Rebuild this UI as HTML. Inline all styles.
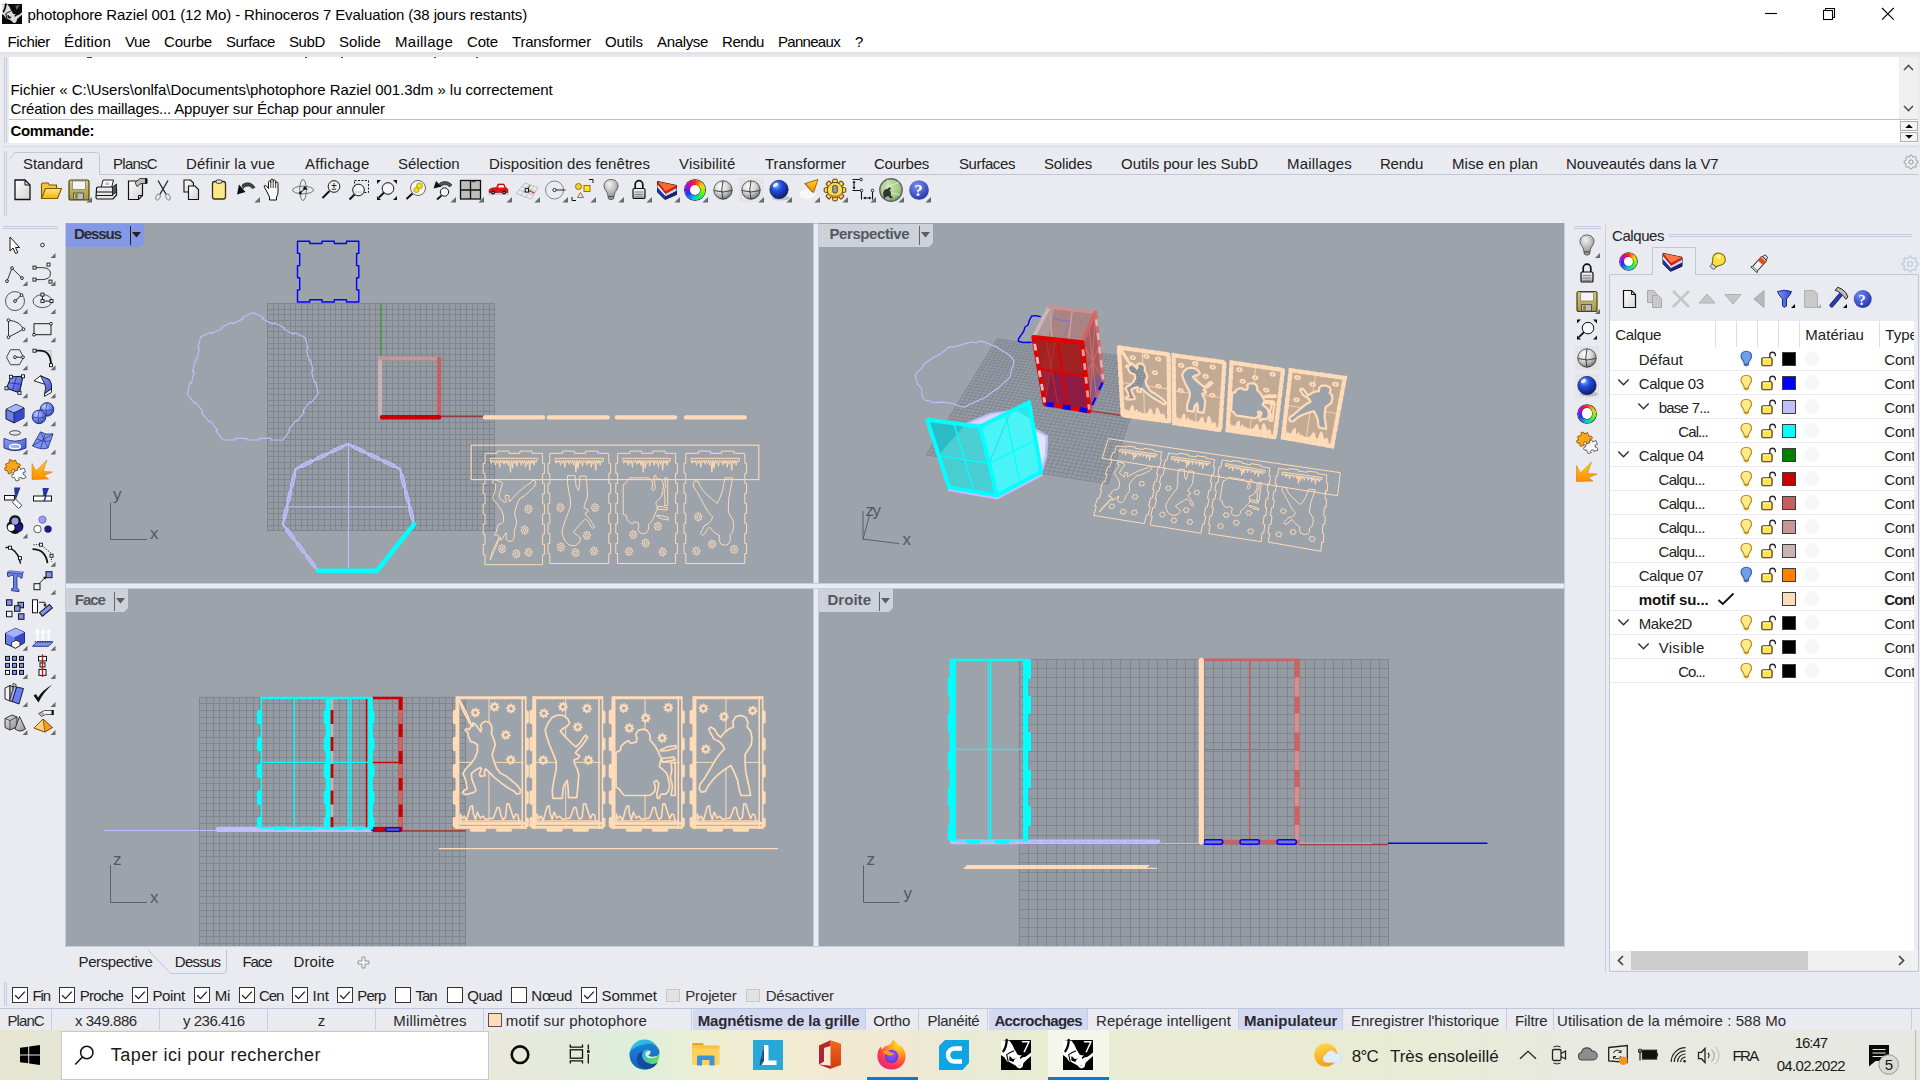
<!DOCTYPE html>
<html><head><meta charset="utf-8"><title>Rhinoceros 7</title>
<style>
html,body{margin:0;padding:0;width:1920px;height:1080px;overflow:hidden;background:#e9ebf0;font-family:"Liberation Sans",sans-serif;}
.r{position:absolute;display:block}
.t{position:absolute;white-space:pre;margin:0;padding:0}
svg{overflow:visible}
</style></head><body>
<div class="r" style="left:64px;top:221px;width:1502px;height:727px;background:#e9ebf0;"></div>
<div class="r" style="left:813px;top:223px;width:6px;height:724px;background:linear-gradient(90deg,#c3cbe1 0,#c3cbe1 1px,#e9ebf0 1.5px,#e9ebf0 4.5px,#c3cbe1 5px,#c3cbe1 6px);"></div>
<div class="r" style="left:66px;top:583px;width:1499px;height:6px;background:linear-gradient(#c3cbe1 0,#c3cbe1 1px,#e9ebf0 1.5px,#e9ebf0 4.5px,#c3cbe1 5px,#c3cbe1 6px);"></div>
<div class="r" style="left:814px;top:584px;width:4px;height:4px;background:#e9ebf0;"></div>
<div class="r" style="left:65px;top:223px;width:1500px;height:1px;background:#b9c1d6;"></div>
<div class="r" style="left:65px;top:223px;width:1px;height:724px;background:#c3cadc;"></div>
<svg class="r" style="left:66px;top:223px;overflow:hidden" width="747" height="360" viewBox="66 223 747 360"><rect x="66" y="223" width="747" height="360" fill="#9ca3ab"/><rect x="267" y="303" width="227.4" height="227.4" fill="#959ba3"/><path d="M267.5 303V530.4M267 303.5H495.4M273.5 303V530.4M267 309.5H495.4M278.5 303V530.4M267 314.5H495.4M284.5 303V530.4M267 320.5H495.4M290.5 303V530.4M267 326.5H495.4M295.5 303V530.4M267 331.5H495.4M301.5 303V530.4M267 337.5H495.4M307.5 303V530.4M267 343.5H495.4M312.5 303V530.4M267 348.5H495.4M318.5 303V530.4M267 354.5H495.4M324.5 303V530.4M267 360.5H495.4M330.5 303V530.4M267 366.5H495.4M335.5 303V530.4M267 371.5H495.4M341.5 303V530.4M267 377.5H495.4M347.5 303V530.4M267 383.5H495.4M352.5 303V530.4M267 388.5H495.4M358.5 303V530.4M267 394.5H495.4M364.5 303V530.4M267 400.5H495.4M369.5 303V530.4M267 405.5H495.4M375.5 303V530.4M267 411.5H495.4M381.5 303V530.4M267 417.5H495.4M386.5 303V530.4M267 422.5H495.4M392.5 303V530.4M267 428.5H495.4M398.5 303V530.4M267 434.5H495.4M403.5 303V530.4M267 439.5H495.4M409.5 303V530.4M267 445.5H495.4M415.5 303V530.4M267 451.5H495.4M420.5 303V530.4M267 456.5H495.4M426.5 303V530.4M267 462.5H495.4M432.5 303V530.4M267 468.5H495.4M438.5 303V530.4M267 474.5H495.4M443.5 303V530.4M267 479.5H495.4M449.5 303V530.4M267 485.5H495.4M455.5 303V530.4M267 491.5H495.4M460.5 303V530.4M267 496.5H495.4M466.5 303V530.4M267 502.5H495.4M472.5 303V530.4M267 508.5H495.4M477.5 303V530.4M267 513.5H495.4M483.5 303V530.4M267 519.5H495.4M489.5 303V530.4M267 525.5H495.4M494.5 303V530.4M267 530.5H495.4" stroke="#80858f" stroke-width="1" fill="none" shape-rendering="crispEdges"/><path d="M380.700 303V357" stroke="#4b964b" stroke-width="1.400"/><path d="M440 416.300H483" stroke="#963c3c" stroke-width="1.500"/><path d="M297.5 241.3 L309.8 241.3 L309.8 243.5 L322.0 243.5 L322.0 241.3 L334.3 241.3 L334.3 243.5 L346.5 243.5 L346.5 241.3 L358.8 241.3 L358.8 241.3 L358.8 253.4 L356.6 253.4 L356.6 265.6 L358.8 265.6 L358.8 277.7 L356.6 277.7 L356.6 289.9 L358.8 289.9 L358.8 302.0 L358.8 302.0 L346.5 302.0 L346.5 299.8 L334.3 299.8 L334.3 302.0 L322.0 302.0 L322.0 299.8 L309.8 299.8 L309.8 302.0 L297.5 302.0 L297.5 302.0 L297.5 289.9 L299.7 289.9 L299.7 277.7 L297.5 277.7 L297.5 265.6 L299.7 265.6 L299.7 253.4 L297.5 253.4 L297.5 241.3Z" fill="none" stroke="#0000ff" stroke-width="1.400" stroke-linejoin="round"/><path d="M252.8 312.6 L263.3 317.6 L262.6 319.1 L273.1 324.1 L273.8 322.7 L284.4 327.7 L283.7 329.2 L294.2 334.2 L294.9 332.8 L305.4 337.8 L305.4 337.8 L308.0 348.9 L306.4 349.3 L309.0 360.4 L310.6 360.0 L313.2 371.1 L311.6 371.5 L314.2 382.6 L315.8 382.2 L318.4 393.3 L318.4 393.3 L311.3 402.6 L310.0 401.7 L302.9 411.0 L304.2 412.0 L297.1 421.3 L295.8 420.4 L288.7 429.7 L290.0 430.7 L282.9 440.0 L282.9 440.0 L270.9 440.0 L270.9 438.4 L259.0 438.4 L259.0 440.0 L247.0 440.0 L247.0 438.4 L235.1 438.4 L235.1 440.0 L223.1 440.0 L223.1 440.0 L215.9 430.8 L217.2 429.8 L210.0 420.7 L208.8 421.6 L201.6 412.5 L202.9 411.5 L195.7 402.3 L194.5 403.3 L187.3 394.1 L187.3 394.1 L189.9 382.7 L191.5 383.0 L194.1 371.6 L192.6 371.3 L195.2 359.8 L196.8 360.2 L199.4 348.8 L197.9 348.4 L200.5 337.0 L200.5 337.0 L211.0 332.1 L211.6 333.6 L222.1 328.7 L221.4 327.2 L231.9 322.4 L232.6 323.8 L243.0 318.9 L242.3 317.5 L252.8 312.6Z" fill="none" stroke="#bfbfff" stroke-width="1.100"/><path d="M348.400 446V568M289 507H407" stroke="#bfbfff" stroke-width="1.200" fill="none"/><path d="M347.8 444.0 L400.0 468.9 L414.0 524.4 L377.1 570.7 L317.8 570.7 L282.9 524.4 L295.6 468.9Z" fill="none" stroke="#bfbfff" stroke-width="2.200" stroke-linejoin="round"/><path d="M354.1 447.0L363.5 451.5M369.7 454.5L378.1 458.4M384.3 461.4L393.7 465.9M401.7 475.6L404.2 485.5M405.9 492.2L408.1 501.1M409.8 507.8L412.3 517.7M313.6 565.1L307.3 556.8M303.1 551.3L297.6 543.8M293.4 538.3L287.1 530.0M284.4 517.7L286.7 507.8M288.2 501.1L290.3 492.2M291.8 485.5L294.1 475.6M301.9 465.9L311.3 461.4M317.5 458.4L325.9 454.5M332.1 451.5L341.5 447.0" stroke="#bfbfff" stroke-width="4" stroke-linecap="round" fill="none"/><path d="M354.1 447.0L363.5 451.5M369.7 454.5L378.1 458.4M384.3 461.4L393.7 465.9M401.7 475.6L404.2 485.5M405.9 492.2L408.1 501.1M409.8 507.8L412.3 517.7M313.6 565.1L307.3 556.8M303.1 551.3L297.6 543.8M293.4 538.3L287.1 530.0M284.4 517.7L286.7 507.8M288.2 501.1L290.3 492.2M291.8 485.5L294.1 475.6M301.9 465.9L311.3 461.4M317.5 458.4L325.9 454.5M332.1 451.5L341.5 447.0" stroke="#a4a8c8" stroke-width="1.200" stroke-linecap="round" fill="none" opacity="0.700"/><path d="M414 524.400L377.100 570.700H317.800" stroke="#00ffff" stroke-width="4.600" fill="none" stroke-linejoin="round" stroke-linecap="round"/><path d="M380 358V417.500" stroke="#c8b4b4" stroke-width="3.800" stroke-linecap="round"/><path d="M380 358.600H439" stroke="#c89696" stroke-width="3.600" stroke-linecap="round"/><path d="M439 358.600V417" stroke="#c85f5f" stroke-width="3.800" stroke-linecap="round"/><path d="M382 417.200H439" stroke="#c80000" stroke-width="4.600" stroke-linecap="round"/><path d="M485 417.400H543" stroke="#ffdbb7" stroke-width="4.400" stroke-linecap="round"/><path d="M549 417.400H607.6" stroke="#ffdbb7" stroke-width="4.400" stroke-linecap="round"/><path d="M617 417.400H675" stroke="#ffdbb7" stroke-width="4.400" stroke-linecap="round"/><path d="M686 417.400H744.6" stroke="#ffdbb7" stroke-width="4.400" stroke-linecap="round"/><rect x="471.200" y="445.200" width="287.600" height="34.400" fill="none" stroke="#ffdbb7" stroke-width="1.100"/><path d="M485.0 453.3 L497.3 453.3 L497.3 451.1 L508.9 451.1 L508.9 453.3 L519.9 453.3 L519.9 451.1 L532.2 451.1 L532.2 453.3 L542.6 453.3 L542.6 453.3 L542.6 463.4 L544.4 463.4 L544.4 473.6 L542.6 473.6 L542.6 483.7 L544.4 483.7 L544.4 493.8 L542.6 493.8 L542.6 503.9 L544.4 503.9 L544.4 514.1 L542.6 514.1 L542.6 524.2 L544.4 524.2 L544.4 534.3 L542.6 534.3 L542.6 544.4 L544.4 544.4 L544.4 554.6 L542.6 554.6 L542.6 564.7 L542.6 564.7 L485.0 564.7 L485.0 564.7 L485.0 554.6 L483.2 554.6 L483.2 544.4 L485.0 544.4 L485.0 534.3 L483.2 534.3 L483.2 524.2 L485.0 524.2 L485.0 514.1 L483.2 514.1 L483.2 503.9 L485.0 503.9 L485.0 493.8 L483.2 493.8 L483.2 483.7 L485.0 483.7 L485.0 473.6 L483.2 473.6 L483.2 463.4 L485.0 463.4 L485.0 453.3ZM507.1 540.2 L509.7 541.6 L512.2 540.8 L514.1 537.9 L514.3 534.4 L514.1 531.0 L515.8 526.4 L516.8 521.8 L515.8 518.3 L514.5 513.7 L515.8 507.9 L517.9 502.1 L520.4 498.1 L524.5 495.8 L529.6 491.2 L533.7 487.2 L535.8 483.7 L535.2 480.8 L532.7 480.2 L531.2 482.5 L526.6 485.4 L521.4 489.5 L516.3 494.1 L512.2 498.7 L509.7 501.6 L508.7 498.7 L509.2 495.8 L505.6 495.2 L505.1 497.5 L506.6 501.6 L505.6 502.7 L502.0 500.4 L499.0 497.5 L499.5 492.9 L502.5 483.7 L501.5 482.0 L494.9 479.7 L492.3 481.4 L493.3 483.1 L495.9 484.8 L494.9 491.8 L492.8 497.5 L494.4 501.0 L498.4 505.6 L501.5 510.2 L503.6 516.0 L503.6 521.8 L501.5 523.5 L498.4 524.6 L496.9 528.7 L496.4 532.1 L494.4 533.9 L495.4 535.6 L497.4 534.4 L499.0 537.7 L496.9 544.8 L493.8 551.7 L490.3 559.8 L491.8 552.9 L494.9 546.0 L497.9 539.6 L500.5 537.3 L500.0 540.2 L502.0 539.1 L504.6 535.0 L506.1 532.7 L506.6 535.6 L505.9 537.9ZM505.8 548.9 L505.7 548.0 L504.5 547.7 L504.3 547.2 L504.7 545.9 L504.1 545.4 L503.0 546.1 L502.5 545.9 L502.0 544.6 L501.3 544.7 L501.0 546.1 L500.5 546.3 L499.4 545.9 L498.9 546.5 L499.5 547.7 L499.4 548.3 L498.3 548.9 L498.4 549.7 L499.5 550.0 L499.8 550.5 L499.4 551.8 L499.9 552.4 L501.0 551.7 L501.5 551.8 L502.0 553.1 L502.7 553.0 L503.0 551.7 L503.5 551.4 L504.7 551.8 L505.1 551.2 L504.5 550.0 L504.7 549.5ZM503.4 548.9 L503.0 547.7 L502.0 547.3 L501.0 547.7 L500.6 548.9 L501.0 550.0 L502.0 550.5 L503.0 550.0ZM520.1 553.8 L520.0 553.0 L518.8 552.7 L518.6 552.1 L519.0 550.8 L518.4 550.3 L517.4 551.0 L516.9 550.8 L516.3 549.6 L515.6 549.7 L515.3 551.0 L514.8 551.3 L513.7 550.8 L513.2 551.5 L513.8 552.7 L513.7 553.2 L512.6 553.8 L512.7 554.6 L513.8 555.0 L514.1 555.5 L513.7 556.8 L514.3 557.3 L515.3 556.6 L515.8 556.8 L516.3 558.0 L517.1 557.9 L517.4 556.6 L517.8 556.3 L519.0 556.8 L519.4 556.2 L518.8 555.0 L519.0 554.4ZM517.7 553.8 L517.3 552.7 L516.3 552.2 L515.3 552.7 L514.9 553.8 L515.3 554.9 L516.3 555.4 L517.3 554.9ZM532.3 552.3 L532.3 551.5 L531.1 551.2 L530.8 550.6 L531.2 549.3 L530.7 548.8 L529.6 549.5 L529.1 549.3 L528.6 548.1 L527.9 548.2 L527.6 549.5 L527.1 549.8 L526.0 549.3 L525.5 550.0 L526.1 551.2 L526.0 551.7 L524.9 552.3 L524.9 553.1 L526.1 553.5 L526.4 554.0 L526.0 555.3 L526.5 555.8 L527.6 555.1 L528.1 555.3 L528.6 556.5 L529.3 556.4 L529.6 555.1 L530.1 554.8 L531.2 555.3 L531.7 554.7 L531.1 553.5 L531.2 552.9ZM530.0 552.3 L529.6 551.2 L528.6 550.7 L527.6 551.2 L527.2 552.3 L527.6 553.5 L528.6 553.9 L529.6 553.5ZM528.4 530.1 L528.4 529.2 L527.2 528.9 L526.9 528.4 L527.3 527.1 L526.8 526.6 L525.7 527.3 L525.2 527.1 L524.7 525.8 L524.0 525.9 L523.7 527.3 L523.2 527.5 L522.1 527.1 L521.6 527.7 L522.2 528.9 L522.1 529.5 L521.0 530.1 L521.1 530.9 L522.2 531.2 L522.5 531.7 L522.1 533.0 L522.6 533.6 L523.7 532.9 L524.2 533.0 L524.7 534.3 L525.4 534.2 L525.7 532.9 L526.2 532.6 L527.3 533.0 L527.8 532.4 L527.2 531.2 L527.3 530.6ZM526.1 530.1 L525.7 528.9 L524.7 528.5 L523.7 528.9 L523.3 530.1 L523.7 531.2 L524.7 531.7 L525.7 531.2ZM532.1 509.1 L532.1 508.2 L530.9 507.9 L530.6 507.4 L531.0 506.1 L530.5 505.6 L529.4 506.3 L528.9 506.1 L528.4 504.9 L527.7 504.9 L527.4 506.3 L526.9 506.5 L525.8 506.1 L525.3 506.7 L525.9 507.9 L525.8 508.5 L524.7 509.1 L524.7 509.9 L525.9 510.2 L526.2 510.7 L525.8 512.0 L526.3 512.6 L527.4 511.9 L527.9 512.0 L528.4 513.3 L529.1 513.2 L529.4 511.9 L529.9 511.6 L531.0 512.0 L531.5 511.4 L530.9 510.2 L531.0 509.7ZM529.8 509.1 L529.4 507.9 L528.4 507.5 L527.4 507.9 L527.0 509.1 L527.4 510.2 L528.4 510.7 L529.4 510.2ZM490.2 458.3 L537.4 458.3 L537.1 460.3 L536.2 462.3 L535.4 460.6 L534.9 460.3 L534.1 465.3 L533.2 460.6 L532.8 460.3 L531.9 463.3 L531.1 460.6 L530.6 460.3 L529.8 470.3 L528.9 460.6 L528.5 460.3 L527.6 464.3 L526.8 460.6 L526.4 460.3 L525.5 467.3 L524.6 460.6 L524.2 460.3 L523.3 463.3 L522.5 460.6 L522.1 460.3 L521.2 465.3 L520.3 460.6 L519.9 460.3 L519.1 462.3 L518.2 460.6 L517.8 460.3 L516.9 466.3 L516.1 460.6 L515.6 460.3 L514.8 463.3 L513.9 460.6 L513.5 460.3 L512.6 468.3 L511.8 460.6 L511.3 460.3 L510.5 472.3 L509.6 460.6 L509.2 460.3 L508.3 465.3 L507.5 460.6 L507.0 460.3 L506.2 463.3 L505.3 460.6 L504.9 460.3 L504.0 464.3 L503.2 460.6 L502.8 460.3 L501.9 462.3 L501.0 460.6 L500.6 460.3 L499.7 467.3 L498.9 460.6 L498.5 460.3 L497.6 463.3 L496.7 460.6 L496.3 460.3 L495.5 465.3 L494.6 460.6 L494.2 460.3 L493.3 462.3 L492.5 460.6 L492.0 460.3 L491.2 463.3 L490.3 460.6 L490.2 460.5ZM549.8 453.3 L562.4 453.3 L562.4 451.1 L574.3 451.1 L574.3 453.3 L585.6 453.3 L585.6 451.1 L598.1 451.1 L598.1 453.3 L608.8 453.3 L608.8 453.3 L608.8 463.3 L610.6 463.3 L610.6 473.3 L608.8 473.3 L608.8 483.4 L610.6 483.4 L610.6 493.4 L608.8 493.4 L608.8 503.4 L610.6 503.4 L610.6 513.4 L608.8 513.4 L608.8 523.4 L610.6 523.4 L610.6 533.4 L608.8 533.4 L608.8 543.5 L610.6 543.5 L610.6 553.5 L608.8 553.5 L608.8 563.5 L608.8 563.5 L549.8 563.5 L549.8 563.5 L549.8 553.5 L548.0 553.5 L548.0 543.5 L549.8 543.5 L549.8 533.4 L548.0 533.4 L548.0 523.4 L549.8 523.4 L549.8 513.4 L548.0 513.4 L548.0 503.4 L549.8 503.4 L549.8 493.4 L548.0 493.4 L548.0 483.4 L549.8 483.4 L549.8 473.3 L548.0 473.3 L548.0 463.3 L549.8 463.3 L549.8 453.3ZM567.2 543.6 L571.4 545.7 L575.6 545.4 L579.3 542.5 L580.6 539.0 L578.7 536.1 L575.1 533.8 L573.5 532.1 L576.7 528.1 L581.9 522.3 L585.6 518.8 L588.7 522.3 L591.3 526.9 L592.9 528.6 L594.5 526.9 L592.4 523.4 L589.8 519.4 L586.6 515.9 L585.0 513.6 L588.2 511.3 L587.1 509.0 L584.0 507.9 L584.5 504.4 L586.6 499.8 L587.7 495.2 L587.1 488.3 L586.6 481.3 L586.1 476.1 L579.8 476.1 L579.6 483.6 L578.7 490.6 L576.1 486.0 L575.4 480.2 L575.1 475.6 L567.7 475.6 L567.4 482.5 L568.8 491.7 L570.4 499.8 L570.4 506.7 L568.3 512.5 L565.6 519.4 L563.0 527.5 L562.0 533.2 L564.1 539.0ZM564.7 547.1 L564.7 546.3 L563.5 545.9 L563.2 545.4 L563.6 544.1 L563.0 543.6 L562.0 544.3 L561.5 544.1 L560.9 542.9 L560.2 543.0 L559.9 544.3 L559.4 544.6 L558.2 544.1 L557.7 544.7 L558.4 545.9 L558.2 546.5 L557.1 547.1 L557.2 547.9 L558.4 548.2 L558.6 548.8 L558.2 550.1 L558.8 550.6 L559.9 549.9 L560.4 550.1 L560.9 551.3 L561.7 551.2 L562.0 549.9 L562.4 549.6 L563.6 550.1 L564.1 549.4 L563.5 548.2 L563.6 547.7ZM562.4 547.1 L561.9 546.0 L560.9 545.5 L559.9 546.0 L559.5 547.1 L559.9 548.2 L560.9 548.7 L561.9 548.2ZM579.4 552.6 L579.4 551.8 L578.1 551.5 L577.9 550.9 L578.3 549.6 L577.7 549.1 L576.7 549.8 L576.1 549.6 L575.6 548.4 L574.9 548.5 L574.5 549.8 L574.1 550.1 L572.9 549.6 L572.4 550.3 L573.1 551.5 L572.9 552.0 L571.8 552.6 L571.8 553.4 L573.1 553.8 L573.3 554.3 L572.9 555.6 L573.5 556.1 L574.5 555.4 L575.1 555.6 L575.6 556.8 L576.3 556.7 L576.7 555.4 L577.1 555.1 L578.3 555.6 L578.8 555.0 L578.1 553.8 L578.3 553.2ZM577.1 552.6 L576.6 551.5 L575.6 551.0 L574.6 551.5 L574.1 552.6 L574.6 553.7 L575.6 554.2 L576.6 553.7ZM597.8 551.1 L597.7 550.3 L596.5 550.0 L596.3 549.4 L596.7 548.1 L596.1 547.6 L595.0 548.3 L594.5 548.1 L594.0 546.9 L593.2 547.0 L592.9 548.3 L592.4 548.6 L591.3 548.1 L590.8 548.8 L591.4 550.0 L591.3 550.5 L590.1 551.1 L590.2 551.9 L591.4 552.3 L591.7 552.8 L591.3 554.1 L591.8 554.6 L592.9 553.9 L593.4 554.1 L594.0 555.3 L594.7 555.2 L595.0 553.9 L595.5 553.6 L596.7 554.1 L597.1 553.5 L596.5 552.3 L596.7 551.7ZM595.4 551.1 L595.0 550.0 L594.0 549.5 L592.9 550.0 L592.5 551.1 L592.9 552.3 L594.0 552.7 L595.0 552.3ZM590.8 535.5 L590.7 534.7 L589.5 534.4 L589.2 533.9 L589.6 532.6 L589.1 532.0 L588.0 532.7 L587.5 532.6 L586.9 531.3 L586.2 531.4 L585.9 532.7 L585.4 533.0 L584.2 532.6 L583.7 533.2 L584.4 534.4 L584.2 535.0 L583.1 535.5 L583.2 536.4 L584.4 536.7 L584.6 537.2 L584.2 538.5 L584.8 539.0 L585.9 538.3 L586.4 538.5 L586.9 539.8 L587.7 539.7 L588.0 538.3 L588.5 538.1 L589.6 538.5 L590.1 537.9 L589.5 536.7 L589.6 536.1ZM588.4 535.5 L588.0 534.4 L586.9 533.9 L585.9 534.4 L585.5 535.5 L585.9 536.7 L586.9 537.1 L588.0 536.7ZM564.2 507.6 L564.1 506.8 L562.9 506.5 L562.7 506.0 L563.1 504.7 L562.5 504.1 L561.4 504.8 L560.9 504.7 L560.4 503.4 L559.6 503.5 L559.3 504.8 L558.9 505.1 L557.7 504.7 L557.2 505.3 L557.8 506.5 L557.7 507.0 L556.6 507.6 L556.6 508.5 L557.8 508.8 L558.1 509.3 L557.7 510.6 L558.3 511.1 L559.3 510.4 L559.9 510.6 L560.4 511.8 L561.1 511.8 L561.4 510.4 L561.9 510.2 L563.1 510.6 L563.6 510.0 L562.9 508.8 L563.1 508.2ZM561.8 507.6 L561.4 506.5 L560.4 506.0 L559.4 506.5 L558.9 507.6 L559.4 508.8 L560.4 509.2 L561.4 508.8ZM598.8 507.6 L598.8 506.8 L597.6 506.5 L597.3 506.0 L597.7 504.7 L597.1 504.1 L596.1 504.8 L595.5 504.7 L595.0 503.4 L594.3 503.5 L594.0 504.8 L593.5 505.1 L592.3 504.7 L591.8 505.3 L592.5 506.5 L592.3 507.0 L591.2 507.6 L591.3 508.5 L592.5 508.8 L592.7 509.3 L592.3 510.6 L592.9 511.1 L594.0 510.4 L594.5 510.6 L595.0 511.8 L595.8 511.8 L596.1 510.4 L596.5 510.2 L597.7 510.6 L598.2 510.0 L597.6 508.8 L597.7 508.2ZM596.5 507.6 L596.0 506.5 L595.0 506.0 L594.0 506.5 L593.6 507.6 L594.0 508.8 L595.0 509.2 L596.0 508.8ZM555.0 458.3 L603.6 458.3 L603.3 460.3 L602.4 462.3 L601.5 460.6 L601.1 460.3 L600.2 465.3 L599.3 460.6 L598.9 460.3 L598.0 463.3 L597.1 460.6 L596.6 460.3 L595.8 470.3 L594.9 460.6 L594.4 460.3 L593.5 464.3 L592.7 460.6 L592.2 460.3 L591.3 467.3 L590.5 460.6 L590.0 460.3 L589.1 463.3 L588.2 460.6 L587.8 460.3 L586.9 465.3 L586.0 460.6 L585.6 460.3 L584.7 462.3 L583.8 460.6 L583.4 460.3 L582.5 466.3 L581.6 460.6 L581.2 460.3 L580.3 463.3 L579.4 460.6 L579.0 460.3 L578.1 468.3 L577.2 460.6 L576.8 460.3 L575.9 472.3 L575.0 460.6 L574.6 460.3 L573.7 465.3 L572.8 460.6 L572.3 460.3 L571.5 463.3 L570.6 460.6 L570.1 460.3 L569.2 464.3 L568.4 460.6 L567.9 460.3 L567.0 462.3 L566.2 460.6 L565.7 460.3 L564.8 467.3 L563.9 460.6 L563.5 460.3 L562.6 463.3 L561.7 460.6 L561.3 460.3 L560.4 465.3 L559.5 460.6 L559.1 460.3 L558.2 462.3 L557.3 460.6 L556.9 460.3 L556.0 463.3 L555.1 460.6 L555.0 460.5ZM617.6 453.3 L630.0 453.3 L630.0 451.1 L641.7 451.1 L641.7 453.3 L652.8 453.3 L652.8 451.1 L665.1 451.1 L665.1 453.3 L675.6 453.3 L675.6 453.3 L675.6 463.3 L677.4 463.3 L677.4 473.3 L675.6 473.3 L675.6 483.4 L677.4 483.4 L677.4 493.4 L675.6 493.4 L675.6 503.4 L677.4 503.4 L677.4 513.4 L675.6 513.4 L675.6 523.4 L677.4 523.4 L677.4 533.4 L675.6 533.4 L675.6 543.5 L677.4 543.5 L677.4 553.5 L675.6 553.5 L675.6 563.5 L675.6 563.5 L617.6 563.5 L617.6 563.5 L617.6 553.5 L615.8 553.5 L615.8 543.5 L617.6 543.5 L617.6 533.4 L615.8 533.4 L615.8 523.4 L617.6 523.4 L617.6 513.4 L615.8 513.4 L615.8 503.4 L617.6 503.4 L617.6 493.4 L615.8 493.4 L615.8 483.4 L617.6 483.4 L617.6 473.3 L615.8 473.3 L615.8 463.3 L617.6 463.3 L617.6 453.3ZM623.2 514.2 L626.5 515.9 L627.0 519.4 L629.6 522.3 L632.7 524.0 L634.2 521.7 L638.3 522.9 L638.9 526.3 L638.0 529.8 L639.9 532.7 L643.5 533.8 L646.6 532.7 L648.6 529.2 L648.6 524.6 L650.2 522.9 L652.8 519.4 L654.8 514.8 L656.4 511.3 L657.4 509.0 L656.4 505.6 L655.8 502.1 L658.4 499.8 L661.5 496.3 L662.5 491.7 L663.6 486.0 L662.5 481.3 L660.5 479.0 L657.4 479.0 L656.4 477.9 L655.8 475.6 L654.3 475.6 L653.8 479.0 L654.8 483.6 L655.3 488.3 L653.8 490.6 L651.7 489.4 L652.8 484.8 L652.2 481.3 L650.2 479.0 L648.1 477.9 L629.6 477.9 L627.5 480.2 L625.5 483.6 L623.2 484.8ZM656.4 515.9 L661.5 518.8 L668.2 520.0 L668.2 517.7 L662.5 515.9 L656.9 515.4ZM657.4 509.0 L666.7 510.2 L667.7 507.9 L658.4 506.1ZM664.6 505.6 L667.7 505.6 L667.7 477.9 L664.6 477.9 L665.6 486.0 L664.1 492.9 L665.1 499.8ZM632.8 551.5 L632.8 550.6 L631.6 550.3 L631.3 549.8 L631.7 548.5 L631.2 548.0 L630.1 548.7 L629.6 548.5 L629.1 547.3 L628.3 547.3 L628.0 548.7 L627.6 548.9 L626.4 548.5 L625.9 549.1 L626.6 550.3 L626.4 550.9 L625.3 551.5 L625.4 552.3 L626.6 552.6 L626.8 553.1 L626.4 554.4 L627.0 555.0 L628.0 554.3 L628.5 554.4 L629.1 555.7 L629.8 555.6 L630.1 554.3 L630.6 554.0 L631.7 554.4 L632.2 553.8 L631.6 552.6 L631.7 552.1ZM630.5 551.5 L630.1 550.3 L629.1 549.9 L628.1 550.3 L627.6 551.5 L628.1 552.6 L629.1 553.1 L630.1 552.6ZM666.3 551.9 L666.2 551.1 L665.0 550.8 L664.8 550.2 L665.2 548.9 L664.6 548.4 L663.6 549.1 L663.1 549.0 L662.5 547.7 L661.8 547.8 L661.5 549.1 L661.0 549.4 L659.9 548.9 L659.4 549.6 L660.0 550.8 L659.9 551.3 L658.8 551.9 L658.9 552.7 L660.0 553.1 L660.3 553.6 L659.9 554.9 L660.4 555.4 L661.5 554.7 L662.0 554.9 L662.5 556.1 L663.3 556.1 L663.6 554.7 L664.0 554.4 L665.2 554.9 L665.7 554.3 L665.0 553.1 L665.2 552.5ZM664.0 551.9 L663.5 550.8 L662.5 550.3 L661.5 550.8 L661.1 551.9 L661.5 553.1 L662.5 553.5 L663.5 553.1ZM649.3 543.0 L649.2 542.2 L648.0 541.9 L647.8 541.4 L648.2 540.1 L647.6 539.5 L646.6 540.2 L646.1 540.1 L645.5 538.8 L644.8 538.9 L644.5 540.2 L644.0 540.5 L642.9 540.1 L642.4 540.7 L643.0 541.9 L642.9 542.5 L641.8 543.0 L641.9 543.9 L643.0 544.2 L643.3 544.7 L642.9 546.0 L643.5 546.5 L644.5 545.8 L645.0 546.0 L645.5 547.3 L646.3 547.2 L646.6 545.8 L647.0 545.6 L648.2 546.0 L648.7 545.4 L648.0 544.2 L648.2 543.6ZM647.0 543.0 L646.6 541.9 L645.5 541.4 L644.5 541.9 L644.1 543.0 L644.5 544.2 L645.5 544.6 L646.6 544.2ZM636.9 534.6 L636.9 533.8 L635.7 533.5 L635.4 532.9 L635.8 531.6 L635.3 531.1 L634.2 531.8 L633.7 531.7 L633.2 530.4 L632.5 530.5 L632.2 531.8 L631.7 532.1 L630.5 531.6 L630.1 532.3 L630.7 533.5 L630.5 534.0 L629.4 534.6 L629.5 535.4 L630.7 535.8 L630.9 536.3 L630.5 537.6 L631.1 538.1 L632.2 537.4 L632.7 537.6 L633.2 538.8 L633.9 538.8 L634.2 537.4 L634.7 537.1 L635.8 537.6 L636.3 537.0 L635.7 535.8 L635.8 535.2ZM634.6 534.6 L634.2 533.5 L633.2 533.0 L632.2 533.5 L631.8 534.6 L632.2 535.8 L633.2 536.2 L634.2 535.8ZM661.7 526.3 L661.6 525.5 L660.4 525.2 L660.2 524.6 L660.6 523.3 L660.0 522.8 L658.9 523.5 L658.4 523.3 L657.9 522.1 L657.2 522.2 L656.9 523.5 L656.4 523.8 L655.2 523.3 L654.8 524.0 L655.4 525.2 L655.2 525.7 L654.1 526.3 L654.2 527.1 L655.4 527.5 L655.7 528.0 L655.2 529.3 L655.8 529.8 L656.9 529.1 L657.4 529.3 L657.9 530.5 L658.6 530.4 L658.9 529.1 L659.4 528.8 L660.6 529.3 L661.0 528.7 L660.4 527.5 L660.6 526.9ZM659.3 526.3 L658.9 525.2 L657.9 524.7 L656.9 525.2 L656.5 526.3 L656.9 527.5 L657.9 527.9 L658.9 527.5ZM622.8 458.3 L670.4 458.3 L670.1 460.3 L669.2 462.3 L668.3 460.6 L667.9 460.3 L667.0 465.3 L666.2 460.6 L665.7 460.3 L664.9 463.3 L664.0 460.6 L663.6 460.3 L662.7 470.3 L661.9 460.6 L661.4 460.3 L660.6 464.3 L659.7 460.6 L659.3 460.3 L658.4 467.3 L657.5 460.6 L657.1 460.3 L656.2 463.3 L655.4 460.6 L654.9 460.3 L654.1 465.3 L653.2 460.6 L652.8 460.3 L651.9 462.3 L651.0 460.6 L650.6 460.3 L649.7 466.3 L648.9 460.6 L648.4 460.3 L647.6 463.3 L646.7 460.6 L646.3 460.3 L645.4 468.3 L644.5 460.6 L644.1 460.3 L643.2 472.3 L642.4 460.6 L641.9 460.3 L641.1 465.3 L640.2 460.6 L639.8 460.3 L638.9 463.3 L638.1 460.6 L637.6 460.3 L636.8 464.3 L635.9 460.6 L635.5 460.3 L634.6 462.3 L633.7 460.6 L633.3 460.3 L632.4 467.3 L631.6 460.6 L631.1 460.3 L630.3 463.3 L629.4 460.6 L629.0 460.3 L628.1 465.3 L627.2 460.6 L626.8 460.3 L625.9 462.3 L625.1 460.6 L624.6 460.3 L623.8 463.3 L622.9 460.6 L622.8 460.5ZM685.8 453.3 L698.4 453.3 L698.4 451.1 L710.3 451.1 L710.3 453.3 L721.6 453.3 L721.6 451.1 L734.1 451.1 L734.1 453.3 L744.8 453.3 L744.8 453.3 L744.8 463.3 L746.6 463.3 L746.6 473.3 L744.8 473.3 L744.8 483.4 L746.6 483.4 L746.6 493.4 L744.8 493.4 L744.8 503.4 L746.6 503.4 L746.6 513.4 L744.8 513.4 L744.8 523.4 L746.6 523.4 L746.6 533.4 L744.8 533.4 L744.8 543.5 L746.6 543.5 L746.6 553.5 L744.8 553.5 L744.8 563.5 L744.8 563.5 L685.8 563.5 L685.8 563.5 L685.8 553.5 L684.0 553.5 L684.0 543.5 L685.8 543.5 L685.8 533.4 L684.0 533.4 L684.0 523.4 L685.8 523.4 L685.8 513.4 L684.0 513.4 L684.0 503.4 L685.8 503.4 L685.8 493.4 L684.0 493.4 L684.0 483.4 L685.8 483.4 L685.8 473.3 L684.0 473.3 L684.0 463.3 L685.8 463.3 L685.8 453.3ZM718.9 540.2 L721.0 544.2 L725.2 545.4 L728.9 543.6 L730.5 539.6 L730.0 535.5 L732.6 532.1 L733.6 526.3 L733.1 520.6 L730.5 515.9 L728.4 512.5 L728.4 505.6 L728.9 497.5 L730.5 489.4 L732.1 481.3 L732.6 477.9 L725.2 477.9 L723.7 483.6 L722.6 490.6 L720.0 497.5 L717.4 503.3 L712.7 499.8 L707.4 495.2 L703.2 490.6 L700.1 486.0 L698.0 481.3 L694.8 480.8 L693.2 483.6 L693.8 487.1 L696.9 491.7 L700.1 497.5 L703.2 503.3 L706.4 509.0 L709.5 513.6 L712.7 517.1 L711.1 520.6 L708.5 523.4 L704.3 525.7 L703.2 528.1 L701.6 530.9 L700.6 533.8 L702.2 535.5 L705.3 533.2 L706.9 529.8 L709.5 526.9 L712.7 530.9 L715.8 533.8 L719.5 535.5ZM700.2 551.1 L700.1 550.3 L698.9 550.0 L698.7 549.4 L699.1 548.1 L698.5 547.6 L697.4 548.3 L696.9 548.1 L696.4 546.9 L695.6 547.0 L695.3 548.3 L694.9 548.6 L693.7 548.1 L693.2 548.8 L693.8 550.0 L693.7 550.5 L692.6 551.1 L692.6 551.9 L693.8 552.3 L694.1 552.8 L693.7 554.1 L694.3 554.6 L695.3 553.9 L695.9 554.1 L696.4 555.3 L697.1 555.2 L697.4 553.9 L697.9 553.6 L699.1 554.1 L699.6 553.5 L698.9 552.3 L699.1 551.7ZM697.8 551.1 L697.4 550.0 L696.4 549.5 L695.4 550.0 L694.9 551.1 L695.4 552.3 L696.4 552.7 L697.4 552.3ZM738.0 549.4 L737.9 548.6 L736.7 548.2 L736.4 547.7 L736.9 546.4 L736.3 545.9 L735.2 546.6 L734.7 546.4 L734.2 545.2 L733.4 545.3 L733.1 546.6 L732.6 546.9 L731.4 546.4 L731.0 547.1 L731.6 548.2 L731.5 548.8 L730.3 549.4 L730.4 550.2 L731.6 550.5 L731.9 551.1 L731.4 552.4 L732.0 552.9 L733.1 552.2 L733.6 552.4 L734.2 553.6 L734.9 553.5 L735.2 552.2 L735.7 551.9 L736.9 552.4 L737.3 551.7 L736.7 550.5 L736.9 550.0ZM735.6 549.4 L735.2 548.3 L734.2 547.8 L733.1 548.3 L732.7 549.4 L733.1 550.5 L734.2 551.0 L735.2 550.5ZM716.0 544.2 L715.9 543.4 L714.7 543.0 L714.4 542.5 L714.8 541.2 L714.3 540.7 L713.2 541.4 L712.7 541.2 L712.1 540.0 L711.4 540.1 L711.1 541.4 L710.6 541.7 L709.4 541.2 L708.9 541.9 L709.6 543.0 L709.4 543.6 L708.3 544.2 L708.4 545.0 L709.6 545.4 L709.8 545.9 L709.4 547.2 L710.0 547.7 L711.1 547.0 L711.6 547.2 L712.1 548.4 L712.9 548.3 L713.2 547.0 L713.7 546.7 L714.8 547.2 L715.3 546.5 L714.7 545.4 L714.8 544.8ZM713.6 544.2 L713.2 543.1 L712.1 542.6 L711.1 543.1 L710.7 544.2 L711.1 545.3 L712.1 545.8 L713.2 545.3ZM702.1 516.9 L702.0 516.0 L700.8 515.7 L700.6 515.2 L701.0 513.9 L700.4 513.4 L699.3 514.1 L698.8 513.9 L698.3 512.7 L697.5 512.7 L697.2 514.1 L696.7 514.3 L695.6 513.9 L695.1 514.5 L695.7 515.7 L695.6 516.3 L694.5 516.9 L694.5 517.7 L695.7 518.0 L696.0 518.5 L695.6 519.8 L696.2 520.4 L697.2 519.7 L697.7 519.8 L698.3 521.1 L699.0 521.0 L699.3 519.7 L699.8 519.4 L701.0 519.8 L701.5 519.2 L700.8 518.0 L701.0 517.5ZM699.7 516.9 L699.3 515.7 L698.3 515.3 L697.3 515.7 L696.8 516.9 L697.3 518.0 L698.3 518.5 L699.3 518.0ZM691.0 458.3 L739.6 458.3 L739.3 460.3 L738.4 462.3 L737.5 460.6 L737.1 460.3 L736.2 465.3 L735.3 460.6 L734.9 460.3 L734.0 463.3 L733.1 460.6 L732.6 460.3 L731.8 470.3 L730.9 460.6 L730.4 460.3 L729.5 464.3 L728.7 460.6 L728.2 460.3 L727.3 467.3 L726.5 460.6 L726.0 460.3 L725.1 463.3 L724.2 460.6 L723.8 460.3 L722.9 465.3 L722.0 460.6 L721.6 460.3 L720.7 462.3 L719.8 460.6 L719.4 460.3 L718.5 466.3 L717.6 460.6 L717.2 460.3 L716.3 463.3 L715.4 460.6 L715.0 460.3 L714.1 468.3 L713.2 460.6 L712.8 460.3 L711.9 472.3 L711.0 460.6 L710.6 460.3 L709.7 465.3 L708.8 460.6 L708.3 460.3 L707.5 463.3 L706.6 460.6 L706.1 460.3 L705.2 464.3 L704.4 460.6 L703.9 460.3 L703.0 462.3 L702.2 460.6 L701.7 460.3 L700.8 467.3 L699.9 460.6 L699.5 460.3 L698.6 463.3 L697.7 460.6 L697.3 460.3 L696.4 465.3 L695.5 460.6 L695.1 460.3 L694.2 462.3 L693.3 460.6 L692.9 460.3 L692.0 463.3 L691.1 460.6 L691.0 460.5Z" fill="none" stroke="#ffdbb7" stroke-width="1" stroke-linejoin="round"/><path d="M110.500 502.500V539.500H147" stroke="#5c6066" stroke-width="1" fill="none"/></svg><div class="t" style="left:113.0px;top:484.6px;font-size:17px;line-height:20px;letter-spacing:-1.00px;color:#55585e;">y</div><div class="t" style="left:150.0px;top:524.1px;font-size:17px;line-height:20px;letter-spacing:-0.50px;color:#55585e;">x</div><div class="r" style="left:66px;top:224px;width:78px;height:23px;background:#8499e6;clip-path:polygon(0 0,100% 0,100% 19px,74px 100%,0 100%)"></div><div class="t" style="left:74.0px;top:225.4px;font-size:15px;line-height:18px;letter-spacing:-1.06px;color:#2b2b33;font-weight:bold;">Dessus</div><div class="r" style="left:129.5px;top:226px;width:1px;height:19px;background:#222;"></div><svg class="r" style="left:131.5px;top:231.5px" width="9" height="6" viewBox="0 0 9 6"><path d="M0 0H9L4.500 5.500Z" fill="#222"/></svg>
<svg class="r" style="left:819px;top:223px;overflow:hidden" width="745" height="360" viewBox="819 223 745 360"><rect x="819" y="223" width="745" height="360" fill="#9ca3ab"/><path d="M997.0 339.0 L1150.0 360.0 L1108.0 484.0 L926.0 455.0Z" fill="#959ba3"/><path d="M997.0 339.0L926.0 455.0M997.0 339.0L1150.0 360.0M1000.7 339.5L930.4 455.7M995.5 341.4L1149.1 362.6M1004.5 340.0L934.8 456.4M994.0 343.9L1148.2 365.2M1008.2 340.5L939.3 457.1M992.5 346.4L1147.4 367.8M1011.9 341.1L943.7 457.8M991.0 348.8L1146.5 370.5M1015.7 341.6L948.1 458.5M989.4 351.4L1145.5 373.1M1019.4 342.1L952.6 459.2M987.9 353.9L1144.6 375.8M1023.2 342.6L957.0 459.9M986.3 356.4L1143.7 378.6M1027.0 343.1L961.5 460.7M984.7 359.0L1142.8 381.3M1030.7 343.6L966.0 461.4M983.2 361.6L1141.8 384.1M1034.5 344.1L970.4 462.1M981.5 364.2L1140.9 386.9M1038.3 344.7L974.9 462.8M979.9 366.9L1139.9 389.7M1042.1 345.2L979.4 463.5M978.3 369.6L1139.0 392.5M1045.8 345.7L983.9 464.2M976.6 372.3L1138.0 395.4M1049.6 346.2L988.4 464.9M975.0 375.0L1137.0 398.3M1053.4 346.7L992.9 465.7M973.3 377.7L1136.0 401.2M1057.2 347.3L997.4 466.4M971.6 380.5L1135.0 404.2M1061.0 347.8L1002.0 467.1M969.9 383.3L1134.0 407.2M1064.9 348.3L1006.5 467.8M968.2 386.1L1133.0 410.2M1068.7 348.8L1011.0 468.5M966.5 388.9L1132.0 413.2M1072.5 349.4L1015.6 469.3M964.7 391.8L1130.9 416.3M1076.3 349.9L1020.1 470.0M962.9 394.7L1129.9 419.3M1080.2 350.4L1024.7 470.7M961.1 397.6L1128.8 422.5M1084.0 350.9L1029.2 471.5M959.3 400.5L1127.8 425.6M1087.8 351.5L1033.8 472.2M957.5 403.5L1126.7 428.8M1091.7 352.0L1038.4 472.9M955.7 406.5L1125.6 432.0M1095.5 352.5L1043.0 473.6M953.8 409.5L1124.5 435.2M1099.4 353.1L1047.6 474.4M952.0 412.6L1123.4 438.5M1103.3 353.6L1052.2 475.1M950.1 415.6L1122.3 441.8M1107.1 354.1L1056.8 475.8M948.2 418.8L1121.2 445.1M1111.0 354.6L1061.4 476.6M946.3 421.9L1120.0 448.5M1114.9 355.2L1066.0 477.3M944.3 425.1L1118.9 451.9M1118.8 355.7L1070.7 478.1M942.4 428.3L1117.7 455.3M1122.6 356.2L1075.3 478.8M940.4 431.5L1116.5 458.8M1126.5 356.8L1080.0 479.5M938.4 434.8L1115.4 462.3M1130.4 357.3L1084.6 480.3M936.4 438.0L1114.2 465.8M1134.3 357.8L1089.3 481.0M934.3 441.4L1113.0 469.4M1138.2 358.4L1093.9 481.8M932.3 444.7L1111.7 473.0M1142.2 358.9L1098.6 482.5M930.2 448.1L1110.5 476.6M1146.1 359.5L1103.3 483.3M928.1 451.5L1109.3 480.3M1150.0 360.0L1108.0 484.0M926.0 455.0L1108.0 484.0" stroke="#80858f" stroke-width="0.900" fill="none" opacity="0.900"/><path d="M984.5 342.1 L990.7 344.7 L996.4 346.7 L999.9 349.3 L1006.3 353.0 L1010.6 356.2 L1013.9 360.7 L1013.3 365.7 L1011.7 369.5 L1010.5 374.7 L1009.7 377.3 L1005.7 381.2 L1001.2 385.4 L995.8 390.0 L992.1 392.1 L986.3 397.0 L977.7 400.7 L971.5 403.6 L964.3 407.2 L959.3 406.2 L953.6 403.7 L947.5 402.7 L942.0 402.1 L937.4 402.6 L932.2 402.3 L928.2 400.6 L924.6 400.0 L922.4 396.5 L921.8 392.3 L921.9 389.0 L920.8 387.6 L917.7 384.6 L916.8 381.1 L915.4 377.1 L915.2 375.7 L917.7 371.8 L921.7 368.2 L924.1 364.0 L927.8 361.5 L932.6 358.0 L939.5 354.6 L943.6 351.5 L949.3 346.9 L954.7 346.9 L958.7 345.7 L963.8 343.9 L968.2 343.0 L971.4 342.0 L976.3 342.8 L979.5 340.9Z" fill="none" stroke="#bfbfff" stroke-width="1.100" stroke-linejoin="round"/><path d="M1040.7 316.7 L1036.0 315.6 L1031.7 316.0 L1029.3 320.3 L1028.0 325.0 L1025.0 327.0 L1023.8 331.0 L1021.4 334.7 L1018.4 339.0 L1018.4 341.3 L1023.2 342.5 L1031.7 342.2" fill="none" stroke="#0000ff" stroke-width="1.400" stroke-linejoin="round"/><path d="M1033.5 337.1 L1049.1 307.0 L1095.4 312.4 L1082.2 342.5Z" fill="#a88484"/><path d="M1033.5 337.1 L1049.1 307.0 L1054.7 307.6 L1048.1 338.7Z" fill="#aa9c9c"/><path d="M1053.3 318.5 L1061.7 320.3 L1070.2 320.9 L1069.0 326.3 L1066.0 329.9 L1065.4 333.5 L1061.7 337.1" fill="none" stroke="#7a70c8" stroke-width="0.900"/><path d="M1050.0259999999998 309L1052.006 339.152M1072.25 309.7L1068.564 340.988" stroke="#d09a9a" stroke-width="1.600" fill="none"/><path d="M1082.2 342.5 L1095.4 312.4 L1103.3 381.0 L1089.4 411.1Z" fill="#a05c60"/><path d="M1086.7 385.0 L1101.9 368.7 L1103.3 381.0 L1089.4 411.1Z" fill="#7c5a8c"/><path d="M1082.2 342.5L1103.3 381M1095.4 312.4L1089.4 411.1M1088.8000000000002 327.45L1096.35 396.05M1085.8000000000002 376.8L1099.35 346.7" stroke="#d46a6a" stroke-width="1.100" fill="none"/><path d="M1033.5 337.1 L1082.2 342.5 L1089.4 411.1 L1044.9 403.9Z" fill="#a02222"/><path d="M1038.6 367.2 L1085.8 376.8 L1089.4 411.1 L1044.9 403.9Z" fill="#8c1c46"/><path d="M1038.6 367.2 L1053.0 339.3 L1044.9 403.9Z" fill="#a82a2a" opacity="0.600"/><path d="M1044.9 403.9L1055.415 339.53000000000003M1045.675 338.45000000000005L1058.25 406.06" stroke="#c83030" stroke-width="0.900" fill="none"/><path d="M1033.5 337.1L1049.1 307" stroke="#cdb6b6" stroke-width="3.600" stroke-linecap="round"/><path d="M1049.1 307L1095.4 312.4" stroke="#d08e8e" stroke-width="3.400" stroke-linecap="round"/><path d="M1082.2 342.5L1095.4 312.4" stroke="#d46262" stroke-width="3.800" stroke-linecap="round"/><path d="M1095.4 312.4L1103.3 381" stroke="#d46a6a" stroke-width="3.200" stroke-linecap="round"/><path d="M1096.2 319.3L1097.0 326.1M1097.8 333.0L1098.6 339.8M1099.3 346.7L1100.1 353.6M1100.9 360.4L1101.7 367.3M1102.5 374.1L1103.1 379.6" stroke="#e0b4b4" stroke-width="2.600" fill="none"/><path d="M1103.3 381L1089.4 411.1" stroke="#c85a6a" stroke-width="2.600" stroke-linecap="round"/><path d="M1102.6 382.5L1099.1 390.0M1095.7 397.6L1092.2 405.1" stroke="#0000ff" stroke-width="2.200" fill="none"/><path d="M1033.5 337.1 L1082.2 342.5 L1089.4 411.1 L1044.9 403.9Z" fill="none" stroke="#e00000" stroke-width="4.400" stroke-linejoin="round"/><path d="M1038.858 368.496L1085.8000000000002 376.8M1057.85 339.8L1067.15 407.5" stroke="#e00000" stroke-width="2.200" fill="none"/><path d="M1034.6 343.8L1035.8 350.5M1036.9 357.1L1038.1 363.8M1039.2 370.5L1040.3 377.2M1041.5 383.9L1042.6 390.5M1043.8 397.2L1044.7 402.6" stroke="#e6c0c0" stroke-width="2.800" fill="none"/><path d="M1082.9 349.4L1083.6 356.2M1084.4 363.1L1085.1 369.9M1085.8 376.8L1086.5 383.7M1087.2 390.5L1088.0 397.4M1088.7 404.2L1089.3 409.7" stroke="#e69c9c" stroke-width="2.800" fill="none"/><path d="M1046.2 404.1L1053.8 405.3M1062.7 406.8L1070.7 408.1M1079.6 409.5L1087.2 410.7" stroke="#0000ff" stroke-width="4.600" fill="none"/><path d="M1091.800 411.300L1121.900 415.500" stroke="#a04040" stroke-width="1.600"/><path d="M966 424L990 414L1010 411L1000 426Z" fill="#d8d8fa" stroke="#bfbfff" stroke-width="2"/><path d="M1032 428L1047 436L1046 456L1041 474L1036 470Z" fill="#e4e4f6" stroke="#bfbfff" stroke-width="2.500" stroke-linejoin="round"/><path d="M948.1 489.4L997 497.9L1042.2 474.5" fill="none" stroke="#bfbfff" stroke-width="3" stroke-linejoin="round"/><path d="M927.2 419.8 L980.0 426.7 L997.0 495.4 L949.1 487.4Z" fill="#4ccfd2"/><path d="M927.2 419.8 L965.2 424.8 L938.6 455.0Z" fill="#2cbcc8"/><path d="M938.2 453.6 L988.5 461.0 L992.2 476.2 L975.4 491.8 L953.9 488.2Z" fill="#48cccf" opacity="0.800"/><path d="M980.0 426.7 L1029.0 402.2 L1041.2 472.0 L997.0 495.4Z" fill="#4af4f6"/><path d="M1014.3 409.6 L1029.0 402.2 L1032.0 419.6Z" fill="#2ce4ee"/><path d="M938.8 455.6L989.1 463.5L1035.6 439.9M953.9 423.3L974.0 491.6M1005.5 414.0L1020.0 483.2" stroke="#00ffff" stroke-width="1.300" fill="none"/><path d="M989.1 463.5L1010.4 411.5M975.4 491.8L991.9 474.8" stroke="#20e0e8" stroke-width="1" fill="none"/><path d="M927.2 419.8 L980.0 426.7 L997.0 495.4 L949.1 487.4ZM980 426.7L1029 402.2L1041.2 472L997 495.4" fill="none" stroke="#00ffff" stroke-width="4" stroke-linejoin="round"/><path d="M1118.0 346.7 L1169.5 353.9 L1170.1 422.2 L1121.9 415.7ZM1137.9 364.0 L1140.3 363.4 L1142.8 364.3 L1144.6 366.3 L1144.9 368.6 L1144.7 370.7 L1146.5 373.8 L1147.5 376.9 L1146.6 378.9 L1145.5 381.6 L1146.8 385.3 L1148.8 389.1 L1151.3 391.8 L1155.1 393.8 L1159.9 397.2 L1163.7 400.1 L1165.7 402.4 L1165.2 404.1 L1162.9 404.1 L1161.4 402.5 L1157.2 400.2 L1152.4 397.2 L1147.6 393.8 L1143.7 390.5 L1141.2 388.4 L1140.3 390.0 L1140.9 391.8 L1137.6 391.7 L1137.0 390.2 L1138.4 388.0 L1137.4 387.1 L1134.1 388.1 L1131.3 389.5 L1131.9 392.3 L1135.0 398.3 L1134.1 399.2 L1128.0 399.7 L1125.6 398.3 L1126.5 397.4 L1128.8 396.7 L1127.7 392.4 L1125.6 388.7 L1126.9 386.8 L1130.6 384.5 L1133.3 382.0 L1135.1 378.7 L1135.0 375.1 L1133.0 373.8 L1130.1 372.7 L1128.5 369.9 L1127.9 367.7 L1125.9 366.3 L1126.8 365.3 L1128.8 366.3 L1130.2 364.5 L1128.0 359.6 L1124.8 354.8 L1121.1 349.0 L1122.8 353.7 L1126.0 358.6 L1129.1 363.1 L1131.6 364.9 L1131.1 363.0 L1133.0 364.0 L1135.6 366.9 L1137.1 368.6 L1137.5 366.8 L1136.8 365.3Z" fill="#c3aa94" fill-rule="evenodd"/><path d="M1137.9 364.0 L1140.3 363.4 L1142.8 364.3 L1144.6 366.3 L1144.9 368.6 L1144.7 370.7 L1146.5 373.8 L1147.5 376.9 L1146.6 378.9 L1145.5 381.6 L1146.8 385.3 L1148.8 389.1 L1151.3 391.8 L1155.1 393.8 L1159.9 397.2 L1163.7 400.1 L1165.7 402.4 L1165.2 404.1 L1162.9 404.1 L1161.4 402.5 L1157.2 400.2 L1152.4 397.2 L1147.6 393.8 L1143.7 390.5 L1141.2 388.4 L1140.3 390.0 L1140.9 391.8 L1137.6 391.7 L1137.0 390.2 L1138.4 388.0 L1137.4 387.1 L1134.1 388.1 L1131.3 389.5 L1131.9 392.3 L1135.0 398.3 L1134.1 399.2 L1128.0 399.7 L1125.6 398.3 L1126.5 397.4 L1128.8 396.7 L1127.7 392.4 L1125.6 388.7 L1126.9 386.8 L1130.6 384.5 L1133.3 382.0 L1135.1 378.7 L1135.0 375.1 L1133.0 373.8 L1130.1 372.7 L1128.5 369.9 L1127.9 367.7 L1125.9 366.3 L1126.8 365.3 L1128.8 366.3 L1130.2 364.5 L1128.0 359.6 L1124.8 354.8 L1121.1 349.0 L1122.8 353.7 L1126.0 358.6 L1129.1 363.1 L1131.6 364.9 L1131.1 363.0 L1133.0 364.0 L1135.6 366.9 L1137.1 368.6 L1137.5 366.8 L1136.8 365.3Z" fill="none" stroke="#ffdbb7" stroke-width="2.200" stroke-linejoin="round"/><path d="M1136.1 358.2 L1135.5 359.6 L1133.9 360.2 L1131.9 360.0 L1130.2 358.8 L1129.5 357.3 L1130.0 355.9 L1131.7 355.2 L1133.7 355.5 L1135.4 356.6ZM1149.7 356.9 L1149.1 358.3 L1147.5 359.0 L1145.5 358.7 L1143.8 357.5 L1143.1 356.0 L1143.7 354.6 L1145.3 353.9 L1147.4 354.2 L1149.1 355.3ZM1161.5 359.5 L1160.9 360.9 L1159.3 361.6 L1157.3 361.3 L1155.6 360.1 L1154.9 358.6 L1155.5 357.2 L1157.2 356.5 L1159.2 356.8 L1160.9 357.9ZM1158.1 373.1 L1157.5 374.5 L1155.9 375.1 L1153.9 374.9 L1152.2 373.8 L1151.6 372.2 L1152.2 370.9 L1153.8 370.2 L1155.8 370.5 L1157.4 371.6ZM1161.8 386.6 L1161.2 387.9 L1159.6 388.6 L1157.6 388.3 L1156.0 387.2 L1155.4 385.8 L1155.9 384.4 L1157.5 383.8 L1159.5 384.1 L1161.1 385.2Z" fill="#ffdbb7"/><path d="M1124.8 408.7 L1126.3 411.3 L1127.6 410.1 L1129.1 412.6 L1130.4 409.1 L1131.6 405.9 L1133.0 405.8 L1133.6 409.6 L1135.2 412.8 L1136.4 409.3 L1138.4 412.6 L1140.2 411.8 L1142.1 413.7 L1144.5 413.7 L1147.2 413.8 L1148.6 411.6 L1149.9 408.8 L1151.3 409.3 L1152.3 412.8 L1153.8 415.3 L1155.6 414.6 L1156.4 408.0 L1157.8 408.1 L1159.3 411.7 L1161.2 416.0 L1162.5 413.8 L1163.9 414.4 L1164.9 417.8 L1165.4 418.9 L1125.0 413.4Z" fill="#ffdbb7" stroke="#ffdbb7" stroke-width="1"/><mask id="pm0" maskUnits="userSpaceOnUse" x="1100" y="330" width="260" height="130"><rect x="1100" y="330" width="260" height="130" fill="#fff"/><path d="M1137.9 364.0 L1140.3 363.4 L1142.8 364.3 L1144.6 366.3 L1144.9 368.6 L1144.7 370.7 L1146.5 373.8 L1147.5 376.9 L1146.6 378.9 L1145.5 381.6 L1146.8 385.3 L1148.8 389.1 L1151.3 391.8 L1155.1 393.8 L1159.9 397.2 L1163.7 400.1 L1165.7 402.4 L1165.2 404.1 L1162.9 404.1 L1161.4 402.5 L1157.2 400.2 L1152.4 397.2 L1147.6 393.8 L1143.7 390.5 L1141.2 388.4 L1140.3 390.0 L1140.9 391.8 L1137.6 391.7 L1137.0 390.2 L1138.4 388.0 L1137.4 387.1 L1134.1 388.1 L1131.3 389.5 L1131.9 392.3 L1135.0 398.3 L1134.1 399.2 L1128.0 399.7 L1125.6 398.3 L1126.5 397.4 L1128.8 396.7 L1127.7 392.4 L1125.6 388.7 L1126.9 386.8 L1130.6 384.5 L1133.3 382.0 L1135.1 378.7 L1135.0 375.1 L1133.0 373.8 L1130.1 372.7 L1128.5 369.9 L1127.9 367.7 L1125.9 366.3 L1126.8 365.3 L1128.8 366.3 L1130.2 364.5 L1128.0 359.6 L1124.8 354.8 L1121.1 349.0 L1122.8 353.7 L1126.0 358.6 L1129.1 363.1 L1131.6 364.9 L1131.1 363.0 L1133.0 364.0 L1135.6 366.9 L1137.1 368.6 L1137.5 366.8 L1136.8 365.3Z" fill="#000"/></mask><path mask="url(#pm0)" d="M1142.3 350.1L1144.6 418.8M1120.0 382.3L1169.8 389.2" stroke="#ffdbb7" stroke-width="0.900" fill="none" opacity="0.900"/><circle cx="1132.8" cy="357.7" r="0.900" fill="#c3aa94"/><circle cx="1146.4" cy="356.4" r="0.900" fill="#c3aa94"/><circle cx="1158.2" cy="359.0" r="0.900" fill="#c3aa94"/><circle cx="1154.8" cy="372.7" r="0.900" fill="#c3aa94"/><circle cx="1158.6" cy="386.2" r="0.900" fill="#c3aa94"/><path d="M1118.9 347.5 L1168.6 354.4 L1169.3 421.5 L1122.7 415.2Z" fill="none" stroke="#ffdbb7" stroke-width="2.600" stroke-linejoin="round"/><path d="M1118.9 347.5 L1168.6 354.4 L1169.3 421.5 L1122.7 415.2Z" fill="none" stroke="#ffdbb7" stroke-width="4.400" stroke-dasharray="4.500 3" stroke-linecap="round"/><path d="M1172.7 354.5 L1225.4 361.7 L1220.9 430.7 L1173.4 423.5ZM1187.1 368.5 L1191.1 367.7 L1195.1 368.5 L1198.5 370.8 L1199.8 373.3 L1197.9 374.9 L1194.4 375.9 L1192.9 376.9 L1195.8 379.9 L1200.6 384.2 L1204.0 386.9 L1207.0 385.1 L1209.5 382.5 L1211.1 381.7 L1212.5 383.0 L1210.4 384.9 L1207.9 387.1 L1204.9 388.9 L1203.4 390.1 L1206.2 391.9 L1205.2 393.2 L1202.3 393.5 L1202.7 395.7 L1204.5 398.8 L1205.3 401.8 L1204.7 405.8 L1204.1 409.9 L1203.5 412.8 L1197.9 412.0 L1197.8 407.6 L1197.2 403.3 L1194.7 405.7 L1194.0 409.1 L1193.7 411.7 L1187.2 410.7 L1186.9 406.6 L1188.2 401.3 L1189.7 396.7 L1189.8 392.4 L1187.9 388.6 L1185.5 383.9 L1183.1 378.4 L1182.2 374.6 L1184.1 371.1Z" fill="#c3aa94" fill-rule="evenodd"/><path d="M1187.1 368.5 L1191.1 367.7 L1195.1 368.5 L1198.5 370.8 L1199.8 373.3 L1197.9 374.9 L1194.4 375.9 L1192.9 376.9 L1195.8 379.9 L1200.6 384.2 L1204.0 386.9 L1207.0 385.1 L1209.5 382.5 L1211.1 381.7 L1212.5 383.0 L1210.4 384.9 L1207.9 387.1 L1204.9 388.9 L1203.4 390.1 L1206.2 391.9 L1205.2 393.2 L1202.3 393.5 L1202.7 395.7 L1204.5 398.8 L1205.3 401.8 L1204.7 405.8 L1204.1 409.9 L1203.5 412.8 L1197.9 412.0 L1197.8 407.6 L1197.2 403.3 L1194.7 405.7 L1194.0 409.1 L1193.7 411.7 L1187.2 410.7 L1186.9 406.6 L1188.2 401.3 L1189.7 396.7 L1189.8 392.4 L1187.9 388.6 L1185.5 383.9 L1183.1 378.4 L1182.2 374.6 L1184.1 371.1Z" fill="none" stroke="#ffdbb7" stroke-width="2.200" stroke-linejoin="round"/><path d="M1184.5 365.8 L1183.9 367.3 L1182.2 368.0 L1180.2 367.7 L1178.5 366.5 L1177.9 364.9 L1178.5 363.5 L1180.2 362.8 L1182.2 363.1 L1183.9 364.2ZM1198.6 364.1 L1197.9 365.5 L1196.2 366.2 L1194.1 365.9 L1192.5 364.8 L1191.8 363.1 L1192.5 361.7 L1194.2 361.0 L1196.3 361.3 L1198.0 362.5ZM1216.1 367.5 L1215.4 368.9 L1213.7 369.6 L1211.6 369.4 L1210.0 368.2 L1209.4 366.6 L1210.1 365.1 L1211.8 364.4 L1213.9 364.7 L1215.6 365.9ZM1209.0 376.9 L1208.3 378.2 L1206.6 378.9 L1204.5 378.6 L1202.9 377.5 L1202.3 375.9 L1203.0 374.5 L1204.7 373.8 L1206.7 374.1 L1208.4 375.3ZM1183.9 391.0 L1183.3 392.3 L1181.7 393.0 L1179.7 392.7 L1178.1 391.6 L1177.5 390.1 L1178.1 388.8 L1179.7 388.1 L1181.7 388.4 L1183.3 389.5ZM1215.7 395.6 L1215.0 396.9 L1213.3 397.5 L1211.3 397.3 L1209.7 396.2 L1209.2 394.7 L1209.8 393.4 L1211.5 392.7 L1213.5 393.0 L1215.1 394.1Z" fill="#ffdbb7"/><path d="M1176.5 416.8 L1177.9 419.3 L1179.3 418.2 L1180.6 420.7 L1182.0 417.3 L1183.4 414.2 L1184.8 414.1 L1185.2 417.8 L1186.6 420.9 L1188.0 417.5 L1189.8 420.7 L1191.7 420.0 L1193.5 421.9 L1195.8 422.0 L1198.5 422.1 L1200.0 420.0 L1201.5 417.2 L1202.9 417.8 L1203.7 421.2 L1205.0 423.7 L1206.8 423.0 L1208.1 416.5 L1209.5 416.7 L1210.7 420.3 L1212.4 424.5 L1213.9 422.4 L1215.3 422.9 L1216.0 426.3 L1216.4 427.4 L1176.6 421.3Z" fill="#ffdbb7" stroke="#ffdbb7" stroke-width="1"/><mask id="pm1" maskUnits="userSpaceOnUse" x="1100" y="330" width="260" height="130"><rect x="1100" y="330" width="260" height="130" fill="#fff"/><path d="M1187.1 368.5 L1191.1 367.7 L1195.1 368.5 L1198.5 370.8 L1199.8 373.3 L1197.9 374.9 L1194.4 375.9 L1192.9 376.9 L1195.8 379.9 L1200.6 384.2 L1204.0 386.9 L1207.0 385.1 L1209.5 382.5 L1211.1 381.7 L1212.5 383.0 L1210.4 384.9 L1207.9 387.1 L1204.9 388.9 L1203.4 390.1 L1206.2 391.9 L1205.2 393.2 L1202.3 393.5 L1202.7 395.7 L1204.5 398.8 L1205.3 401.8 L1204.7 405.8 L1204.1 409.9 L1203.5 412.8 L1197.9 412.0 L1197.8 407.6 L1197.2 403.3 L1194.7 405.7 L1194.0 409.1 L1193.7 411.7 L1187.2 410.7 L1186.9 406.6 L1188.2 401.3 L1189.7 396.7 L1189.8 392.4 L1187.9 388.6 L1185.5 383.9 L1183.1 378.4 L1182.2 374.6 L1184.1 371.1Z" fill="#000"/></mask><path mask="url(#pm1)" d="M1197.3 357.9L1195.6 426.9M1173.1 390.8L1223.0 398.0" stroke="#ffdbb7" stroke-width="0.900" fill="none" opacity="0.900"/><circle cx="1181.2" cy="365.4" r="0.900" fill="#c3aa94"/><circle cx="1195.2" cy="363.6" r="0.900" fill="#c3aa94"/><circle cx="1212.8" cy="367.0" r="0.900" fill="#c3aa94"/><circle cx="1205.6" cy="376.4" r="0.900" fill="#c3aa94"/><circle cx="1180.7" cy="390.6" r="0.900" fill="#c3aa94"/><circle cx="1212.4" cy="395.1" r="0.900" fill="#c3aa94"/><path d="M1173.6 355.3 L1224.5 362.3 L1220.1 430.0 L1174.2 423.1Z" fill="none" stroke="#ffdbb7" stroke-width="2.600" stroke-linejoin="round"/><path d="M1173.6 355.3 L1224.5 362.3 L1220.1 430.0 L1174.2 423.1Z" fill="none" stroke="#ffdbb7" stroke-width="4.400" stroke-dasharray="4.500 3" stroke-linecap="round"/><path d="M1230.7 361.7 L1284.0 369.5 L1275.6 437.9 L1226.7 430.7ZM1232.2 392.8 L1235.4 392.2 L1236.0 390.1 L1238.6 388.6 L1241.7 388.0 L1243.1 389.6 L1247.1 389.5 L1247.8 387.4 L1247.2 385.1 L1249.1 383.5 L1252.7 383.3 L1255.6 384.4 L1257.4 386.9 L1257.1 389.9 L1258.5 391.2 L1260.8 393.7 L1262.5 396.9 L1263.8 399.2 L1264.6 400.8 L1263.4 402.8 L1262.7 404.8 L1265.0 406.6 L1267.7 409.1 L1268.4 412.0 L1269.0 415.6 L1267.7 418.1 L1265.6 419.2 L1262.7 418.8 L1261.7 419.3 L1261.1 420.6 L1259.7 420.4 L1259.4 418.3 L1260.6 415.7 L1261.4 413.1 L1260.1 411.5 L1258.0 411.9 L1258.7 414.8 L1258.1 416.7 L1256.0 417.8 L1254.0 418.2 L1236.8 415.7 L1234.9 414.0 L1233.1 411.7 L1231.1 410.7ZM1264.1 396.4 L1269.2 395.3 L1275.7 395.5 L1275.5 397.0 L1270.0 397.2 L1264.5 396.8ZM1264.6 400.8 L1273.5 401.4 L1274.3 402.9 L1265.4 402.7ZM1271.2 403.9 L1274.2 404.3 L1272.3 420.9 L1269.4 420.5 L1270.9 415.8 L1269.9 411.5 L1271.3 407.5Z" fill="#c3aa94" fill-rule="evenodd"/><path d="M1232.2 392.8 L1235.4 392.2 L1236.0 390.1 L1238.6 388.6 L1241.7 388.0 L1243.1 389.6 L1247.1 389.5 L1247.8 387.4 L1247.2 385.1 L1249.1 383.5 L1252.7 383.3 L1255.6 384.4 L1257.4 386.9 L1257.1 389.9 L1258.5 391.2 L1260.8 393.7 L1262.5 396.9 L1263.8 399.2 L1264.6 400.8 L1263.4 402.8 L1262.7 404.8 L1265.0 406.6 L1267.7 409.1 L1268.4 412.0 L1269.0 415.6 L1267.7 418.1 L1265.6 419.2 L1262.7 418.8 L1261.7 419.3 L1261.1 420.6 L1259.7 420.4 L1259.4 418.3 L1260.6 415.7 L1261.4 413.1 L1260.1 411.5 L1258.0 411.9 L1258.7 414.8 L1258.1 416.7 L1256.0 417.8 L1254.0 418.2 L1236.8 415.7 L1234.9 414.0 L1233.1 411.7 L1231.1 410.7ZM1264.1 396.4 L1269.2 395.3 L1275.7 395.5 L1275.5 397.0 L1270.0 397.2 L1264.5 396.8ZM1264.6 400.8 L1273.5 401.4 L1274.3 402.9 L1265.4 402.7ZM1271.2 403.9 L1274.2 404.3 L1272.3 420.9 L1269.4 420.5 L1270.9 415.8 L1269.9 411.5 L1271.3 407.5Z" fill="none" stroke="#ffdbb7" stroke-width="2.200" stroke-linejoin="round"/><path d="M1242.9 370.2 L1242.1 371.6 L1240.3 372.3 L1238.2 372.0 L1236.6 370.8 L1236.0 369.2 L1236.8 367.8 L1238.6 367.1 L1240.7 367.4 L1242.3 368.6ZM1275.9 374.8 L1275.1 376.2 L1273.3 376.8 L1271.2 376.5 L1269.6 375.3 L1269.1 373.8 L1269.9 372.4 L1271.7 371.7 L1273.8 372.0 L1275.4 373.2ZM1258.6 378.1 L1257.8 379.5 L1256.0 380.1 L1254.0 379.8 L1252.3 378.7 L1251.8 377.1 L1252.6 375.7 L1254.4 375.1 L1256.5 375.4 L1258.1 376.5ZM1246.1 381.8 L1245.3 383.1 L1243.6 383.8 L1241.5 383.5 L1239.9 382.3 L1239.3 380.8 L1240.1 379.4 L1241.8 378.8 L1243.9 379.1 L1245.5 380.2ZM1269.6 390.6 L1268.8 391.9 L1267.0 392.5 L1264.9 392.2 L1263.4 391.1 L1262.9 389.6 L1263.6 388.2 L1265.4 387.6 L1267.5 387.9 L1269.1 389.0Z" fill="#ffdbb7"/><path d="M1230.4 423.9 L1231.7 426.4 L1233.2 425.3 L1234.5 427.8 L1236.2 424.4 L1237.8 421.3 L1239.3 421.1 L1239.5 424.9 L1240.7 428.1 L1242.4 424.6 L1244.0 427.9 L1246.0 427.2 L1247.8 429.1 L1250.1 429.1 L1253.0 429.2 L1254.7 427.1 L1256.4 424.3 L1257.8 424.9 L1258.4 428.3 L1259.6 430.8 L1261.6 430.1 L1263.2 423.6 L1264.6 423.9 L1265.7 427.4 L1267.2 431.6 L1268.9 429.5 L1270.2 430.1 L1270.8 433.5 L1271.2 434.5 L1230.2 428.5Z" fill="#ffdbb7" stroke="#ffdbb7" stroke-width="1"/><mask id="pm2" maskUnits="userSpaceOnUse" x="1100" y="330" width="260" height="130"><rect x="1100" y="330" width="260" height="130" fill="#fff"/><path d="M1232.2 392.8 L1235.4 392.2 L1236.0 390.1 L1238.6 388.6 L1241.7 388.0 L1243.1 389.6 L1247.1 389.5 L1247.8 387.4 L1247.2 385.1 L1249.1 383.5 L1252.7 383.3 L1255.6 384.4 L1257.4 386.9 L1257.1 389.9 L1258.5 391.2 L1260.8 393.7 L1262.5 396.9 L1263.8 399.2 L1264.6 400.8 L1263.4 402.8 L1262.7 404.8 L1265.0 406.6 L1267.7 409.1 L1268.4 412.0 L1269.0 415.6 L1267.7 418.1 L1265.6 419.2 L1262.7 418.8 L1261.7 419.3 L1261.1 420.6 L1259.7 420.4 L1259.4 418.3 L1260.6 415.7 L1261.4 413.1 L1260.1 411.5 L1258.0 411.9 L1258.7 414.8 L1258.1 416.7 L1256.0 417.8 L1254.0 418.2 L1236.8 415.7 L1234.9 414.0 L1233.1 411.7 L1231.1 410.7ZM1264.1 396.4 L1269.2 395.3 L1275.7 395.5 L1275.5 397.0 L1270.0 397.2 L1264.5 396.8ZM1264.6 400.8 L1273.5 401.4 L1274.3 402.9 L1265.4 402.7ZM1271.2 403.9 L1274.2 404.3 L1272.3 420.9 L1269.4 420.5 L1270.9 415.8 L1269.9 411.5 L1271.3 407.5Z" fill="#000"/></mask><path mask="url(#pm2)" d="M1255.7 365.4L1249.7 434.1M1228.6 397.7L1279.6 405.2" stroke="#ffdbb7" stroke-width="0.900" fill="none" opacity="0.900"/><circle cx="1239.4" cy="369.7" r="0.900" fill="#c3aa94"/><circle cx="1272.5" cy="374.3" r="0.900" fill="#c3aa94"/><circle cx="1255.2" cy="377.6" r="0.900" fill="#c3aa94"/><circle cx="1242.7" cy="381.3" r="0.900" fill="#c3aa94"/><circle cx="1266.2" cy="390.1" r="0.900" fill="#c3aa94"/><path d="M1231.6 362.5 L1283.0 370.0 L1274.8 437.2 L1227.6 430.2Z" fill="none" stroke="#ffdbb7" stroke-width="2.600" stroke-linejoin="round"/><path d="M1231.6 362.5 L1283.0 370.0 L1274.8 437.2 L1227.6 430.2Z" fill="none" stroke="#ffdbb7" stroke-width="4.400" stroke-dasharray="4.500 3" stroke-linecap="round"/><path d="M1289.9 369.5 L1345.9 377.3 L1332.9 447.0 L1282.1 437.9ZM1319.0 388.0 L1321.6 385.7 L1326.0 385.6 L1329.5 387.3 L1330.7 390.1 L1329.7 392.7 L1332.0 395.3 L1332.4 399.2 L1331.2 402.8 L1328.1 405.3 L1325.6 407.2 L1324.9 411.5 L1324.6 416.5 L1325.3 421.7 L1326.0 426.7 L1326.2 428.9 L1319.1 427.7 L1318.1 424.0 L1317.8 419.7 L1315.9 415.1 L1313.9 411.2 L1309.0 412.5 L1303.5 414.5 L1299.1 416.6 L1295.8 418.9 L1293.5 421.3 L1290.5 421.1 L1289.2 419.2 L1290.0 417.2 L1293.3 414.9 L1296.7 412.0 L1300.2 408.9 L1303.7 405.9 L1307.1 403.5 L1310.5 401.8 L1309.3 399.4 L1307.0 397.2 L1303.1 395.1 L1302.2 393.5 L1300.9 391.4 L1300.1 389.4 L1301.8 388.5 L1304.7 390.5 L1306.0 392.9 L1308.3 395.2 L1311.8 393.1 L1315.2 391.7 L1319.1 391.1Z" fill="#c3aa94" fill-rule="evenodd"/><path d="M1319.0 388.0 L1321.6 385.7 L1326.0 385.6 L1329.5 387.3 L1330.7 390.1 L1329.7 392.7 L1332.0 395.3 L1332.4 399.2 L1331.2 402.8 L1328.1 405.3 L1325.6 407.2 L1324.9 411.5 L1324.6 416.5 L1325.3 421.7 L1326.0 426.7 L1326.2 428.9 L1319.1 427.7 L1318.1 424.0 L1317.8 419.7 L1315.9 415.1 L1313.9 411.2 L1309.0 412.5 L1303.5 414.5 L1299.1 416.6 L1295.8 418.9 L1293.5 421.3 L1290.5 421.1 L1289.2 419.2 L1290.0 417.2 L1293.3 414.9 L1296.7 412.0 L1300.2 408.9 L1303.7 405.9 L1307.1 403.5 L1310.5 401.8 L1309.3 399.4 L1307.0 397.2 L1303.1 395.1 L1302.2 393.5 L1300.9 391.4 L1300.1 389.4 L1301.8 388.5 L1304.7 390.5 L1306.0 392.9 L1308.3 395.2 L1311.8 393.1 L1315.2 391.7 L1319.1 391.1Z" fill="none" stroke="#ffdbb7" stroke-width="2.200" stroke-linejoin="round"/><path d="M1300.9 378.1 L1300.1 379.5 L1298.2 380.1 L1296.0 379.8 L1294.4 378.7 L1293.9 377.1 L1294.8 375.7 L1296.6 375.0 L1298.8 375.3 L1300.5 376.5ZM1339.2 384.7 L1338.3 386.2 L1336.3 386.8 L1334.0 386.5 L1332.4 385.3 L1331.9 383.7 L1332.9 382.3 L1334.9 381.6 L1337.1 381.9 L1338.8 383.1ZM1316.1 384.9 L1315.2 386.3 L1313.3 387.0 L1311.1 386.6 L1309.5 385.5 L1309.0 383.9 L1309.9 382.5 L1311.8 381.8 L1314.0 382.1 L1315.6 383.3ZM1299.9 400.3 L1299.1 401.6 L1297.3 402.3 L1295.2 401.9 L1293.6 400.8 L1293.1 399.3 L1293.9 397.9 L1295.7 397.3 L1297.9 397.7 L1299.5 398.8Z" fill="#ffdbb7"/><path d="M1286.3 431.3 L1287.4 433.8 L1289.1 432.8 L1290.2 435.3 L1292.1 432.0 L1294.0 428.9 L1295.5 428.8 L1295.5 432.6 L1296.6 435.8 L1298.5 432.4 L1300.1 435.7 L1302.2 435.1 L1303.9 437.1 L1306.4 437.2 L1309.4 437.4 L1311.2 435.3 L1313.2 432.6 L1314.6 433.2 L1315.1 436.7 L1316.2 439.2 L1318.3 438.6 L1320.4 432.1 L1322.0 432.3 L1322.9 436.0 L1324.2 440.3 L1326.1 438.2 L1327.6 438.8 L1328.0 442.3 L1328.3 443.4 L1285.7 435.9Z" fill="#ffdbb7" stroke="#ffdbb7" stroke-width="1"/><mask id="pm3" maskUnits="userSpaceOnUse" x="1100" y="330" width="260" height="130"><rect x="1100" y="330" width="260" height="130" fill="#fff"/><path d="M1319.0 388.0 L1321.6 385.7 L1326.0 385.6 L1329.5 387.3 L1330.7 390.1 L1329.7 392.7 L1332.0 395.3 L1332.4 399.2 L1331.2 402.8 L1328.1 405.3 L1325.6 407.2 L1324.9 411.5 L1324.6 416.5 L1325.3 421.7 L1326.0 426.7 L1326.2 428.9 L1319.1 427.7 L1318.1 424.0 L1317.8 419.7 L1315.9 415.1 L1313.9 411.2 L1309.0 412.5 L1303.5 414.5 L1299.1 416.6 L1295.8 418.9 L1293.5 421.3 L1290.5 421.1 L1289.2 419.2 L1290.0 417.2 L1293.3 414.9 L1296.7 412.0 L1300.2 408.9 L1303.7 405.9 L1307.1 403.5 L1310.5 401.8 L1309.3 399.4 L1307.0 397.2 L1303.1 395.1 L1302.2 393.5 L1300.9 391.4 L1300.1 389.4 L1301.8 388.5 L1304.7 390.5 L1306.0 392.9 L1308.3 395.2 L1311.8 393.1 L1315.2 391.7 L1319.1 391.1Z" fill="#000"/></mask><path mask="url(#pm3)" d="M1315.8 373.1L1305.6 442.1M1285.8 405.2L1339.1 413.8" stroke="#ffdbb7" stroke-width="0.900" fill="none" opacity="0.900"/><circle cx="1297.4" cy="377.6" r="0.900" fill="#c3aa94"/><circle cx="1335.6" cy="384.2" r="0.900" fill="#c3aa94"/><circle cx="1312.5" cy="384.4" r="0.900" fill="#c3aa94"/><circle cx="1296.5" cy="399.8" r="0.900" fill="#c3aa94"/><path d="M1290.7 370.3 L1344.8 377.9 L1332.1 446.3 L1283.0 437.5Z" fill="none" stroke="#ffdbb7" stroke-width="2.600" stroke-linejoin="round"/><path d="M1290.7 370.3 L1344.8 377.9 L1332.1 446.3 L1283.0 437.5Z" fill="none" stroke="#ffdbb7" stroke-width="4.400" stroke-dasharray="4.500 3" stroke-linecap="round"/><path d="M1108.5 438.7 L1340.3 472.7 L1337.5 495.7 L1102.2 458.3ZM1116.6 445.8 L1126.3 447.1 L1126.7 446.0 L1135.6 447.2 L1135.2 448.3 L1143.7 449.5 L1144.0 448.3 L1153.5 449.5 L1153.2 450.7 L1161.8 451.9 L1161.8 451.9 L1160.1 459.0 L1161.6 459.2 L1159.8 466.5 L1158.3 466.3 L1156.5 473.8 L1158.0 474.0 L1156.1 481.8 L1154.6 481.5 L1152.7 489.5 L1154.2 489.7 L1152.3 497.9 L1150.7 497.6 L1148.6 506.0 L1150.3 506.3 L1148.2 515.0 L1146.5 514.7 L1144.4 523.6 L1144.4 523.6 L1093.5 515.4 L1093.5 515.4 L1096.4 506.8 L1094.8 506.5 L1097.6 498.1 L1099.1 498.4 L1101.8 490.2 L1100.3 490.0 L1102.9 482.1 L1104.5 482.3 L1107.0 474.6 L1105.5 474.4 L1108.0 466.9 L1109.5 467.1 L1111.9 459.8 L1110.5 459.6 L1112.8 452.5 L1114.3 452.7 L1116.6 445.8ZM1117.9 501.2 L1119.9 502.5 L1122.2 502.3 L1124.4 500.6 L1125.2 498.3 L1125.7 496.0 L1128.0 493.2 L1129.7 490.3 L1129.5 487.9 L1129.2 484.8 L1131.4 481.3 L1134.1 478.0 L1136.9 475.8 L1140.7 474.9 L1145.7 472.7 L1149.7 470.7 L1151.9 468.8 L1151.9 467.1 L1149.9 466.4 L1148.3 467.6 L1144.1 468.8 L1139.2 470.7 L1134.2 472.9 L1130.1 475.2 L1127.4 476.7 L1127.1 474.8 L1128.1 473.1 L1125.2 472.3 L1124.4 473.6 L1124.9 476.3 L1123.9 476.9 L1121.3 475.0 L1119.4 472.9 L1120.7 470.2 L1124.8 465.0 L1124.3 463.9 L1119.4 461.8 L1117.1 462.5 L1117.5 463.7 L1119.3 465.0 L1117.1 469.0 L1114.4 472.2 L1115.0 474.5 L1117.4 477.8 L1119.1 481.0 L1119.7 484.9 L1118.5 488.6 L1116.5 489.5 L1113.7 489.8 L1111.6 492.2 L1110.4 494.4 L1108.4 495.3 L1108.9 496.6 L1110.8 496.1 L1111.5 498.4 L1108.2 502.9 L1104.1 507.2 L1099.2 512.3 L1102.1 507.7 L1106.2 503.4 L1110.2 499.6 L1112.8 498.4 L1111.8 500.2 L1113.8 499.7 L1116.8 497.4 L1118.6 496.1 L1118.4 498.0 L1117.3 499.5ZM1114.7 506.8 L1114.8 506.1 L1113.9 505.7 L1113.7 505.3 L1113.9 504.3 L1113.3 503.9 L1112.3 504.5 L1111.8 504.4 L1111.0 503.9 L1110.3 504.2 L1110.2 505.1 L1109.9 505.6 L1108.8 505.9 L1108.7 506.6 L1109.6 507.0 L1109.8 507.5 L1109.6 508.4 L1110.2 508.8 L1111.2 508.3 L1111.8 508.3 L1112.6 508.9 L1113.3 508.6 L1113.3 507.6 L1113.7 507.2ZM1126.2 512.2 L1126.3 511.5 L1125.4 511.1 L1125.1 510.6 L1125.4 509.7 L1124.7 509.3 L1123.8 509.8 L1123.2 509.8 L1122.4 509.2 L1121.6 509.5 L1121.6 510.5 L1121.3 510.9 L1120.2 511.3 L1120.1 512.0 L1121.1 512.4 L1121.3 512.9 L1121.0 513.9 L1121.7 514.3 L1122.7 513.7 L1123.2 513.7 L1124.1 514.3 L1124.8 514.0 L1124.8 513.0 L1125.2 512.6ZM1137.3 512.9 L1137.4 512.2 L1136.4 511.7 L1136.2 511.3 L1136.4 510.3 L1135.7 509.9 L1134.8 510.5 L1134.2 510.5 L1133.4 509.8 L1132.7 510.2 L1132.7 511.1 L1132.3 511.6 L1131.3 511.9 L1131.2 512.7 L1132.1 513.1 L1132.4 513.6 L1132.1 514.5 L1132.8 514.9 L1133.8 514.4 L1134.3 514.4 L1135.2 515.0 L1135.9 514.7 L1135.9 513.7 L1136.3 513.3ZM1137.9 497.2 L1138.0 496.5 L1137.0 496.1 L1136.8 495.7 L1137.0 494.7 L1136.4 494.4 L1135.5 494.9 L1134.9 494.9 L1134.1 494.3 L1133.4 494.6 L1133.4 495.5 L1133.0 496.0 L1132.0 496.3 L1131.9 497.0 L1132.9 497.4 L1133.1 497.8 L1132.9 498.7 L1133.5 499.1 L1134.5 498.6 L1135.0 498.6 L1135.8 499.2 L1136.6 498.9 L1136.5 497.9 L1136.9 497.5ZM1144.6 484.0 L1144.7 483.4 L1143.8 483.0 L1143.5 482.6 L1143.7 481.7 L1143.1 481.4 L1142.2 481.9 L1141.6 481.8 L1140.8 481.3 L1140.1 481.6 L1140.2 482.5 L1139.8 482.9 L1138.8 483.2 L1138.8 483.8 L1139.7 484.2 L1139.9 484.6 L1139.7 485.5 L1140.3 485.9 L1141.3 485.4 L1141.8 485.4 L1142.6 486.0 L1143.3 485.7 L1143.3 484.8 L1143.6 484.4ZM1119.3 449.1 L1157.4 454.2 L1156.8 455.4 L1155.8 456.6 L1155.4 455.4 L1155.0 455.2 L1153.6 458.1 L1153.6 455.1 L1153.3 454.9 L1152.1 456.7 L1151.8 454.9 L1151.5 454.7 L1149.3 460.5 L1150.1 454.6 L1149.8 454.4 L1148.4 456.8 L1148.3 454.4 L1148.0 454.2 L1146.2 458.3 L1146.6 454.2 L1146.3 454.0 L1145.1 455.7 L1144.8 453.9 L1144.5 453.7 L1143.0 456.6 L1143.1 453.7 L1142.8 453.5 L1141.7 454.7 L1141.4 453.5 L1141.0 453.3 L1139.3 456.7 L1139.6 453.2 L1139.3 453.0 L1138.1 454.8 L1137.9 453.0 L1137.6 452.8 L1135.5 457.4 L1136.1 452.8 L1135.8 452.6 L1133.1 459.5 L1134.4 452.5 L1134.1 452.3 L1132.5 455.2 L1132.7 452.3 L1132.4 452.1 L1131.1 453.8 L1130.9 452.1 L1130.6 451.9 L1129.2 454.1 L1129.2 451.8 L1128.9 451.6 L1127.9 452.8 L1127.5 451.6 L1127.2 451.4 L1125.2 455.4 L1125.8 451.4 L1125.5 451.2 L1124.2 452.9 L1124.1 451.1 L1123.8 450.9 L1122.1 453.8 L1122.3 450.9 L1122.0 450.7 L1121.0 451.8 L1120.6 450.7 L1120.3 450.5 L1119.1 452.2 L1118.9 450.4 L1118.9 450.3ZM1168.7 453.0 L1178.6 454.4 L1178.9 453.2 L1188.0 454.5 L1187.7 455.7 L1196.4 457.0 L1196.6 455.7 L1206.2 457.1 L1206.0 458.3 L1214.7 459.6 L1214.7 459.6 L1213.3 467.0 L1214.8 467.2 L1213.4 474.8 L1211.9 474.6 L1210.4 482.4 L1211.9 482.6 L1210.5 490.6 L1208.9 490.4 L1207.4 498.5 L1209.0 498.8 L1207.4 507.1 L1205.8 506.9 L1204.2 515.5 L1205.8 515.7 L1204.2 524.5 L1202.6 524.2 L1200.9 533.2 L1200.9 533.2 L1150.0 525.0 L1150.0 525.0 L1152.3 516.2 L1150.7 516.0 L1152.9 507.4 L1154.5 507.7 L1156.7 499.3 L1155.1 499.1 L1157.3 490.9 L1158.8 491.1 L1160.9 483.2 L1159.3 482.9 L1161.4 475.2 L1162.9 475.4 L1164.9 467.8 L1163.4 467.5 L1165.3 460.1 L1166.8 460.3 L1168.7 453.0ZM1168.3 513.0 L1171.5 515.0 L1175.1 515.3 L1178.6 513.8 L1180.3 511.6 L1179.2 509.4 L1176.5 507.3 L1175.4 506.0 L1178.7 503.6 L1183.9 500.5 L1187.4 498.6 L1189.6 501.3 L1191.1 504.8 L1192.2 506.1 L1193.8 505.2 L1192.5 502.6 L1190.9 499.5 L1188.7 496.8 L1187.8 495.1 L1190.7 494.0 L1190.1 492.4 L1187.7 491.2 L1188.6 489.1 L1191.0 486.4 L1192.5 483.5 L1193.0 479.1 L1193.5 474.7 L1193.7 471.5 L1188.7 470.7 L1187.5 475.3 L1185.9 479.6 L1184.4 476.4 L1184.6 472.7 L1185.0 469.8 L1179.2 469.0 L1178.0 473.2 L1177.7 479.1 L1177.8 484.4 L1176.7 488.8 L1174.1 492.3 L1170.9 496.5 L1167.4 501.5 L1165.6 505.2 L1166.4 509.4ZM1165.4 515.0 L1165.4 514.3 L1164.5 513.9 L1164.2 513.4 L1164.4 512.5 L1163.8 512.1 L1162.9 512.6 L1162.3 512.6 L1161.5 512.0 L1160.8 512.3 L1160.8 513.3 L1160.5 513.7 L1159.4 514.1 L1159.4 514.8 L1160.3 515.2 L1160.5 515.7 L1160.3 516.7 L1161.0 517.0 L1161.9 516.5 L1162.5 516.5 L1163.3 517.1 L1164.0 516.8 L1164.0 515.8 L1164.3 515.4ZM1176.9 520.9 L1177.0 520.2 L1176.0 519.7 L1175.8 519.3 L1176.0 518.3 L1175.3 517.9 L1174.4 518.5 L1173.8 518.4 L1173.0 517.8 L1172.2 518.2 L1172.3 519.1 L1172.0 519.6 L1170.9 519.9 L1170.9 520.7 L1171.8 521.1 L1172.1 521.6 L1171.9 522.6 L1172.5 522.9 L1173.5 522.4 L1174.1 522.4 L1174.9 523.0 L1175.6 522.7 L1175.6 521.7 L1175.9 521.3ZM1192.9 522.3 L1192.9 521.6 L1192.0 521.2 L1191.7 520.7 L1191.9 519.7 L1191.2 519.3 L1190.3 519.9 L1189.7 519.9 L1188.8 519.3 L1188.1 519.6 L1188.2 520.6 L1187.9 521.0 L1186.8 521.4 L1186.8 522.1 L1187.8 522.6 L1188.0 523.0 L1187.9 524.0 L1188.5 524.4 L1189.5 523.8 L1190.0 523.9 L1190.9 524.5 L1191.6 524.2 L1191.6 523.2 L1191.9 522.7ZM1189.1 510.5 L1189.2 509.8 L1188.2 509.4 L1188.0 509.0 L1188.1 508.0 L1187.5 507.6 L1186.6 508.2 L1186.0 508.1 L1185.2 507.6 L1184.5 507.9 L1184.5 508.8 L1184.2 509.3 L1183.2 509.6 L1183.1 510.3 L1184.1 510.7 L1184.4 511.2 L1184.2 512.1 L1184.8 512.5 L1185.8 512.0 L1186.3 512.0 L1187.2 512.6 L1187.9 512.3 L1187.8 511.3 L1188.1 510.9ZM1171.3 488.6 L1171.4 487.9 L1170.5 487.5 L1170.2 487.1 L1170.4 486.2 L1169.8 485.9 L1168.9 486.4 L1168.4 486.4 L1167.6 485.8 L1166.9 486.1 L1166.9 487.0 L1166.6 487.4 L1165.6 487.7 L1165.5 488.4 L1166.4 488.8 L1166.7 489.2 L1166.5 490.1 L1167.1 490.5 L1168.0 490.0 L1168.6 490.0 L1169.4 490.5 L1170.1 490.2 L1170.0 489.3 L1170.3 488.9ZM1199.7 492.9 L1199.7 492.2 L1198.8 491.8 L1198.5 491.4 L1198.7 490.5 L1198.1 490.1 L1197.2 490.6 L1196.6 490.6 L1195.8 490.1 L1195.1 490.4 L1195.2 491.3 L1194.9 491.7 L1193.9 492.0 L1193.9 492.7 L1194.8 493.1 L1195.1 493.5 L1194.9 494.4 L1195.6 494.8 L1196.4 494.3 L1197.0 494.3 L1197.8 494.9 L1198.5 494.6 L1198.4 493.6 L1198.7 493.2ZM1171.6 456.5 L1210.4 462.0 L1209.8 463.2 L1208.9 464.4 L1208.4 463.2 L1208.1 463.0 L1206.7 466.0 L1206.6 462.9 L1206.3 462.7 L1205.2 464.5 L1204.8 462.7 L1204.5 462.5 L1202.5 468.6 L1203.1 462.4 L1202.7 462.2 L1201.5 464.6 L1201.3 462.2 L1201.0 462.0 L1199.3 466.2 L1199.5 461.9 L1199.2 461.7 L1198.1 463.5 L1197.7 461.7 L1197.4 461.5 L1196.0 464.5 L1196.0 461.4 L1195.6 461.2 L1194.6 462.4 L1194.2 461.2 L1193.9 461.0 L1192.3 464.6 L1192.4 460.9 L1192.1 460.7 L1191.0 462.5 L1190.7 460.7 L1190.3 460.5 L1188.5 465.3 L1188.9 460.4 L1188.6 460.2 L1186.2 467.5 L1187.1 460.2 L1186.8 460.0 L1185.4 463.0 L1185.4 459.9 L1185.1 459.7 L1183.9 461.5 L1183.6 459.6 L1183.3 459.4 L1182.0 461.8 L1181.9 459.4 L1181.5 459.2 L1180.5 460.4 L1180.1 459.1 L1179.8 458.9 L1178.0 463.1 L1178.3 458.9 L1178.0 458.7 L1176.9 460.5 L1176.6 458.6 L1176.3 458.4 L1174.8 461.4 L1174.8 458.4 L1174.5 458.2 L1173.5 459.4 L1173.1 458.1 L1172.8 457.9 L1171.6 459.7 L1171.3 457.9 L1171.3 457.7ZM1222.2 459.9 L1232.6 461.7 L1232.8 460.4 L1242.3 462.1 L1242.1 463.3 L1251.1 464.9 L1251.2 463.6 L1261.1 465.3 L1261.0 466.6 L1269.8 468.1 L1269.8 468.1 L1268.9 475.6 L1270.4 475.9 L1269.5 483.6 L1268.0 483.3 L1267.0 491.1 L1268.6 491.4 L1267.7 499.4 L1266.1 499.1 L1265.1 507.3 L1266.7 507.5 L1265.8 515.9 L1264.1 515.6 L1263.1 524.1 L1264.8 524.4 L1263.8 533.1 L1262.1 532.8 L1261.1 541.7 L1261.1 541.7 L1208.6 533.6 L1208.6 533.6 L1210.2 524.7 L1208.5 524.4 L1210.1 515.7 L1211.8 516.0 L1213.4 507.4 L1211.7 507.2 L1213.3 498.8 L1214.9 499.1 L1216.4 490.9 L1214.8 490.6 L1216.3 482.6 L1217.9 482.9 L1219.4 475.1 L1217.8 474.8 L1219.2 467.1 L1220.8 467.4 L1222.2 459.9ZM1219.8 499.8 L1222.5 501.5 L1222.5 503.8 L1224.4 506.1 L1227.0 507.8 L1228.6 506.4 L1232.1 507.8 L1232.2 510.2 L1231.0 512.4 L1232.4 514.7 L1235.4 516.0 L1238.3 515.6 L1240.5 513.5 L1240.9 510.4 L1242.4 509.5 L1245.0 507.5 L1247.2 504.7 L1248.9 502.7 L1250.0 501.3 L1249.4 498.9 L1249.3 496.5 L1251.7 495.4 L1254.7 493.6 L1255.9 490.8 L1257.3 487.3 L1256.8 484.2 L1255.3 482.5 L1252.7 482.1 L1251.9 481.2 L1251.7 479.7 L1250.4 479.5 L1249.6 481.5 L1250.1 484.6 L1250.1 487.6 L1248.6 488.8 L1247.0 487.8 L1248.3 485.0 L1248.1 482.8 L1246.6 481.0 L1245.0 480.0 L1229.4 477.4 L1227.4 478.5 L1225.2 480.4 L1223.2 480.8ZM1248.5 505.7 L1252.7 508.4 L1258.4 510.1 L1258.6 508.5 L1253.8 506.6 L1249.0 505.4ZM1250.0 501.3 L1257.9 503.3 L1258.9 502.0 L1251.2 499.5ZM1256.5 500.0 L1259.1 500.5 L1261.4 482.8 L1258.8 482.4 L1259.0 487.6 L1257.1 491.8 L1257.4 496.4ZM1223.7 526.7 L1223.7 526.0 L1222.7 525.5 L1222.4 525.1 L1222.5 524.1 L1221.8 523.7 L1220.9 524.2 L1220.3 524.2 L1219.4 523.6 L1218.7 523.9 L1218.8 524.9 L1218.5 525.4 L1217.4 525.7 L1217.4 526.4 L1218.4 526.9 L1218.7 527.4 L1218.6 528.3 L1219.3 528.7 L1220.2 528.2 L1220.8 528.2 L1221.7 528.8 L1222.4 528.5 L1222.3 527.5 L1222.6 527.1ZM1253.6 531.7 L1253.6 531.0 L1252.6 530.6 L1252.3 530.1 L1252.4 529.1 L1251.7 528.7 L1250.8 529.3 L1250.2 529.3 L1249.3 528.7 L1248.6 529.0 L1248.8 530.0 L1248.5 530.4 L1247.5 530.8 L1247.5 531.5 L1248.5 531.9 L1248.8 532.4 L1248.7 533.4 L1249.4 533.8 L1250.3 533.2 L1250.9 533.3 L1251.8 533.9 L1252.5 533.5 L1252.3 532.6 L1252.6 532.1ZM1239.4 523.1 L1239.4 522.4 L1238.4 522.0 L1238.1 521.5 L1238.2 520.5 L1237.5 520.2 L1236.6 520.7 L1236.0 520.7 L1235.1 520.1 L1234.4 520.4 L1234.5 521.4 L1234.2 521.8 L1233.2 522.1 L1233.2 522.9 L1234.2 523.3 L1234.5 523.8 L1234.4 524.7 L1235.1 525.1 L1236.0 524.6 L1236.6 524.6 L1237.5 525.2 L1238.2 524.9 L1238.1 523.9 L1238.4 523.5ZM1229.3 515.5 L1229.3 514.8 L1228.3 514.4 L1228.0 513.9 L1228.1 513.0 L1227.4 512.6 L1226.5 513.1 L1226.0 513.1 L1225.1 512.5 L1224.4 512.8 L1224.5 513.8 L1224.2 514.2 L1223.1 514.6 L1223.1 515.3 L1224.1 515.7 L1224.4 516.2 L1224.3 517.1 L1225.0 517.5 L1225.9 517.0 L1226.5 517.0 L1227.4 517.6 L1228.1 517.3 L1228.0 516.3 L1228.3 515.9ZM1251.9 513.4 L1251.9 512.7 L1250.9 512.3 L1250.6 511.8 L1250.7 510.9 L1250.0 510.5 L1249.1 511.0 L1248.5 511.0 L1247.7 510.4 L1247.0 510.7 L1247.1 511.6 L1246.8 512.1 L1245.8 512.4 L1245.8 513.1 L1246.8 513.5 L1247.1 514.0 L1247.0 514.9 L1247.7 515.3 L1248.6 514.8 L1249.2 514.8 L1250.1 515.4 L1250.7 515.1 L1250.6 514.1 L1250.9 513.7ZM1225.5 463.6 L1265.6 470.5 L1265.2 471.7 L1264.3 472.9 L1263.7 471.6 L1263.4 471.4 L1262.2 474.5 L1261.9 471.3 L1261.5 471.1 L1260.6 472.9 L1260.1 471.0 L1259.7 470.8 L1258.2 476.9 L1258.3 470.7 L1257.9 470.5 L1256.8 472.9 L1256.4 470.4 L1256.1 470.2 L1254.8 474.4 L1254.6 470.1 L1254.3 469.9 L1253.3 471.7 L1252.8 469.8 L1252.5 469.5 L1251.3 472.6 L1251.0 469.4 L1250.6 469.2 L1249.7 470.4 L1249.2 469.1 L1248.8 468.9 L1247.5 472.6 L1247.3 468.8 L1247.0 468.6 L1246.0 470.4 L1245.5 468.5 L1245.2 468.3 L1243.7 473.2 L1243.7 468.2 L1243.3 468.0 L1241.5 475.4 L1241.9 467.9 L1241.5 467.7 L1240.3 470.7 L1240.0 467.6 L1239.7 467.3 L1238.6 469.2 L1238.2 467.2 L1237.9 467.0 L1236.7 469.5 L1236.4 466.9 L1236.0 466.7 L1235.1 467.9 L1234.5 466.6 L1234.2 466.4 L1232.7 470.7 L1232.7 466.3 L1232.3 466.1 L1231.3 467.9 L1230.9 466.0 L1230.5 465.8 L1229.2 468.8 L1229.0 465.7 L1228.7 465.4 L1227.7 466.6 L1227.2 465.3 L1226.8 465.1 L1225.7 466.9 L1225.3 465.0 L1225.3 464.9ZM1278.6 468.4 L1288.9 469.8 L1289.1 468.6 L1298.5 469.8 L1298.4 471.1 L1307.5 472.3 L1307.6 471.0 L1317.7 472.4 L1317.6 473.7 L1326.8 475.0 L1326.8 475.0 L1326.2 482.8 L1327.8 483.0 L1327.2 491.0 L1325.6 490.7 L1325.0 498.9 L1326.6 499.1 L1326.0 507.4 L1324.3 507.2 L1323.7 515.6 L1325.3 515.9 L1324.7 524.5 L1323.0 524.3 L1322.3 533.1 L1324.0 533.4 L1323.3 542.4 L1321.6 542.1 L1320.9 551.3 L1320.9 551.3 L1268.4 542.1 L1268.4 542.1 L1269.6 533.2 L1268.0 533.0 L1269.2 524.3 L1270.9 524.6 L1272.0 516.1 L1270.4 515.8 L1271.6 507.5 L1273.2 507.7 L1274.3 499.6 L1272.7 499.3 L1273.9 491.3 L1275.4 491.6 L1276.5 483.7 L1275.0 483.5 L1276.1 475.8 L1277.6 476.0 L1278.6 468.4ZM1299.4 530.0 L1300.9 533.2 L1304.5 534.6 L1307.9 533.9 L1309.6 531.3 L1309.4 528.4 L1311.9 526.3 L1313.2 522.4 L1313.1 518.4 L1311.1 514.8 L1309.5 512.2 L1309.9 507.5 L1310.9 502.2 L1312.7 497.1 L1314.5 492.0 L1315.2 489.9 L1309.0 489.0 L1307.3 492.5 L1306.0 496.9 L1303.3 501.1 L1300.7 504.5 L1296.9 501.6 L1292.8 498.0 L1289.7 494.4 L1287.4 491.1 L1286.1 487.9 L1283.5 487.2 L1282.0 488.8 L1282.1 491.1 L1284.4 494.4 L1286.5 498.5 L1288.7 502.7 L1290.9 506.9 L1293.2 510.4 L1295.6 513.2 L1294.0 515.3 L1291.5 516.9 L1287.7 517.9 L1286.7 519.4 L1285.1 521.1 L1283.9 523.0 L1285.1 524.4 L1288.0 523.2 L1289.7 521.1 L1292.2 519.5 L1294.6 522.7 L1297.1 525.1 L1300.1 526.9ZM1281.8 535.0 L1281.8 534.3 L1280.8 533.8 L1280.5 533.3 L1280.6 532.4 L1279.9 532.0 L1279.0 532.5 L1278.5 532.5 L1277.6 531.8 L1276.9 532.2 L1277.0 533.2 L1276.7 533.6 L1275.7 533.9 L1275.8 534.7 L1276.8 535.1 L1277.1 535.6 L1277.0 536.6 L1277.7 537.0 L1278.5 536.4 L1279.1 536.5 L1280.0 537.1 L1280.7 536.8 L1280.6 535.8 L1280.9 535.3ZM1315.4 539.4 L1315.3 538.7 L1314.3 538.2 L1313.9 537.7 L1314.0 536.7 L1313.3 536.3 L1312.4 536.9 L1311.8 536.8 L1310.8 536.2 L1310.2 536.5 L1310.3 537.5 L1310.1 538.0 L1309.1 538.3 L1309.1 539.1 L1310.1 539.6 L1310.5 540.0 L1310.4 541.0 L1311.1 541.5 L1312.0 540.9 L1312.6 540.9 L1313.6 541.6 L1314.3 541.2 L1314.1 540.2 L1314.4 539.8ZM1296.2 532.4 L1296.1 531.7 L1295.1 531.2 L1294.8 530.7 L1294.9 529.8 L1294.2 529.4 L1293.3 529.9 L1292.7 529.9 L1291.8 529.3 L1291.1 529.6 L1291.3 530.6 L1291.0 531.0 L1290.0 531.4 L1290.0 532.1 L1291.0 532.5 L1291.3 533.0 L1291.3 534.0 L1292.0 534.4 L1292.9 533.9 L1293.4 533.9 L1294.4 534.5 L1295.0 534.2 L1294.9 533.2 L1295.2 532.8ZM1286.4 511.6 L1286.4 510.9 L1285.4 510.5 L1285.1 510.0 L1285.2 509.1 L1284.5 508.7 L1283.6 509.3 L1283.1 509.2 L1282.2 508.6 L1281.5 509.0 L1281.7 509.9 L1281.4 510.3 L1280.4 510.6 L1280.4 511.3 L1281.4 511.8 L1281.7 512.2 L1281.6 513.1 L1282.3 513.5 L1283.2 513.0 L1283.7 513.0 L1284.6 513.6 L1285.3 513.3 L1285.1 512.3 L1285.4 511.9ZM1282.0 472.0 L1322.6 477.6 L1322.2 478.8 L1321.3 480.1 L1320.7 478.8 L1320.3 478.6 L1319.3 481.8 L1318.8 478.5 L1318.4 478.3 L1317.5 480.2 L1316.9 478.3 L1316.6 478.1 L1315.2 484.4 L1315.0 478.0 L1314.7 477.8 L1313.7 480.3 L1313.2 477.8 L1312.8 477.6 L1311.6 482.0 L1311.3 477.5 L1310.9 477.3 L1310.0 479.2 L1309.4 477.2 L1309.1 477.0 L1308.0 480.2 L1307.6 477.0 L1307.2 476.8 L1306.3 478.0 L1305.7 476.7 L1305.4 476.5 L1304.2 480.3 L1303.9 476.5 L1303.5 476.3 L1302.6 478.2 L1302.0 476.2 L1301.7 476.0 L1300.4 481.1 L1300.2 476.0 L1299.8 475.8 L1298.2 483.3 L1298.3 475.7 L1298.0 475.5 L1296.9 478.6 L1296.5 475.5 L1296.1 475.3 L1295.2 477.1 L1294.7 475.2 L1294.3 475.0 L1293.3 477.5 L1292.8 475.0 L1292.5 474.8 L1291.6 476.0 L1291.0 474.7 L1290.7 474.5 L1289.4 478.9 L1289.2 474.5 L1288.8 474.3 L1287.9 476.1 L1287.4 474.2 L1287.0 474.0 L1285.9 477.1 L1285.5 474.0 L1285.2 473.8 L1284.3 475.0 L1283.7 473.7 L1283.4 473.5 L1282.4 475.4 L1281.9 473.5 L1281.8 473.3Z" fill="none" stroke="#ffdbb7" stroke-width="1" stroke-linejoin="round"/><path d="M863 539.200V511M863 539.200L869.800 514.500M863 539.200L899 543.600" stroke="#5c6066" stroke-width="1" fill="none"/></svg><div class="t" style="left:865.5px;top:501.1px;font-size:17px;line-height:20px;letter-spacing:-2.00px;color:#55585e;">z</div><div class="t" style="left:872.5px;top:501.1px;font-size:17px;line-height:20px;letter-spacing:-1.00px;color:#55585e;">y</div><div class="t" style="left:902.5px;top:530.1px;font-size:17px;line-height:20px;letter-spacing:-0.50px;color:#55585e;">x</div><div class="r" style="left:819px;top:224px;width:114px;height:23px;background:#cdd1da;clip-path:polygon(0 0,100% 0,100% 19px,110px 100%,0 100%)"></div><div class="t" style="left:829.4px;top:225.4px;font-size:15px;line-height:18px;letter-spacing:-0.40px;color:#55585e;font-weight:bold;">Perspective</div><div class="r" style="left:919.0px;top:226px;width:1px;height:19px;background:#666;"></div><svg class="r" style="left:921.0px;top:231.5px" width="9" height="6" viewBox="0 0 9 6"><path d="M0 0H9L4.500 5.500Z" fill="#5a5d63"/></svg>
<svg class="r" style="left:66px;top:589px;overflow:hidden" width="747" height="357" viewBox="66 589 747 357"><rect x="66" y="589" width="747" height="357" fill="#9ca3ab"/><rect x="199.4" y="696.8" width="266.0" height="249.2" fill="#959ba3"/><path d="M199.5 696.8V946.0M199.4 697.5H466.4M206.5 696.8V946.0M199.4 703.5H466.4M213.5 696.8V946.0M199.4 710.5H466.4M219.5 696.8V946.0M199.4 717.5H466.4M226.5 696.8V946.0M199.4 723.5H466.4M233.5 696.8V946.0M199.4 730.5H466.4M239.5 696.8V946.0M199.4 737.5H466.4M246.5 696.8V946.0M199.4 743.5H466.4M253.5 696.8V946.0M199.4 750.5H466.4M259.5 696.8V946.0M199.4 757.5H466.4M266.5 696.8V946.0M199.4 763.5H466.4M273.5 696.8V946.0M199.4 770.5H466.4M279.5 696.8V946.0M199.4 777.5H466.4M286.5 696.8V946.0M199.4 783.5H466.4M292.5 696.8V946.0M199.4 790.5H466.4M299.5 696.8V946.0M199.4 797.5H466.4M306.5 696.8V946.0M199.4 803.5H466.4M312.5 696.8V946.0M199.4 810.5H466.4M319.5 696.8V946.0M199.4 816.5H466.4M326.5 696.8V946.0M199.4 823.5H466.4M332.5 696.8V946.0M199.4 830.5H466.4M339.5 696.8V946.0M199.4 836.5H466.4M346.5 696.8V946.0M199.4 843.5H466.4M352.5 696.8V946.0M199.4 850.5H466.4M359.5 696.8V946.0M199.4 856.5H466.4M366.5 696.8V946.0M199.4 863.5H466.4M372.5 696.8V946.0M199.4 870.5H466.4M379.5 696.8V946.0M199.4 876.5H466.4M386.5 696.8V946.0M199.4 883.5H466.4M392.5 696.8V946.0M199.4 890.5H466.4M399.5 696.8V946.0M199.4 896.5H466.4M406.5 696.8V946.0M199.4 903.5H466.4M412.5 696.8V946.0M199.4 910.5H466.4M419.5 696.8V946.0M199.4 916.5H466.4M426.5 696.8V946.0M199.4 923.5H466.4M432.5 696.8V946.0M199.4 930.5H466.4M439.5 696.8V946.0M199.4 936.5H466.4M445.5 696.8V946.0M199.4 943.5H466.4M452.5 696.8V946.0M459.5 696.8V946.0M465.5 696.8V946.0" stroke="#80858f" stroke-width="1" fill="none" shape-rendering="crispEdges"/><path d="M104 830.500H217" stroke="#bfbfff" stroke-width="1.100"/><path d="M402 830.900H465.700" stroke="#a04040" stroke-width="1.600"/><path d="M218.500 829.400H372" stroke="#bfbfff" stroke-width="5.400" stroke-linecap="round"/><path d="M372 698H402.500" stroke="#c80000" stroke-width="2.600"/><path d="M400.600 697V830" stroke="#c80000" stroke-width="4.200"/><path d="M400.6 710V724M400.6 737V751M400.6 764V778M400.6 790.5V804.6M400.6 817V827.5" stroke="#c86a6a" stroke-width="4.2" fill="none"/><path d="M373 762.400H398.500" stroke="#c80000" stroke-width="1.300"/><path d="M373 829.500H402" stroke="#c80000" stroke-width="5.200"/><rect x="385.800" y="827.700" width="14.400" height="3.600" rx="1.800" fill="#5a5ab4" stroke="#0000e6" stroke-width="1.300"/><circle cx="372.800" cy="829.500" r="2" fill="#2020d0"/><path d="M331.900 699V828" stroke="#c8b4b4" stroke-width="2.600"/><path d="M331.9 710V724M331.9 737V751M331.9 764V778M331.9 790.5V804.6M331.9 817V827.5" stroke="#c80000" stroke-width="3.0" fill="none"/><path d="M366.500 699V828" stroke="#c80000" stroke-width="1.400"/><path d="M260.500 697.800H372.800" stroke="#00ffff" stroke-width="2.200"/><path d="M261.200 697V829M294.100 698V828M348.400 698V828M350.800 698V828M261 762.400H368" stroke="#00ffff" stroke-width="1.400" fill="none"/><path d="M328 697V829.500M370.500 697V829.500" stroke="#00ffff" stroke-width="4.700"/><path d="M259.3 712V722M259.3 739V749M259.3 766V776M259.3 792.5V802.6M259.3 819V825.5" stroke="#00ffff" stroke-width="4.6" fill="none" stroke-linecap="round"/><path d="M326 712V722M326 739V749M326 766V776M326 792.5V802.6M326 819V825.5" stroke="#00ffff" stroke-width="4.6" fill="none" stroke-linecap="round"/><path d="M372.6 712V722M372.6 739V749M372.6 766V776M372.6 792.5V802.6M372.6 819V825.5" stroke="#00ffff" stroke-width="3.6" fill="none" stroke-linecap="round"/><path d="M260 828.200H372" stroke="#00ffff" stroke-width="2"/><path d="M273.700 828.400H287M301.200 828.400H313.800M338.200 828.400H346.900M355.500 828.400H363.400" stroke="#00ffff" stroke-width="3.800"/><path d="M439 848.700H778" stroke="#ffdbb7" stroke-width="1.300"/><path d="M489.0 698.2V826.2M458.5 762.4000000000001H523.8" stroke="#ffdbb7" stroke-width="1"/><path d="M482.2 722.9 L485.6 721.3 L489.1 722.2 L491.5 725.7 L491.8 729.8 L491.5 733.9 L493.9 739.4 L495.2 744.8 L493.9 748.9 L492.1 754.4 L493.9 761.3 L496.6 768.1 L500.0 772.9 L505.5 775.7 L512.3 781.1 L517.8 785.9 L520.6 790.0 L519.9 793.5 L516.5 794.1 L514.4 791.4 L508.2 788.0 L501.4 783.2 L494.5 777.7 L489.1 772.2 L485.6 768.8 L484.3 772.2 L485.0 775.7 L480.2 776.3 L479.5 773.6 L481.5 768.8 L480.2 767.4 L475.4 770.2 L471.3 773.6 L471.9 779.1 L476.0 790.0 L474.7 792.1 L465.8 794.8 L462.3 792.8 L463.7 790.7 L467.1 788.7 L465.8 780.4 L463.0 773.6 L465.1 769.5 L470.6 764.0 L474.7 758.5 L477.4 751.7 L477.4 744.8 L474.7 742.8 L470.6 741.4 L468.5 736.6 L467.8 732.5 L465.1 730.4 L466.5 728.4 L469.2 729.8 L471.3 725.9 L468.5 717.4 L464.4 709.2 L459.6 699.6 L461.7 707.8 L465.8 716.1 L469.9 723.6 L473.3 726.3 L472.6 722.9 L475.4 724.3 L478.8 729.1 L480.8 731.8 L481.5 728.4 L480.6 725.7Z" fill="#9ca3ab" stroke="#ffdbb7" stroke-width="1.700" stroke-linejoin="round"/><path d="M480.1 712.6 L480.0 713.6 L478.5 713.9 L478.2 714.5 L478.7 716.0 L478.0 716.5 L476.7 715.8 L476.0 716.0 L475.4 717.3 L474.4 717.2 L474.1 715.8 L473.5 715.5 L472.0 716.0 L471.5 715.2 L472.2 713.9 L472.0 713.3 L470.7 712.6 L470.8 711.7 L472.2 711.3 L472.5 710.8 L472.0 709.3 L472.8 708.7 L474.1 709.5 L474.7 709.3 L475.4 707.9 L476.3 708.0 L476.7 709.5 L477.2 709.8 L478.7 709.3 L479.3 710.0 L478.5 711.3 L478.7 712.0ZM499.2 706.7 L499.2 707.7 L497.7 708.0 L497.4 708.6 L497.9 710.1 L497.2 710.7 L495.8 709.9 L495.2 710.1 L494.5 711.4 L493.6 711.4 L493.2 709.9 L492.7 709.6 L491.2 710.1 L490.6 709.4 L491.4 708.0 L491.2 707.4 L489.8 706.7 L489.9 705.8 L491.4 705.5 L491.7 704.9 L491.2 703.4 L491.9 702.8 L493.2 703.6 L493.9 703.4 L494.5 702.0 L495.5 702.1 L495.8 703.6 L496.4 703.9 L497.9 703.4 L498.4 704.1 L497.7 705.5 L497.9 706.1ZM515.7 708.5 L515.6 709.4 L514.1 709.8 L513.8 710.4 L514.3 711.9 L513.6 712.4 L512.3 711.7 L511.6 711.8 L511.0 713.2 L510.1 713.1 L509.7 711.7 L509.1 711.3 L507.7 711.9 L507.1 711.1 L507.9 709.8 L507.7 709.2 L506.3 708.5 L506.4 707.6 L507.9 707.2 L508.2 706.6 L507.7 705.2 L508.4 704.6 L509.7 705.4 L510.3 705.2 L511.0 703.8 L511.9 703.9 L512.3 705.4 L512.9 705.7 L514.3 705.2 L514.9 705.9 L514.1 707.2 L514.3 707.9ZM510.5 735.0 L510.4 735.9 L508.9 736.3 L508.6 736.8 L509.1 738.3 L508.4 738.9 L507.1 738.1 L506.4 738.3 L505.8 739.7 L504.9 739.6 L504.5 738.1 L503.9 737.8 L502.5 738.3 L501.9 737.6 L502.6 736.3 L502.5 735.6 L501.1 735.0 L501.2 734.1 L502.6 733.7 L503.0 733.1 L502.5 731.6 L503.2 731.1 L504.5 731.8 L505.1 731.6 L505.8 730.3 L506.7 730.4 L507.1 731.8 L507.7 732.2 L509.1 731.6 L509.7 732.4 L508.9 733.7 L509.1 734.3ZM515.4 759.9 L515.3 760.8 L513.8 761.2 L513.5 761.8 L514.0 763.2 L513.3 763.8 L512.0 763.0 L511.4 763.2 L510.7 764.6 L509.8 764.5 L509.4 763.0 L508.8 762.7 L507.4 763.2 L506.8 762.5 L507.6 761.2 L507.4 760.6 L506.0 759.9 L506.1 759.0 L507.6 758.6 L507.9 758.0 L507.4 756.6 L508.1 756.0 L509.4 756.8 L510.0 756.6 L510.7 755.2 L511.6 755.3 L512.0 756.8 L512.6 757.1 L514.0 756.6 L514.6 757.3 L513.8 758.6 L514.0 759.2Z" fill="#ffdbb7" stroke="#ffdbb7" stroke-width="0.600" stroke-linejoin="round"/><circle cx="475.4" cy="712.6" r="1.700" fill="#9ca3ab"/><circle cx="494.5" cy="706.7" r="1.700" fill="#9ca3ab"/><circle cx="511.0" cy="708.5" r="1.700" fill="#9ca3ab"/><circle cx="505.8" cy="735.0" r="1.700" fill="#9ca3ab"/><circle cx="510.7" cy="759.9" r="1.700" fill="#9ca3ab"/><path d="M460.3 814.0 L462.3 818.8 L464.4 816.1 L466.5 820.9 L468.5 813.3 L470.6 806.5 L472.6 805.8 L473.3 813.3 L475.4 819.5 L477.4 812.0 L480.2 818.1 L482.9 816.1 L485.6 819.5 L489.1 818.8 L493.2 818.1 L495.2 813.3 L497.3 807.2 L499.3 807.8 L500.7 814.7 L502.8 819.5 L505.5 817.4 L506.9 803.7 L508.9 803.7 L511.0 810.6 L513.7 818.8 L515.8 814.0 L517.8 814.7 L519.2 821.5 L519.9 823.6 L460.3 823.6Z" fill="#9ca3ab" stroke="#ffdbb7" stroke-width="1.600" stroke-linejoin="round"/><path d="M457.5 697.7H525.8" stroke="#ffdbb7" stroke-width="3"/><path d="M457.5 696.2V829.0" stroke="#ffdbb7" stroke-width="4"/><path d="M522.3 696.2V829.0M525.8 696.2V829.0" stroke="#ffdbb7" stroke-width="1.600"/><path d="M455.5 823.2H526.8M455.5 827.2H526.8" stroke="#ffdbb7" stroke-width="3"/><path d="M459.5 820.8000000000001H522.8" stroke="#ffdbb7" stroke-width="1.200"/><path d="M454.9 712V722M454.9 739V749M454.9 766V776M454.9 792.5V802.6M454.9 819V825.5" stroke="#ffdbb7" stroke-width="4.4" fill="none" stroke-linecap="round"/><path d="M527.1999999999999 712V722M527.1999999999999 739V749M527.1999999999999 766V776M527.1999999999999 792.5V802.6M527.1999999999999 819V825.5" stroke="#ffdbb7" stroke-width="3.2" fill="none" stroke-linecap="round"/><path d="M471.5 830.0H484.5M497.5 830.0H510.5" stroke="#ffdbb7" stroke-width="3.600" stroke-linecap="round"/><path d="M565.7 698.2V826.2M535.2 762.4000000000001H600.5" stroke="#ffdbb7" stroke-width="1"/><path d="M552.1 717.4 L557.5 715.0 L563.0 715.4 L567.8 718.8 L569.6 722.9 L567.1 726.3 L562.3 729.1 L560.3 731.1 L564.4 735.9 L571.2 742.8 L576.0 746.9 L580.1 742.8 L583.6 737.3 L585.6 735.2 L587.7 737.3 L584.9 741.4 L581.5 746.2 L577.4 750.3 L575.4 753.0 L579.5 755.8 L578.1 758.5 L574.0 759.9 L574.7 764.0 L577.4 769.5 L578.8 775.0 L578.1 783.2 L577.4 791.4 L576.7 797.6 L568.5 797.6 L568.2 788.7 L567.1 780.4 L563.7 785.9 L562.7 792.8 L562.3 798.3 L552.7 798.3 L552.3 790.0 L554.1 779.1 L556.2 769.5 L556.2 761.3 L553.4 754.4 L550.0 746.2 L546.6 736.6 L545.2 729.8 L548.0 722.9Z" fill="#9ca3ab" stroke="#ffdbb7" stroke-width="1.700" stroke-linejoin="round"/><path d="M548.5 713.3 L548.5 714.2 L547.0 714.6 L546.7 715.2 L547.2 716.6 L546.5 717.2 L545.1 716.4 L544.5 716.6 L543.8 718.0 L542.9 717.9 L542.5 716.4 L542.0 716.1 L540.5 716.6 L539.9 715.9 L540.7 714.6 L540.5 714.0 L539.1 713.3 L539.2 712.4 L540.7 712.0 L541.0 711.4 L540.5 710.0 L541.2 709.4 L542.5 710.2 L543.2 710.0 L543.8 708.6 L544.8 708.7 L545.1 710.2 L545.7 710.5 L547.2 710.0 L547.8 710.7 L547.0 712.0 L547.2 712.7ZM567.7 706.7 L567.6 707.7 L566.1 708.0 L565.8 708.6 L566.3 710.1 L565.6 710.7 L564.3 709.9 L563.7 710.1 L563.0 711.4 L562.1 711.4 L561.7 709.9 L561.1 709.6 L559.7 710.1 L559.1 709.4 L559.9 708.0 L559.7 707.4 L558.3 706.7 L558.4 705.8 L559.9 705.5 L560.2 704.9 L559.7 703.4 L560.4 702.8 L561.7 703.6 L562.4 703.4 L563.0 702.0 L563.9 702.1 L564.3 703.6 L564.9 703.9 L566.3 703.4 L566.9 704.1 L566.1 705.5 L566.3 706.1ZM591.7 708.5 L591.6 709.4 L590.1 709.8 L589.8 710.4 L590.3 711.9 L589.6 712.4 L588.3 711.7 L587.7 711.8 L587.0 713.2 L586.1 713.1 L585.7 711.7 L585.1 711.3 L583.7 711.9 L583.1 711.1 L583.9 709.8 L583.7 709.2 L582.3 708.5 L582.4 707.6 L583.9 707.2 L584.2 706.6 L583.7 705.2 L584.4 704.6 L585.7 705.4 L586.3 705.2 L587.0 703.8 L587.9 703.9 L588.3 705.4 L588.9 705.7 L590.3 705.2 L590.9 705.9 L590.1 707.2 L590.3 707.9ZM582.5 727.0 L582.4 727.9 L580.9 728.3 L580.6 728.9 L581.1 730.3 L580.4 730.9 L579.1 730.1 L578.5 730.3 L577.8 731.7 L576.9 731.6 L576.5 730.1 L575.9 729.8 L574.5 730.3 L573.9 729.6 L574.7 728.3 L574.5 727.7 L573.1 727.0 L573.2 726.1 L574.7 725.7 L575.0 725.1 L574.5 723.7 L575.2 723.1 L576.5 723.9 L577.2 723.7 L577.8 722.3 L578.7 722.4 L579.1 723.9 L579.7 724.2 L581.1 723.7 L581.7 724.4 L580.9 725.7 L581.1 726.4ZM547.9 760.2 L547.8 761.1 L546.3 761.5 L546.0 762.1 L546.5 763.5 L545.8 764.1 L544.5 763.3 L543.8 763.5 L543.2 764.9 L542.2 764.8 L541.9 763.3 L541.3 763.0 L539.8 763.5 L539.3 762.8 L540.0 761.5 L539.8 760.8 L538.5 760.2 L538.5 759.3 L540.0 758.9 L540.3 758.3 L539.8 756.8 L540.5 756.3 L541.9 757.0 L542.5 756.9 L543.2 755.5 L544.1 755.6 L544.5 757.0 L545.0 757.4 L546.5 756.8 L547.1 757.6 L546.3 758.9 L546.5 759.5ZM593.1 760.2 L593.0 761.1 L591.5 761.5 L591.2 762.1 L591.7 763.5 L591.0 764.1 L589.7 763.3 L589.0 763.5 L588.4 764.9 L587.4 764.8 L587.1 763.3 L586.5 763.0 L585.0 763.5 L584.5 762.8 L585.2 761.5 L585.0 760.8 L583.7 760.2 L583.8 759.3 L585.2 758.9 L585.6 758.3 L585.0 756.8 L585.8 756.3 L587.1 757.0 L587.7 756.9 L588.4 755.5 L589.3 755.6 L589.7 757.0 L590.2 757.4 L591.7 756.8 L592.3 757.6 L591.5 758.9 L591.7 759.5Z" fill="#ffdbb7" stroke="#ffdbb7" stroke-width="0.600" stroke-linejoin="round"/><circle cx="543.8" cy="713.3" r="1.700" fill="#9ca3ab"/><circle cx="563.0" cy="706.7" r="1.700" fill="#9ca3ab"/><circle cx="587.0" cy="708.5" r="1.700" fill="#9ca3ab"/><circle cx="577.8" cy="727.0" r="1.700" fill="#9ca3ab"/><circle cx="543.2" cy="760.2" r="1.700" fill="#9ca3ab"/><circle cx="588.4" cy="760.2" r="1.700" fill="#9ca3ab"/><path d="M537.0 814.0 L539.0 818.8 L541.1 816.1 L543.2 820.9 L545.2 813.3 L547.3 806.5 L549.3 805.8 L550.0 813.3 L552.1 819.5 L554.1 812.0 L556.9 818.1 L559.6 816.1 L562.3 819.5 L565.8 818.8 L569.9 818.1 L571.9 813.3 L574.0 807.2 L576.0 807.8 L577.4 814.7 L579.5 819.5 L582.2 817.4 L583.6 803.7 L585.6 803.7 L587.7 810.6 L590.4 818.8 L592.5 814.0 L594.5 814.7 L595.9 821.5 L596.6 823.6 L537.0 823.6Z" fill="#9ca3ab" stroke="#ffdbb7" stroke-width="1.600" stroke-linejoin="round"/><path d="M534.2 697.7H602.5" stroke="#ffdbb7" stroke-width="3"/><path d="M534.2 696.2V829.0" stroke="#ffdbb7" stroke-width="4"/><path d="M599.0 696.2V829.0M602.5 696.2V829.0" stroke="#ffdbb7" stroke-width="1.600"/><path d="M532.2 823.2H603.5M532.2 827.2H603.5" stroke="#ffdbb7" stroke-width="3"/><path d="M536.2 820.8000000000001H599.5" stroke="#ffdbb7" stroke-width="1.200"/><path d="M531.6 712V722M531.6 739V749M531.6 766V776M531.6 792.5V802.6M531.6 819V825.5" stroke="#ffdbb7" stroke-width="4.4" fill="none" stroke-linecap="round"/><path d="M603.9 712V722M603.9 739V749M603.9 766V776M603.9 792.5V802.6M603.9 819V825.5" stroke="#ffdbb7" stroke-width="3.2" fill="none" stroke-linecap="round"/><path d="M548.2 830.0H561.2M574.2 830.0H587.2" stroke="#ffdbb7" stroke-width="3.600" stroke-linecap="round"/><path d="M645.0 698.2V826.2M614.5 762.4000000000001H679.8" stroke="#ffdbb7" stroke-width="1"/><path d="M616.0 752.4 L620.4 750.3 L621.1 746.2 L624.5 742.8 L628.6 740.7 L630.7 743.5 L636.2 742.1 L636.8 738.0 L635.7 733.9 L638.2 730.4 L643.0 729.1 L647.1 730.4 L649.9 734.6 L649.9 740.0 L651.9 742.1 L655.3 746.2 L658.1 751.7 L660.1 755.8 L661.5 758.5 L660.1 762.6 L659.4 766.7 L662.9 769.5 L667.0 773.6 L668.3 779.1 L669.7 785.9 L668.3 791.4 L665.6 794.1 L661.5 794.1 L660.1 795.5 L659.4 798.3 L657.4 798.3 L656.7 794.1 L658.1 788.7 L658.8 783.2 L656.7 780.4 L654.0 781.8 L655.3 787.3 L654.7 791.4 L651.9 794.1 L649.2 795.5 L624.5 795.5 L621.8 792.8 L619.0 788.7 L616.0 787.3ZM660.1 750.3 L667.0 746.9 L675.9 745.5 L675.9 748.3 L668.3 750.3 L660.8 751.0ZM661.5 758.5 L673.8 757.2 L675.2 759.9 L662.9 762.0ZM671.1 762.6 L675.2 762.6 L675.2 795.5 L671.1 795.5 L672.5 785.9 L670.4 777.7 L671.8 769.5Z" fill="#9ca3ab" stroke="#ffdbb7" stroke-width="1.700" stroke-linejoin="round"/><path d="M628.5 708.1 L628.4 709.0 L627.0 709.4 L626.6 710.0 L627.2 711.4 L626.4 712.0 L625.1 711.2 L624.5 711.4 L623.8 712.8 L622.9 712.7 L622.5 711.2 L621.9 710.9 L620.5 711.4 L619.9 710.7 L620.7 709.4 L620.5 708.8 L619.1 708.1 L619.2 707.2 L620.7 706.8 L621.0 706.2 L620.5 704.8 L621.2 704.2 L622.5 705.0 L623.2 704.8 L623.8 703.4 L624.7 703.5 L625.1 705.0 L625.7 705.3 L627.2 704.8 L627.7 705.5 L627.0 706.8 L627.1 707.5ZM673.0 707.6 L673.0 708.5 L671.5 708.9 L671.2 709.4 L671.7 710.9 L671.0 711.5 L669.6 710.7 L669.0 710.9 L668.3 712.3 L667.4 712.2 L667.1 710.7 L666.5 710.4 L665.0 710.9 L664.4 710.2 L665.2 708.9 L665.0 708.2 L663.6 707.6 L663.7 706.7 L665.2 706.3 L665.5 705.7 L665.0 704.2 L665.7 703.7 L667.1 704.4 L667.7 704.3 L668.3 702.9 L669.3 703.0 L669.6 704.4 L670.2 704.8 L671.7 704.2 L672.3 705.0 L671.5 706.3 L671.7 706.9ZM650.4 718.1 L650.4 719.0 L648.9 719.4 L648.6 720.0 L649.1 721.4 L648.4 722.0 L647.0 721.2 L646.4 721.4 L645.7 722.8 L644.8 722.7 L644.5 721.2 L643.9 720.9 L642.4 721.4 L641.8 720.7 L642.6 719.4 L642.4 718.8 L641.0 718.1 L641.1 717.2 L642.6 716.8 L642.9 716.2 L642.4 714.8 L643.1 714.2 L644.5 715.0 L645.1 714.8 L645.7 713.4 L646.7 713.5 L647.0 715.0 L647.6 715.3 L649.1 714.8 L649.7 715.5 L648.9 716.8 L649.1 717.5ZM634.0 728.1 L633.9 729.0 L632.4 729.4 L632.1 730.0 L632.6 731.4 L631.9 732.0 L630.6 731.2 L630.0 731.4 L629.3 732.8 L628.4 732.7 L628.0 731.2 L627.4 730.9 L626.0 731.4 L625.4 730.7 L626.2 729.4 L626.0 728.8 L624.6 728.1 L624.7 727.2 L626.2 726.8 L626.5 726.2 L626.0 724.8 L626.7 724.2 L628.0 725.0 L628.6 724.8 L629.3 723.4 L630.2 723.5 L630.6 725.0 L631.2 725.3 L632.6 724.8 L633.2 725.5 L632.4 726.8 L632.6 727.5ZM666.9 738.0 L666.8 738.9 L665.3 739.3 L665.0 739.9 L665.5 741.3 L664.8 741.9 L663.5 741.1 L662.8 741.3 L662.2 742.7 L661.3 742.6 L660.9 741.1 L660.3 740.8 L658.9 741.3 L658.3 740.6 L659.1 739.3 L658.9 738.6 L657.5 738.0 L657.6 737.1 L659.1 736.7 L659.4 736.1 L658.9 734.7 L659.6 734.1 L660.9 734.9 L661.5 734.7 L662.2 733.3 L663.1 733.4 L663.5 734.9 L664.1 735.2 L665.5 734.7 L666.1 735.4 L665.3 736.7 L665.5 737.3Z" fill="#ffdbb7" stroke="#ffdbb7" stroke-width="0.600" stroke-linejoin="round"/><circle cx="623.8" cy="708.1" r="1.700" fill="#9ca3ab"/><circle cx="668.3" cy="707.6" r="1.700" fill="#9ca3ab"/><circle cx="645.7" cy="718.1" r="1.700" fill="#9ca3ab"/><circle cx="629.3" cy="728.1" r="1.700" fill="#9ca3ab"/><circle cx="662.2" cy="738.0" r="1.700" fill="#9ca3ab"/><path d="M616.3 814.0 L618.3 818.8 L620.4 816.1 L622.5 820.9 L624.5 813.3 L626.6 806.5 L628.6 805.8 L629.3 813.3 L631.4 819.5 L633.4 812.0 L636.2 818.1 L638.9 816.1 L641.6 819.5 L645.1 818.8 L649.2 818.1 L651.2 813.3 L653.3 807.2 L655.3 807.8 L656.7 814.7 L658.8 819.5 L661.5 817.4 L662.9 803.7 L664.9 803.7 L667.0 810.6 L669.7 818.8 L671.8 814.0 L673.8 814.7 L675.2 821.5 L675.9 823.6 L616.3 823.6Z" fill="#9ca3ab" stroke="#ffdbb7" stroke-width="1.600" stroke-linejoin="round"/><path d="M613.5 697.7H681.8" stroke="#ffdbb7" stroke-width="3"/><path d="M613.5 696.2V829.0" stroke="#ffdbb7" stroke-width="4"/><path d="M678.3 696.2V829.0M681.8 696.2V829.0" stroke="#ffdbb7" stroke-width="1.600"/><path d="M611.5 823.2H682.8M611.5 827.2H682.8" stroke="#ffdbb7" stroke-width="3"/><path d="M615.5 820.8000000000001H678.8" stroke="#ffdbb7" stroke-width="1.200"/><path d="M610.9 712V722M610.9 739V749M610.9 766V776M610.9 792.5V802.6M610.9 819V825.5" stroke="#ffdbb7" stroke-width="4.4" fill="none" stroke-linecap="round"/><path d="M683.1999999999999 712V722M683.1999999999999 739V749M683.1999999999999 766V776M683.1999999999999 792.5V802.6M683.1999999999999 819V825.5" stroke="#ffdbb7" stroke-width="3.2" fill="none" stroke-linecap="round"/><path d="M627.5 830.0H640.5M653.5 830.0H666.5" stroke="#ffdbb7" stroke-width="3.600" stroke-linecap="round"/><path d="M725.9 698.2V826.2M695.4 762.4000000000001H760.6999999999999" stroke="#ffdbb7" stroke-width="1"/><path d="M732.8 721.5 L735.6 716.7 L741.0 715.4 L745.8 717.4 L747.9 722.2 L747.2 727.0 L750.6 731.1 L752.0 738.0 L751.3 744.8 L747.9 750.3 L745.1 754.4 L745.1 762.6 L745.8 772.2 L747.9 781.8 L749.9 791.4 L750.6 795.5 L741.0 795.5 L739.0 788.7 L737.6 780.4 L734.2 772.2 L730.8 765.4 L724.6 769.5 L717.7 775.0 L712.3 780.4 L708.2 785.9 L705.4 791.4 L701.3 792.1 L699.2 788.7 L699.9 784.6 L704.0 779.1 L708.2 772.2 L712.3 765.4 L716.4 758.5 L720.5 753.0 L724.6 748.9 L722.5 744.8 L719.1 741.4 L713.6 738.7 L712.3 735.9 L710.2 732.5 L708.8 729.1 L710.9 727.0 L715.0 729.8 L717.1 733.9 L720.5 737.3 L724.6 732.5 L728.7 729.1 L733.5 727.0Z" fill="#9ca3ab" stroke="#ffdbb7" stroke-width="1.700" stroke-linejoin="round"/><path d="M708.1 708.5 L708.0 709.4 L706.5 709.8 L706.2 710.4 L706.7 711.9 L706.0 712.4 L704.7 711.7 L704.0 711.8 L703.4 713.2 L702.4 713.1 L702.1 711.7 L701.5 711.3 L700.0 711.9 L699.5 711.1 L700.2 709.8 L700.0 709.2 L698.7 708.5 L698.7 707.6 L700.2 707.2 L700.5 706.6 L700.0 705.2 L700.7 704.6 L702.1 705.4 L702.7 705.2 L703.4 703.8 L704.3 703.9 L704.7 705.4 L705.2 705.7 L706.7 705.2 L707.3 705.9 L706.5 707.2 L706.7 707.9ZM757.4 710.6 L757.3 711.5 L755.8 711.9 L755.5 712.5 L756.0 713.9 L755.3 714.5 L754.0 713.7 L753.3 713.9 L752.7 715.3 L751.8 715.2 L751.4 713.7 L750.8 713.4 L749.4 713.9 L748.8 713.2 L749.5 711.9 L749.4 711.2 L748.0 710.6 L748.1 709.7 L749.5 709.3 L749.9 708.7 L749.4 707.3 L750.1 706.7 L751.4 707.5 L752.0 707.3 L752.7 705.9 L753.6 706.0 L754.0 707.5 L754.6 707.8 L756.0 707.3 L756.6 708.0 L755.8 709.3 L756.0 709.9ZM728.6 716.7 L728.5 717.7 L727.0 718.0 L726.7 718.6 L727.2 720.1 L726.5 720.7 L725.2 719.9 L724.6 720.1 L723.9 721.4 L723.0 721.4 L722.6 719.9 L722.0 719.6 L720.6 720.1 L720.0 719.4 L720.8 718.0 L720.6 717.4 L719.2 716.7 L719.3 715.8 L720.8 715.5 L721.1 714.9 L720.6 713.4 L721.3 712.8 L722.6 713.6 L723.2 713.4 L723.9 712.0 L724.8 712.1 L725.2 713.6 L725.8 713.9 L727.2 713.4 L727.8 714.1 L727.0 715.5 L727.2 716.1ZM710.5 749.2 L710.4 750.1 L709.0 750.5 L708.6 751.1 L709.1 752.5 L708.4 753.1 L707.1 752.3 L706.5 752.5 L705.8 753.9 L704.9 753.8 L704.5 752.3 L703.9 752.0 L702.5 752.5 L701.9 751.8 L702.7 750.5 L702.5 749.9 L701.1 749.2 L701.2 748.3 L702.7 747.9 L703.0 747.3 L702.5 745.9 L703.2 745.3 L704.5 746.1 L705.2 745.9 L705.8 744.5 L706.7 744.6 L707.1 746.1 L707.7 746.4 L709.1 745.9 L709.7 746.6 L709.0 747.9 L709.1 748.6Z" fill="#ffdbb7" stroke="#ffdbb7" stroke-width="0.600" stroke-linejoin="round"/><circle cx="703.4" cy="708.5" r="1.700" fill="#9ca3ab"/><circle cx="752.7" cy="710.6" r="1.700" fill="#9ca3ab"/><circle cx="723.9" cy="716.7" r="1.700" fill="#9ca3ab"/><circle cx="705.8" cy="749.2" r="1.700" fill="#9ca3ab"/><path d="M697.2 814.0 L699.2 818.8 L701.3 816.1 L703.4 820.9 L705.4 813.3 L707.5 806.5 L709.5 805.8 L710.2 813.3 L712.3 819.5 L714.3 812.0 L717.1 818.1 L719.8 816.1 L722.5 819.5 L726.0 818.8 L730.1 818.1 L732.1 813.3 L734.2 807.2 L736.2 807.8 L737.6 814.7 L739.7 819.5 L742.4 817.4 L743.8 803.7 L745.8 803.7 L747.9 810.6 L750.6 818.8 L752.7 814.0 L754.7 814.7 L756.1 821.5 L756.8 823.6 L697.2 823.6Z" fill="#9ca3ab" stroke="#ffdbb7" stroke-width="1.600" stroke-linejoin="round"/><path d="M694.4 697.7H762.6999999999999" stroke="#ffdbb7" stroke-width="3"/><path d="M694.4 696.2V829.0" stroke="#ffdbb7" stroke-width="4"/><path d="M759.1999999999999 696.2V829.0M762.6999999999999 696.2V829.0" stroke="#ffdbb7" stroke-width="1.600"/><path d="M692.4 823.2H763.6999999999999M692.4 827.2H763.6999999999999" stroke="#ffdbb7" stroke-width="3"/><path d="M696.4 820.8000000000001H759.6999999999999" stroke="#ffdbb7" stroke-width="1.200"/><path d="M691.8 712V722M691.8 739V749M691.8 766V776M691.8 792.5V802.6M691.8 819V825.5" stroke="#ffdbb7" stroke-width="4.4" fill="none" stroke-linecap="round"/><path d="M764.0999999999999 712V722M764.0999999999999 739V749M764.0999999999999 766V776M764.0999999999999 792.5V802.6M764.0999999999999 819V825.5" stroke="#ffdbb7" stroke-width="3.2" fill="none" stroke-linecap="round"/><path d="M708.4 830.0H721.4M734.4 830.0H747.4" stroke="#ffdbb7" stroke-width="3.600" stroke-linecap="round"/><path d="M110.500 865.300V902.500H147" stroke="#5c6066" stroke-width="1" fill="none"/></svg><div class="t" style="left:113.0px;top:850.4px;font-size:17px;line-height:20px;letter-spacing:-1.00px;color:#55585e;">z</div><div class="t" style="left:150.0px;top:887.5px;font-size:17px;line-height:20px;letter-spacing:-0.50px;color:#55585e;">x</div><div class="r" style="left:66px;top:589px;width:62px;height:23px;background:#cdd1da;clip-path:polygon(0 0,100% 0,100% 19px,58px 100%,0 100%)"></div><div class="t" style="left:74.7px;top:590.7px;font-size:15px;line-height:18px;letter-spacing:-0.97px;color:#55585e;font-weight:bold;">Face</div><div class="r" style="left:113.9px;top:592px;width:1px;height:19px;background:#666;"></div><svg class="r" style="left:115.9px;top:597.5px" width="9" height="6" viewBox="0 0 9 6"><path d="M0 0H9L4.500 5.500Z" fill="#5a5d63"/></svg>
<svg class="r" style="left:819px;top:589px;overflow:hidden" width="745" height="357" viewBox="819 589 745 357"><rect x="819" y="589" width="745" height="357" fill="#9ca3ab"/><rect x="1018.6" y="659" width="369.8" height="287.0" fill="#959ba3"/><path d="M1019.5 659V946.0M1018.6 659.5H1389.4M1028.5 659V946.0M1018.6 668.5H1389.4M1037.5 659V946.0M1018.6 677.5H1389.4M1046.5 659V946.0M1018.6 687.5H1389.4M1056.5 659V946.0M1018.6 696.5H1389.4M1065.5 659V946.0M1018.6 705.5H1389.4M1074.5 659V946.0M1018.6 714.5H1389.4M1083.5 659V946.0M1018.6 724.5H1389.4M1093.5 659V946.0M1018.6 733.5H1389.4M1102.5 659V946.0M1018.6 742.5H1389.4M1111.5 659V946.0M1018.6 751.5H1389.4M1120.5 659V946.0M1018.6 761.5H1389.4M1130.5 659V946.0M1018.6 770.5H1389.4M1139.5 659V946.0M1018.6 779.5H1389.4M1148.5 659V946.0M1018.6 788.5H1389.4M1157.5 659V946.0M1018.6 798.5H1389.4M1167.5 659V946.0M1018.6 807.5H1389.4M1176.5 659V946.0M1018.6 816.5H1389.4M1185.5 659V946.0M1018.6 825.5H1389.4M1194.5 659V946.0M1018.6 835.5H1389.4M1204.5 659V946.0M1018.6 844.5H1389.4M1213.5 659V946.0M1018.6 853.5H1389.4M1222.5 659V946.0M1018.6 862.5H1389.4M1231.5 659V946.0M1018.6 872.5H1389.4M1240.5 659V946.0M1018.6 881.5H1389.4M1250.5 659V946.0M1018.6 890.5H1389.4M1259.5 659V946.0M1018.6 899.5H1389.4M1268.5 659V946.0M1018.6 909.5H1389.4M1277.5 659V946.0M1018.6 918.5H1389.4M1287.5 659V946.0M1018.6 927.5H1389.4M1296.5 659V946.0M1018.6 936.5H1389.4M1305.5 659V946.0M1018.6 946.5H1389.4M1314.5 659V946.0M1324.5 659V946.0M1333.5 659V946.0M1342.5 659V946.0M1351.5 659V946.0M1361.5 659V946.0M1370.5 659V946.0M1379.5 659V946.0M1388.5 659V946.0" stroke="#80858f" stroke-width="1" fill="none" shape-rendering="crispEdges"/><path d="M1160 843.500H1200" stroke="#bfbfff" stroke-width="1.200"/><path d="M1299 843.500H1372" stroke="#bfbfff" stroke-width="1.300"/><path d="M1299 844.500H1388" stroke="#a04040" stroke-width="1.300"/><path d="M1388 843.200H1487.500" stroke="#0000ff" stroke-width="1.400"/><path d="M952 841.800H1158" stroke="#bfbfff" stroke-width="4.800" stroke-linecap="round"/><path d="M958 841.800H1150" stroke="#a8a8e0" stroke-width="0.800" stroke-dasharray="9 3"/><path d="M1204 659.800H1299" stroke="#c86464" stroke-width="2.600"/><path d="M1249.500 661V840M1204 749.500H1294" stroke="#c85a5a" stroke-width="1.200" fill="none"/><path d="M1297 659V843" stroke="#c86464" stroke-width="5.800"/><path d="M1297 677.6V696.4M1297 713.6V732.4M1297 751.2V770M1297 787.2V806M1297 824.9V840" stroke="#c89696" stroke-width="4.6" fill="none"/><path d="M1204 842H1299" stroke="#c86464" stroke-width="4.400"/><rect x="1203.8" y="839.800" width="19.0" height="4.400" rx="2.200" fill="#7878c0" stroke="#0000ff" stroke-width="1.500"/><rect x="1240" y="839.800" width="19.5" height="4.400" rx="2.200" fill="#7878c0" stroke="#0000ff" stroke-width="1.500"/><rect x="1277" y="839.800" width="19.40000000000009" height="4.400" rx="2.200" fill="#7878c0" stroke="#0000ff" stroke-width="1.500"/><path d="M1201.300 660.500V842" stroke="#ffdbb7" stroke-width="5.300" stroke-linecap="round"/><path d="M963 869L967 865H1149.800L1146 869Z" fill="#ffdbb7"/><path d="M1146 868.300H1157" stroke="#ffdbb7" stroke-width="1.200"/><path d="M950 659.800H1028" stroke="#00ffff" stroke-width="2.200"/><path d="M952.800 659V841" stroke="#00ffff" stroke-width="6.400"/><path d="M1025.700 659V841" stroke="#00ffff" stroke-width="5.400"/><path d="M988.500 660V840M990.700 660V840M956 749.400H1023" stroke="#00ffff" stroke-width="1.300" fill="none"/><path d="M1029 659V679M1029 696V714M1029 732V751M1029 770V788M1029 806V826" stroke="#00ffff" stroke-width="4" fill="none"/><path d="M949.3 677.6V696.4M949.3 713.6V732.4M949.3 751.2V770M949.3 787.2V806M949.3 824.9V840" stroke="#00ffff" stroke-width="3" fill="none"/><path d="M956 839.800H1023" stroke="#00ffff" stroke-width="1.600"/><path d="M966.600 841.500H980.500M995.400 841.500H1009.200" stroke="#00ffff" stroke-width="4.400"/><path d="M863.500 865.300V902.500H899.600" stroke="#5c6066" stroke-width="1" fill="none"/></svg><div class="t" style="left:866.4px;top:850.4px;font-size:17px;line-height:20px;letter-spacing:-0.90px;color:#55585e;">z</div><div class="t" style="left:903.4px;top:883.6px;font-size:17px;line-height:20px;letter-spacing:-0.90px;color:#55585e;">y</div><div class="r" style="left:819px;top:589px;width:74px;height:23px;background:#cdd1da;clip-path:polygon(0 0,100% 0,100% 19px,70px 100%,0 100%)"></div><div class="t" style="left:827.5px;top:590.7px;font-size:15px;line-height:18px;letter-spacing:0.03px;color:#55585e;font-weight:bold;">Droite</div><div class="r" style="left:879.0px;top:592px;width:1px;height:19px;background:#666;"></div><svg class="r" style="left:881.0px;top:597.5px" width="9" height="6" viewBox="0 0 9 6"><path d="M0 0H9L4.500 5.500Z" fill="#5a5d63"/></svg>
<div class="r" style="left:1564px;top:223px;width:1px;height:724px;background:#c3cbe1;"></div>
<div class="r" style="left:65px;top:946px;width:1500px;height:1px;background:#c3cbe1;"></div>
<div class="r" style="left:0px;top:0px;width:1920px;height:52px;background:#fff;"></div>
<div class="r" style="left:0px;top:52px;width:1920px;height:5px;background:linear-gradient(#dfe0e5,#e9ebf0);"></div>
<svg class="r" style="left:2px;top:4px" width="20" height="20" viewBox="0 0 30 30"><rect width="30" height="30" fill="#0a0a0a"/><path d="M0 0L8.500 0.700L11.500 5L13.500 9.500L14.500 11L16.500 14.500L19 15.500L21.500 14.500L20 17.500L24 17L27 15L30 12.500V16L26 19.500L22.500 23L21.500 27L19 28.500L17 28L14.500 25.500L10 23L7.500 21.500L6.500 22L3.500 17.500L0 15Z" fill="#ddd"/><path d="M5.700 0Q5.600 6.500 2.400 11.200" fill="none" stroke="#000" stroke-width="2.600" stroke-linecap="round"/><path d="M13 10.800Q9 12.500 5.700 14.600L7.200 21.600" fill="none" stroke="#000" stroke-width="1.400"/><path d="M8.300 16.300L10 17L10.800 18.600L12.200 19L15.500 18.200L13.600 19.300L12.400 22L8.400 20.400Z" fill="#000"/><path d="M21.800 14.300Q21.300 16.500 19.600 17.900" fill="none" stroke="#000" stroke-width="2" stroke-linecap="round"/><path d="M20 3L27 1L22 9Z" fill="#666"/></svg>
<div class="t" style="left:27.5px;top:5.7px;font-size:15px;line-height:18px;letter-spacing:-0.11px;color:#000;">photophore Raziel 001 (12 Mo) - Rhinoceros 7 Evaluation (38 jours restants)</div>
<svg class="r" style="left:1750px;top:0" width="170" height="28" viewBox="0 0 170 28" fill="none" stroke="#000" stroke-width="1.1"><path d="M15 13.5H27"/><rect x="73.5" y="10.5" width="9" height="9"/><path d="M75.5 10.5V8.5H84.5V17.5H82.5"/><path d="M132 8L143.7 19.7M143.7 8L132 19.7"/></svg>
<div class="t" style="left:7.5px;top:32.6px;font-size:15px;line-height:18px;letter-spacing:-0.36px;color:#000;">Fichier</div>
<div class="t" style="left:64.0px;top:32.6px;font-size:15px;line-height:18px;letter-spacing:0.16px;color:#000;">Édition</div>
<div class="t" style="left:125.0px;top:32.6px;font-size:15px;line-height:18px;letter-spacing:-0.38px;color:#000;">Vue</div>
<div class="t" style="left:164.0px;top:32.6px;font-size:15px;line-height:18px;letter-spacing:-0.20px;color:#000;">Courbe</div>
<div class="t" style="left:226.0px;top:32.6px;font-size:15px;line-height:18px;letter-spacing:-0.39px;color:#000;">Surface</div>
<div class="t" style="left:289.0px;top:32.6px;font-size:15px;line-height:18px;letter-spacing:-0.38px;color:#000;">SubD</div>
<div class="t" style="left:339.0px;top:32.6px;font-size:15px;line-height:18px;letter-spacing:0.05px;color:#000;">Solide</div>
<div class="t" style="left:395.0px;top:32.6px;font-size:15px;line-height:18px;letter-spacing:0.27px;color:#000;">Maillage</div>
<div class="t" style="left:467.0px;top:32.6px;font-size:15px;line-height:18px;letter-spacing:-0.17px;color:#000;">Cote</div>
<div class="t" style="left:512.0px;top:32.6px;font-size:15px;line-height:18px;letter-spacing:-0.19px;color:#000;">Transformer</div>
<div class="t" style="left:605.0px;top:32.6px;font-size:15px;line-height:18px;letter-spacing:-0.06px;color:#000;">Outils</div>
<div class="t" style="left:657.0px;top:32.6px;font-size:15px;line-height:18px;letter-spacing:-0.34px;color:#000;">Analyse</div>
<div class="t" style="left:722.0px;top:32.6px;font-size:15px;line-height:18px;letter-spacing:-0.44px;color:#000;">Rendu</div>
<div class="t" style="left:778.0px;top:32.6px;font-size:15px;line-height:18px;letter-spacing:-0.70px;color:#000;">Panneaux</div>
<div class="t" style="left:855.0px;top:32.6px;font-size:15px;line-height:18px;letter-spacing:-1.34px;color:#000;">?</div>
<div class="r" style="left:9px;top:57px;width:1890px;height:62px;background:#fff;"></div>
<div class="r" style="left:1899px;top:57px;width:19px;height:62px;background:#f0f0f0;"></div>
<svg class="r" style="left:1899px;top:57px" width="19" height="62" viewBox="0 0 19 62" fill="none" stroke="#555" stroke-width="1.6"><path d="M5 13L9.5 8.5L14 13"/><path d="M5 49L9.5 53.5L14 49"/></svg>
<div class="r" style="left:87px;top:57px;width:5px;height:1.2px;background:#444;"></div>
<div class="r" style="left:305px;top:57px;width:2px;height:1.2px;background:#444;"></div>
<div class="r" style="left:341px;top:57px;width:2px;height:1.2px;background:#444;"></div>
<div class="r" style="left:434px;top:57px;width:2px;height:1.2px;background:#444;"></div>
<div class="r" style="left:476px;top:57px;width:2px;height:1.2px;background:#444;"></div>
<div class="t" style="left:10.5px;top:80.8px;font-size:15px;line-height:18px;letter-spacing:-0.04px;color:#000;">Fichier « C:\Users\onlfa\Documents\photophore Raziel 001.3dm » lu correctement</div>
<div class="t" style="left:10.5px;top:100.4px;font-size:15px;line-height:18px;letter-spacing:-0.18px;color:#000;">Création des maillages... Appuyer sur Échap pour annuler</div>
<div class="r" style="left:9px;top:119px;width:1909px;height:1px;background:#b9c3dc;"></div>
<div class="r" style="left:9px;top:120px;width:1909px;height:23px;background:#fff;"></div>
<div class="t" style="left:10.5px;top:121.6px;font-size:15px;line-height:18px;letter-spacing:-0.35px;color:#000;font-weight:bold;">Commande:</div>
<div class="r" style="left:1900px;top:121px;width:18px;height:10px;background:#f4f4f4;border:1px solid #adadad;box-sizing:border-box"></div>
<div class="r" style="left:1900px;top:132px;width:18px;height:10px;background:#f4f4f4;border:1px solid #adadad;box-sizing:border-box"></div>
<svg class="r" style="left:1900px;top:121px" width="18" height="21" viewBox="0 0 18 21"><path d="M5.2 7L9 3.2L12.8 7Z M5.2 14L9 17.8L12.8 14Z" fill="#000"/></svg>
<div class="r" style="left:4px;top:57px;width:1px;height:86px;background:#c3cbe0;"></div>
<div class="r" style="left:6px;top:57px;width:1px;height:86px;background:#c3cbe0;"></div>
<div class="r" style="left:4px;top:151px;width:1px;height:65px;background:#c3cbe0;"></div>
<div class="r" style="left:6px;top:151px;width:1px;height:65px;background:#c3cbe0;"></div>
<div class="r" style="left:2px;top:146px;width:1916px;height:1px;background:#d3d9e8;"></div>
<div class="r" style="left:99px;top:174px;width:1819px;height:1px;background:#bcc7de;"></div>
<svg class="r" style="left:8px;top:151px" width="93" height="25" viewBox="0 0 93 25" fill="none" stroke="#bcc7de" stroke-width="1"><path d="M1.5 8L7 1.5H88.5Q91.5 1.5 91.5 4.5V23.5"/></svg>
<div class="t" style="left:23.0px;top:154.6px;font-size:15px;line-height:18px;letter-spacing:-0.11px;color:#222;">Standard</div>
<div class="t" style="left:113.0px;top:154.6px;font-size:15px;line-height:18px;letter-spacing:-0.73px;color:#222;">PlansC</div>
<div class="t" style="left:186.0px;top:154.6px;font-size:15px;line-height:18px;letter-spacing:0.10px;color:#222;">Définir la vue</div>
<div class="t" style="left:305.0px;top:154.6px;font-size:15px;line-height:18px;letter-spacing:0.25px;color:#222;">Affichage</div>
<div class="t" style="left:398.0px;top:154.6px;font-size:15px;line-height:18px;letter-spacing:-0.02px;color:#222;">Sélection</div>
<div class="t" style="left:489.0px;top:154.6px;font-size:15px;line-height:18px;letter-spacing:0.04px;color:#222;">Disposition des fenêtres</div>
<div class="t" style="left:679.0px;top:154.6px;font-size:15px;line-height:18px;letter-spacing:0.17px;color:#222;">Visibilité</div>
<div class="t" style="left:765.0px;top:154.6px;font-size:15px;line-height:18px;letter-spacing:-0.01px;color:#222;">Transformer</div>
<div class="t" style="left:874.0px;top:154.6px;font-size:15px;line-height:18px;letter-spacing:-0.24px;color:#222;">Courbes</div>
<div class="t" style="left:959.0px;top:154.6px;font-size:15px;line-height:18px;letter-spacing:-0.40px;color:#222;">Surfaces</div>
<div class="t" style="left:1044.0px;top:154.6px;font-size:15px;line-height:18px;letter-spacing:-0.17px;color:#222;">Solides</div>
<div class="t" style="left:1121.0px;top:154.6px;font-size:15px;line-height:18px;letter-spacing:-0.03px;color:#222;">Outils pour les SubD</div>
<div class="t" style="left:1287.0px;top:154.6px;font-size:15px;line-height:18px;letter-spacing:0.18px;color:#222;">Maillages</div>
<div class="t" style="left:1380.0px;top:154.6px;font-size:15px;line-height:18px;letter-spacing:-0.24px;color:#222;">Rendu</div>
<div class="t" style="left:1452.0px;top:154.6px;font-size:15px;line-height:18px;letter-spacing:0.08px;color:#222;">Mise en plan</div>
<div class="t" style="left:1566.0px;top:154.6px;font-size:15px;line-height:18px;letter-spacing:-0.12px;color:#222;">Nouveautés dans la V7</div>
<svg class="r" style="left:0;top:0" width="1920" height="1080" viewBox="0 0 1920 1080" fill="none" stroke="#9a9a9a" stroke-width="1"><polygon points="1917.97,161.31 1917.97,162.69 1916.22,163.58 1915.82,164.57 1916.41,166.44 1915.44,167.41 1913.57,166.82 1912.58,167.22 1911.69,168.97 1910.31,168.97 1909.42,167.22 1908.43,166.82 1906.56,167.41 1905.59,166.44 1906.18,164.57 1905.78,163.58 1904.03,162.69 1904.03,161.31 1905.78,160.42 1906.18,159.43 1905.59,157.56 1906.56,156.59 1908.43,157.18 1909.42,156.78 1910.31,155.03 1911.69,155.03 1912.58,156.78 1913.57,157.18 1915.44,156.59 1916.41,157.56 1915.82,159.43 1916.22,160.42"/><circle cx="1911" cy="162" r="2.10"/></svg>
<svg class="r" style="left:0;top:0" width="1920" height="1080" viewBox="0 0 1920 1080">
<defs>
<linearGradient id="paper" x1="0" y1="0" x2="1" y2="1"><stop offset="0" stop-color="#ffffff"/><stop offset="1" stop-color="#d2d2d2"/></linearGradient>
<linearGradient id="fold" x1="0" y1="0" x2="0" y2="1"><stop offset="0" stop-color="#ffe680"/><stop offset="1" stop-color="#f5b400"/></linearGradient>
<linearGradient id="flop" x1="0" y1="0" x2="0" y2="1"><stop offset="0" stop-color="#d9cc7a"/><stop offset="1" stop-color="#a8983c"/></linearGradient>
<radialGradient id="sphg" cx="0.380" cy="0.300" r="0.800"><stop offset="0" stop-color="#ffffff"/><stop offset="0.500" stop-color="#d2d2d2"/><stop offset="0.820" stop-color="#8a8a8a"/><stop offset="1" stop-color="#2e2e2e"/></radialGradient>
<radialGradient id="sphb" cx="0.360" cy="0.280" r="0.800"><stop offset="0" stop-color="#8fb2ff"/><stop offset="0.350" stop-color="#2550e0"/><stop offset="1" stop-color="#07155e"/></radialGradient>
<radialGradient id="sphb2" cx="0.360" cy="0.300" r="0.800"><stop offset="0" stop-color="#c6d0ff"/><stop offset="0.500" stop-color="#6f84ea"/><stop offset="1" stop-color="#3346b0"/></radialGradient>
<radialGradient id="help" cx="0.400" cy="0.300" r="0.800"><stop offset="0" stop-color="#7d92f0"/><stop offset="1" stop-color="#1a2ca0"/></radialGradient>
<radialGradient id="bulbg" cx="0.400" cy="0.300" r="0.800"><stop offset="0" stop-color="#f4f4f4"/><stop offset="1" stop-color="#8e8e8e"/></radialGradient>
<radialGradient id="ghg" cx="0.400" cy="0.350" r="0.750"><stop offset="0" stop-color="#cfe8b8"/><stop offset="0.700" stop-color="#9bc47e"/><stop offset="1" stop-color="#5d7a4c"/></radialGradient>
<linearGradient id="blu" x1="0" y1="0" x2="1" y2="1"><stop offset="0" stop-color="#93a4ff"/><stop offset="1" stop-color="#3c50d0"/></linearGradient>
<linearGradient id="org" x1="0" y1="0" x2="0" y2="1"><stop offset="0" stop-color="#ffd21a"/><stop offset="1" stop-color="#ff8a00"/></linearGradient>
<linearGradient id="lockg" x1="0" y1="0" x2="0" y2="1"><stop offset="0" stop-color="#f6f6f6"/><stop offset="1" stop-color="#a9a9a9"/></linearGradient>
<linearGradient id="gry" x1="0" y1="0" x2="1" y2="1"><stop offset="0" stop-color="#e8e8e8"/><stop offset="1" stop-color="#8c8c8c"/></linearGradient>
</defs>
<g transform="translate(22.5,190)"><path d="M-7.500 -10H2.500L7.500 -5V9.500H-7.500Z" fill="url(#paper)" stroke="#111" stroke-width="1.300"/><path d="M2.500 -10V-5H7.500" fill="none" stroke="#111" stroke-width="1"/></g>
<g transform="translate(51,190)"><path d="M-9.500 8.500V-5.500Q-9.500 -7 -8 -7H-3L-1.500 -5H5.500V-1" fill="#f6c636" stroke="#7a5a00" stroke-width="1.100"/><path d="M-9.500 8.500L-5.500 -1.500H10.500L6.500 8.500Z" fill="url(#fold)" stroke="#7a5a00" stroke-width="1.100"/></g>
<g transform="translate(79,190)"><rect x="-10" y="-10" width="20" height="20" rx="2" fill="url(#flop)" stroke="#4a4210" stroke-width="1.200"/><rect x="-6.500" y="-9" width="13" height="8.500" fill="#f4f4f4" stroke="#777" stroke-width="0.700"/><rect x="-5.500" y="3" width="10" height="6.500" fill="#bdbdbd" stroke="#444" stroke-width="0.800"/><rect x="-3.800" y="4" width="2.500" height="4.800" fill="#8c7c1c"/></g>
<path d="M92 202.5H86.4L92 196.9Z" fill="#6a6a6a"/>
<g transform="translate(106.5,190)"><path d="M-5.500 -2L-3.500 -10H7L5 -2Z" fill="#fafafa" stroke="#222" stroke-width="1"/><path d="M-10 -1Q-10 -3 -8 -3H6L10 -1V5L6.500 9H-9Q-10.500 9 -10.500 7.500Z" fill="#e9e9e9" stroke="#111" stroke-width="1.200"/><path d="M6 -3L10 -6V2L6 5Z" fill="#555" stroke="#111" stroke-width="0.800"/><path d="M-10 2H6.500M-10 5.500H6.500" stroke="#111" stroke-width="1.100"/><rect x="-1" y="-7.500" width="3.500" height="2.500" fill="#bbb"/></g>
<g transform="translate(137,190)"><path d="M-8.500 -9H5.500V5.500L1.500 9.500H-8.500Z" fill="url(#paper)" stroke="#111" stroke-width="1.200"/><path d="M5.500 5.500H1.500V9.500" fill="none" stroke="#111" stroke-width="1"/><path d="M-2 -7.500L3 -11.500H9.500V-6.500H4L0 -3.500Z" fill="#bdbdbd" stroke="#333" stroke-width="0.900"/><rect x="8" y="-11.500" width="2.500" height="5" fill="#111"/></g>
<g transform="translate(163,190)"><path d="M-5 -9.500L3.500 5M5 -9.500L-3.500 5" stroke="#222" stroke-width="1.300" fill="none"/><ellipse cx="-5" cy="7" rx="2" ry="3.200" transform="rotate(28 -5 7)" fill="none" stroke="#9a9a9a" stroke-width="1.100"/><ellipse cx="5" cy="7" rx="2" ry="3.200" transform="rotate(-28 5 7)" fill="none" stroke="#9a9a9a" stroke-width="1.100"/></g>
<g transform="translate(191.5,190)"><path d="M-7.500 -10H-1L2 -7V2H-7.500Z" fill="url(#paper)" stroke="#111" stroke-width="1.100"/><path d="M-3 -4H3.500L7 -0.500V9.500H-3Z" fill="url(#paper)" stroke="#111" stroke-width="1.100"/></g>
<g transform="translate(219,190)"><rect x="-6.500" y="-8.500" width="13" height="17.500" rx="2.200" fill="#fbe88a" stroke="#3a3208" stroke-width="1.300"/><rect x="-3" y="-10" width="6" height="3.200" rx="1.500" fill="#f2f2f2" stroke="#222" stroke-width="1"/></g>
<g transform="translate(246.5,190)"><path d="M8.500 -2.500C5.500 -8 -0.500 -8.500 -4.500 -5L-3.500 -1.500C0 -5 4 -4.500 5.500 -1.500Z" fill="#444" stroke="#111" stroke-width="0.600"/><path d="M-9.500 4.500L-7.500 -5.500L-1 2Z" fill="#111"/></g>
<path d="M260 202.5H254.4L260 196.9Z" fill="#6a6a6a"/>
<g transform="translate(273,190)"><path d="M-6.500 1L-8.500 -2.500Q-9.500 -4.500 -8 -4.500Q-6.500 -4.500 -4.500 -1.500V-7.500Q-4.500 -9 -3.300 -9Q-2.200 -9 -2.200 -7.500V-9.500Q-2.200 -11 -1 -11Q0.200 -11 0.200 -9.500V-8.500Q0.200 -10 1.400 -10Q2.600 -10 2.600 -8.500V-6.500Q2.600 -8 3.800 -8Q5 -8 5 -6.500V2Q5 5 3.500 7V10H-3.500V7Q-5 4 -6.500 1Z" fill="#fafafa" stroke="#111" stroke-width="1"/><path d="M-2.200 -7.500V-2M0.200 -8.500V-2M2.600 -6.500V-2" stroke="#111" stroke-width="0.800"/></g>
<g transform="translate(303,190)"><ellipse cx="0" cy="0" rx="10.500" ry="3.800" fill="none" stroke="#666" stroke-width="0.900"/><ellipse cx="0" cy="0" rx="3.300" ry="10.500" fill="none" stroke="#666" stroke-width="0.900"/><path d="M1.500 -4L5 -0.500H-0.500Z M-4.500 3L-1.500 0.500V5Z" fill="#111"/><path d="M-2.500 2.500L2.500 -1.500" stroke="#111" stroke-width="1"/></g>
<g transform="translate(331,190)"><circle cx="3" cy="-3.500" r="5.800" fill="#f6f6f6" stroke="#111" stroke-width="1"/><path d="M-1.500 1L-8.500 8" stroke="#111" stroke-width="2"/><path d="M0.500 -4.500H5.500M3 -7V-2M0.800 -0.800H5.200" stroke="#111" stroke-width="0.900"/></g>
<g transform="translate(359,190)"><rect x="-4.500" y="-9.500" width="14" height="12" fill="none" stroke="#111" stroke-width="1" stroke-dasharray="2 1.500"/><circle cx="-0.500" cy="0" r="5.800" fill="#f6f6f6" stroke="#111" stroke-width="1"/><path d="M-4.500 4.500L-9.500 9.500" stroke="#111" stroke-width="2"/><path d="M-3.500 2H2.500" stroke="#777" stroke-width="0.800" stroke-dasharray="1.500 1"/></g>
<g transform="translate(387,190)"><path d="M-10 -10H-6L-10 -6Z M10 -10V-6L6 -10Z M-10 10V6L-6 10Z M10 10H6L10 6Z" fill="#111"/><circle cx="1" cy="-1.500" r="5.800" fill="#f6f6f6" stroke="#111" stroke-width="1"/><path d="M-3 2.500L-8 7.500" stroke="#111" stroke-width="2"/></g>
<g transform="translate(415.5,190)"><circle cx="2.500" cy="-2" r="7.500" fill="#f6f6f6" stroke="#555" stroke-width="0.900"/><circle cx="4" cy="-4" r="3" fill="#f4dc1a" stroke="#8a7a00" stroke-width="0.600"/><circle cx="0.800" cy="0" r="2.600" fill="#f4dc1a" stroke="#8a7a00" stroke-width="0.600"/><path d="M-3 3.500L-9 9" stroke="#111" stroke-width="2"/></g>
<g transform="translate(443,190)"><path d="M9 -5C5 -9.500 -0.500 -9 -3.500 -6.500L-2.500 -3.500C0.500 -6 4.500 -6 6.500 -3Z" fill="#555" stroke="#111" stroke-width="0.600"/><path d="M-9.500 -1.500L-7 -9L-1.500 -3.500Z" fill="#111"/><circle cx="1.500" cy="2" r="4.200" fill="#f6f6f6" stroke="#111" stroke-width="1"/><path d="M-1.500 5.500L-6 9.500" stroke="#111" stroke-width="1.800"/></g>
<path d="M456 202.5H450.4L456 196.9Z" fill="#6a6a6a"/>
<g transform="translate(470.5,190)"><rect x="-10" y="-9.500" width="20" height="18.500" fill="#bdbdbd" stroke="#111" stroke-width="1.300"/><path d="M0 -9.500V9M-10 0H10" stroke="#111" stroke-width="1.300"/><rect x="1" y="-9" width="4" height="1.200" fill="#2038c8"/></g>
<path d="M484 202.5H478.4L484 196.9Z" fill="#6a6a6a"/>
<g transform="translate(498.5,190)"><path d="M-10 4H10.500" stroke="#9a9a9a" stroke-width="0.800"/><path d="M-9.500 2Q-10 -1.500 -6 -2L-2 -2.500L-0.500 -6H5.500L7 -2.500Q9.500 -2 9.500 1V2.500H-9.500Z" fill="#e81212" stroke="#8a0000" stroke-width="0.600"/><path d="M0.500 -5H4.800L5.800 -2.500H-0.500Z" fill="#fff"/><circle cx="-5.500" cy="2.500" r="2" fill="#111"/><circle cx="5.500" cy="2.500" r="2" fill="#111"/><circle cx="-5.500" cy="2.500" r="0.800" fill="#bbb"/><circle cx="5.500" cy="2.500" r="0.800" fill="#bbb"/></g>
<path d="M512 202.5H506.4L512 196.9Z" fill="#6a6a6a"/>
<g transform="translate(527,190)"><path d="M-11 3.500L-2 -7L11 -2.500L4 9Z M-8 0L7 5M-5 -3.500L9 1.500M-6.500 6L2.500 -5.500M-1.500 7.500L7 -4" fill="none" stroke="#b5b5b5" stroke-width="0.800"/><path d="M0 0L3 -4.500" stroke="#1c9a1c" stroke-width="1.300"/><path d="M0 0L7.500 3" stroke="#e01515" stroke-width="1.300"/><rect x="-1.800" y="-1.300" width="3.300" height="3.300" fill="#fff" stroke="#111" stroke-width="1"/></g>
<path d="M540 202.5H534.4L540 196.9Z" fill="#6a6a6a"/>
<g transform="translate(555.5,190)"><circle cx="-1" cy="0" r="9" fill="none" stroke="#777" stroke-width="0.900"/><path d="M0.500 0H10" stroke="#111" stroke-width="0.900"/><circle cx="-1" cy="0" r="1.600" fill="#fff" stroke="#111" stroke-width="0.900"/></g>
<path d="M568 202.5H562.4L568 196.9Z" fill="#6a6a6a"/>
<g transform="translate(583,190)"><circle cx="-4.500" cy="-3.500" r="3" fill="#f7d41a" stroke="#a05a00" stroke-width="0.900"/><rect x="1" y="-4.500" width="6" height="6" fill="#f7e81a" stroke="#a05a00" stroke-width="0.900"/><path d="M-2.500 2.500L0.500 7.500H-5.500Z" fill="none" stroke="#b0521a" stroke-width="0.900"/><path d="M6 -10.500H10V-7M-11 7V10.500H-7" fill="none" stroke="#111" stroke-width="1"/></g>
<path d="M596 202.5H590.4L596 196.9Z" fill="#6a6a6a"/>
<g transform="translate(611,190)"><path d="M0 -10.500C4.500 -10.500 7 -7.500 7 -4C7 -1 4.500 1 3.500 3.500L3 6.500H-3L-3.500 3.500C-4.500 1 -7 -1 -7 -4C-7 -7.500 -4.500 -10.500 0 -10.500Z" fill="url(#bulbg)" stroke="#555" stroke-width="0.900"/><path d="M-2.800 6.500H2.800V8.500Q0 11 -2.800 8.500Z" fill="#9a9a9a" stroke="#444" stroke-width="0.800"/></g>
<path d="M624 202.5H618.4L624 196.9Z" fill="#6a6a6a"/>
<g transform="translate(639,190)"><path d="M-3.800 -1V-5.500A3.800 3.800 0 0 1 3.800 -5.500V-1" fill="none" stroke="#111" stroke-width="1.700"/><rect x="-6" y="-1.500" width="12" height="10" rx="1.300" fill="url(#lockg)" stroke="#111" stroke-width="1.200"/><path d="M-4 2H4M-4 4.500H4M-4 7H4" stroke="#777" stroke-width="0.800"/></g>
<path d="M652 202.5H646.4L652 196.9Z" fill="#6a6a6a"/>
<g transform="translate(667,190)"><path d="M-9.500 -8.500L9.500 -4.500V4.500L-2 9.500L-9.500 2Z" fill="#1a237e" stroke="#111" stroke-width="1" stroke-linejoin="round"/><path d="M-9.500 -8.500L9.500 -4.500L-1.500 1.500Z" fill="#ff6a2a"/><path d="M-9.500 -8.500L-1.500 1.500V4L-9.500 -5.500Z" fill="#e02010"/><path d="M-1.500 1.500L9.500 -4.500V-2L-1.500 4Z" fill="#e02010"/><path d="M-9.500 -5.500L-1.500 4V6.500L-9.500 -2.500Z" fill="#fff"/><path d="M-1.500 4L9.500 -2V1L-1.500 6.500Z" fill="#d6d6d6"/><path d="M-9.500 -2.500L-1.500 6.500V9.300L-9.500 1.500Z" fill="#2436b8"/><path d="M-1.500 6.500L9.500 1V4.500L-1.500 9.300Z" fill="#1a237e"/></g>
<path d="M680 202.5H674.4L680 196.9Z" fill="#6a6a6a"/>
<g transform="translate(723,190)"><circle cx="0" cy="0" r="9.200" fill="url(#sphg)" stroke="#222" stroke-width="0.700"/><path d="M0 -9.200Q-2.500 0 0 9.200M-9.200 0.500Q0 3.500 9.200 0.500" fill="none" stroke="#333" stroke-width="0.900"/></g>
<g transform="translate(751,190)"><rect x="-12" y="-12" width="24" height="24" fill="#d9dbe0"/><path d="M-11 -11H12M-11 -8H12M-11 -5H12M-11 -2H12M-11 1H12M-11 4H12M-11 7H12M-11 10H12" stroke="#e9ebf0" stroke-width="1.200"/><path d="M-11 -11V12M-8 -11V12M-5 -11V12M-2 -11V12M1 -11V12M4 -11V12M7 -11V12M10 -11V12" stroke="#e9ebf0" stroke-width="1.200"/><circle cx="0" cy="0" r="9.200" fill="url(#sphg)" stroke="#222" stroke-width="0.700"/><path d="M0 -9.200Q-2.500 0 0 9.200M-9.200 0.500Q0 3.500 9.200 0.500" fill="none" stroke="#333" stroke-width="0.900"/></g>
<path d="M764 202.5H758.4L764 196.9Z" fill="#6a6a6a"/>
<g transform="translate(779,190)"><ellipse cx="2" cy="8" rx="9" ry="2.500" fill="#000" opacity="0.180"/><circle cx="0" cy="-0.500" r="9.200" fill="url(#sphb)" stroke="#07103f" stroke-width="0.600"/><ellipse cx="-3.500" cy="-5" rx="2.800" ry="1.800" fill="#fff" opacity="0.850" transform="rotate(-30 -3.500 -5)"/></g>
<path d="M792 202.5H786.4L792 196.9Z" fill="#6a6a6a"/>
<g transform="translate(811.5,190)"><ellipse cx="-4" cy="4" rx="8" ry="5" fill="#fff" opacity="0.600"/><path d="M-6.500 -6.500L6.500 -10.500L2 2.500Z" fill="url(#org)" stroke="#8a4a00" stroke-width="0.800"/><path d="M-6.500 -6.500L2 2.500L-1 1Z" fill="#fff4d0" stroke="#8a4a00" stroke-width="0.600"/></g>
<path d="M820 202.5H814.4L820 196.9Z" fill="#6a6a6a"/>
<g transform="translate(835,190)"><g fill="#f6dc5a" stroke="#5a3a00" stroke-width="1"><rect x="-2.300" y="-10.800" width="4.600" height="5" rx="1" transform="rotate(0)"/><rect x="-2.300" y="-10.800" width="4.600" height="5" rx="1" transform="rotate(45)"/><rect x="-2.300" y="-10.800" width="4.600" height="5" rx="1" transform="rotate(90)"/><rect x="-2.300" y="-10.800" width="4.600" height="5" rx="1" transform="rotate(135)"/><rect x="-2.300" y="-10.800" width="4.600" height="5" rx="1" transform="rotate(180)"/><rect x="-2.300" y="-10.800" width="4.600" height="5" rx="1" transform="rotate(225)"/><rect x="-2.300" y="-10.800" width="4.600" height="5" rx="1" transform="rotate(270)"/><rect x="-2.300" y="-10.800" width="4.600" height="5" rx="1" transform="rotate(315)"/><circle cx="0" cy="0" r="7.500"/></g><circle cx="0" cy="0" r="7" fill="#f6dc5a"/><path d="M-7 4Q0 9 7 4" fill="none" stroke="#d8821a" stroke-width="2"/><rect x="-2.300" y="-4.500" width="4.600" height="7.500" rx="1.500" fill="#9a9a9a" stroke="#333" stroke-width="0.800"/></g>
<path d="M848 202.5H842.4L848 196.9Z" fill="#6a6a6a"/>
<g transform="translate(863,190)"><path d="M-10.500 -10.500H-2.500M-10.500 0.500H-1.500M-1.500 1V9.500M9.500 1V9.500M-9 -8.500V-1.500M1 8H7.500" fill="none" stroke="#111" stroke-width="1.100"/><path d="M-9 -9.500L-10.500 -7H-7.500Z M-9 -0.500L-10.500 -3H-7.500Z M0 8L2.500 6.500V9.500Z M8.500 8L6 6.500V9.500Z" fill="#111"/><circle cx="-2" cy="-10.500" r="1.300" fill="#fff" stroke="#111" stroke-width="0.900"/><circle cx="-1.500" cy="0.500" r="1.300" fill="#fff" stroke="#111" stroke-width="0.900"/><circle cx="9.500" cy="0.500" r="1.300" fill="#fff" stroke="#111" stroke-width="0.900"/></g>
<path d="M876 202.5H870.4L876 196.9Z" fill="#6a6a6a"/>
<g transform="translate(891,190)"><circle cx="0" cy="0" r="11.200" fill="url(#ghg)" stroke="#666" stroke-width="1.400"/><path d="M-3 -10.500V-1M-3 -3L8 -7.500M-2 2L9 5" stroke="#dff0d0" stroke-width="0.800" fill="none"/><path d="M-8 3Q-6.500 -1.500 -3.500 -1L-1.500 -3L0 -1.500L-1.500 0.500Q1 2.500 -0.500 5L2 8L-0.500 8.500L-3 6L-7 8.500Z" fill="#333"/></g>
<path d="M904 202.5H898.4L904 196.9Z" fill="#6a6a6a"/>
<g transform="translate(919,190)"><circle cx="0" cy="0" r="9.800" fill="url(#help)"/></g>
<path d="M931 202.5H925.4L931 196.9Z" fill="#6a6a6a"/>
<path d="M708 202.5H702.4L708 196.9Z" fill="#6a6a6a"/>
<g transform="translate(15,245.0)"><path d="M-5 -8V6L-2 3L0.500 8.500L2.800 7.500L0.500 2.500H4.500Z" fill="#fff" stroke="#111" stroke-width="1"/></g>
<g transform="translate(42.5,245.0)"><circle cx="0" cy="0" r="1.8" fill="#fff" stroke="#111" stroke-width="0.9"/></g>
<path d="M55.5 258.0H50.5L55.5 253.0Z" fill="#6a6a6a"/>
<g transform="translate(15,273.1)"><path d="M-8 8L-3 -5L7 5" fill="none" stroke="#222" stroke-width="0.900"/><circle cx="-8" cy="8" r="1.4" fill="#fff" stroke="#111" stroke-width="0.9"/><circle cx="-3" cy="-5" r="1.4" fill="#fff" stroke="#111" stroke-width="0.9"/><circle cx="7" cy="5" r="1.4" fill="#fff" stroke="#111" stroke-width="0.9"/></g>
<g transform="translate(42.5,273.1)"><path d="M-8 -5.500H-1Q8 -5.500 8 0.500Q8 6.500 -1 6.500H-8" fill="none" stroke="#222" stroke-width="0.900"/><rect x="-9.5" y="-7.0" width="3" height="3" fill="#fff" stroke="#111" stroke-width="0.9"/><rect x="4.5" y="-10.0" width="3" height="3" fill="#fff" stroke="#111" stroke-width="0.9"/><rect x="-9.5" y="5.0" width="3" height="3" fill="#fff" stroke="#111" stroke-width="0.9"/><rect x="6.5" y="7.0" width="3" height="3" fill="#fff" stroke="#111" stroke-width="0.9"/></g>
<path d="M27.5 286.06H22.5L27.5 281.06Z" fill="#6a6a6a"/>
<path d="M55.5 286.06H50.5L55.5 281.06Z" fill="#6a6a6a"/>
<g transform="translate(15,301.1)"><circle cx="0" cy="0" r="9.500" fill="none" stroke="#444" stroke-width="0.900"/><path d="M0 0L6.500 -6" stroke="#111" stroke-width="1"/><circle cx="0" cy="0" r="1.4" fill="#fff" stroke="#111" stroke-width="0.9"/><circle cx="6.5" cy="-6" r="1.4" fill="#fff" stroke="#111" stroke-width="0.9"/></g>
<g transform="translate(42.5,301.1)"><ellipse cx="0" cy="0" rx="9.500" ry="6.500" fill="none" stroke="#444" stroke-width="0.900"/><path d="M0 -6.500V0H9" stroke="#111" stroke-width="0.900" fill="none"/><rect x="-1.5" y="-8.0" width="3" height="3" fill="#fff" stroke="#111" stroke-width="0.9"/><rect x="-1.5" y="-1.5" width="3" height="3" fill="#fff" stroke="#111" stroke-width="0.9"/><rect x="7.5" y="-1.5" width="3" height="3" fill="#fff" stroke="#111" stroke-width="0.9"/></g>
<path d="M27.5 314.12H22.5L27.5 309.12Z" fill="#6a6a6a"/>
<path d="M55.5 314.12H50.5L55.5 309.12Z" fill="#6a6a6a"/>
<g transform="translate(15,329.2)"><path d="M-6.500 -9Q5 -8 8.500 0L-6.500 8Z" fill="none" stroke="#222" stroke-width="0.900"/><circle cx="-6.5" cy="-9" r="1.4" fill="#fff" stroke="#111" stroke-width="0.9"/><circle cx="8.5" cy="0" r="1.4" fill="#fff" stroke="#111" stroke-width="0.9"/><circle cx="-6.5" cy="8" r="1.4" fill="#fff" stroke="#111" stroke-width="0.9"/></g>
<g transform="translate(42.5,329.2)"><rect x="-8.500" y="-5.500" width="17" height="11" fill="none" stroke="#222" stroke-width="1"/><circle cx="8.5" cy="-5.5" r="1.4" fill="#fff" stroke="#111" stroke-width="0.9"/><circle cx="-8.5" cy="5.5" r="1.4" fill="#fff" stroke="#111" stroke-width="0.9"/></g>
<path d="M27.5 342.18H22.5L27.5 337.18Z" fill="#6a6a6a"/>
<path d="M55.5 342.18H50.5L55.5 337.18Z" fill="#6a6a6a"/>
<g transform="translate(15,357.2)"><path d="M-8.500 0L-4.500 -7.500H4.500L8.500 0L4.500 7.500H-4.500Z" fill="none" stroke="#333" stroke-width="0.900"/><path d="M0 0H8" stroke="#111" stroke-width="0.900"/><circle cx="0" cy="0" r="1.4" fill="#fff" stroke="#111" stroke-width="0.9"/><circle cx="8" cy="0" r="1.4" fill="#fff" stroke="#111" stroke-width="0.9"/></g>
<g transform="translate(42.5,357.2)"><path d="M2 -6.500H8.500V8" fill="none" stroke="#aaa" stroke-width="0.800"/><path d="M-8.500 -6.500H-3Q8.500 -6.500 8.500 8" fill="none" stroke="#111" stroke-width="1.800"/><rect x="-9.5" y="-8.0" width="3" height="3" fill="#fff" stroke="#111" stroke-width="0.9"/><rect x="7.0" y="6.5" width="3" height="3" fill="#fff" stroke="#111" stroke-width="0.9"/></g>
<path d="M27.5 370.24H22.5L27.5 365.24Z" fill="#6a6a6a"/>
<path d="M55.5 370.24H50.5L55.5 365.24Z" fill="#6a6a6a"/>
<g transform="translate(15,385.3)"><path d="M-4 -8.500L8 -9L4.500 7.500L-8.500 3Z" fill="url(#blu)" stroke="#111" stroke-width="1"/><path d="M1.500 -8.500L-2.500 5M-6 -2.500L6.500 -1" stroke="#1a2a8a" stroke-width="0.800"/><rect x="-5.5" y="-10.0" width="3" height="3" fill="#fff" stroke="#111" stroke-width="0.9"/><rect x="6.5" y="-10.5" width="3" height="3" fill="#fff" stroke="#111" stroke-width="0.9"/><rect x="3.0" y="6.0" width="3" height="3" fill="#fff" stroke="#111" stroke-width="0.9"/><rect x="-10.0" y="1.5" width="3" height="3" fill="#fff" stroke="#111" stroke-width="0.9"/></g>
<g transform="translate(42.5,385.3)"><path d="M-8.500 -4.500L-2 -9.500L7 -5.500L2.500 -1Z" fill="#fff" stroke="#111" stroke-width="0.900"/><path d="M-2 -9.500L7 -5.500Q10 -1 9 3.500L2 8.500Q4 2 2.500 -1Z" fill="url(#blu)" stroke="#111" stroke-width="0.900"/><path d="M2 8.500L9 3.500V7L2 11Z" fill="#fff" stroke="#111" stroke-width="0.900"/></g>
<path d="M27.5 398.29999999999995H22.5L27.5 393.29999999999995Z" fill="#6a6a6a"/>
<path d="M55.5 398.29999999999995H50.5L55.5 393.29999999999995Z" fill="#6a6a6a"/>
<g transform="translate(15,413.4)"><path d="M-9 -4L1 -9L9 -5.500V4.500L-1 9.500L-9 5.500Z" fill="#6a80f0" stroke="#111" stroke-width="1"/><path d="M-9 -4L1 -9L9 -5.500L-1 -0.500Z" fill="#a4b2ff"/><path d="M-1 -0.500L9 -5.500V4.500L-1 9.500Z" fill="#3448c8"/><path d="M-9 -4L-1 -0.500L9 -5.500M-1 -0.500V9.500" fill="none" stroke="#111" stroke-width="0.800"/></g>
<g transform="translate(42.5,413.4)"><circle cx="4.500" cy="-4" r="6.800" fill="url(#sphb2)" stroke="#1a2a7a" stroke-width="0.900"/><circle cx="-3.500" cy="3.500" r="6.800" fill="url(#sphb2)" stroke="#1a2a7a" stroke-width="0.900"/><path d="M-10 3.500Q-3.500 6 3 3.500M-3.500 -3Q-5.500 3.500 -3.500 10M-2 -4Q4.500 -1.500 11 -4M4.500 -10.500Q2.500 -4 4.500 2.500" fill="none" stroke="#24348a" stroke-width="0.700"/></g>
<path d="M27.5 426.36H22.5L27.5 421.36Z" fill="#6a6a6a"/>
<path d="M55.5 426.36H50.5L55.5 421.36Z" fill="#6a6a6a"/>
<g transform="translate(15,441.4)"><ellipse cx="0" cy="-8.500" rx="5.500" ry="2.200" fill="none" stroke="#333" stroke-width="0.900"/><path d="M-11 -3Q0 2.500 11 -3V6.500Q0 12 -11 6.500Z" fill="url(#blu)" stroke="#1a2a7a" stroke-width="0.900"/><ellipse cx="0" cy="5" rx="5.500" ry="2.300" fill="#9fb0ff" stroke="#fff" stroke-width="1.300"/></g>
<g transform="translate(42.5,441.4)"><path d="M-2 -9.500Q3.500 -6 10.500 -7.500L5.500 6.500Q-1 9 -10 4.500Z" fill="#7f92f0" stroke="#24348a" stroke-width="0.900"/><path d="M-6 -2.500Q1.500 1.500 8 -0.500M2.500 -7L-2 7.500M-2 -9.500L5.500 6.500M10.500 -7.500L-10 4.500" stroke="#24348a" stroke-width="0.700" fill="none"/></g>
<path d="M27.5 454.41999999999996H22.5L27.5 449.41999999999996Z" fill="#6a6a6a"/>
<path d="M55.5 454.41999999999996H50.5L55.5 449.41999999999996Z" fill="#6a6a6a"/>
<g transform="translate(15,469.5)"><path d="M-9.500 -5.500L-5.500 -7L-6 -9.500Q-3.500 -11 -2.500 -8.500L-3 -8L0.500 -9.500L2 -5.500Q4.500 -7 5.500 -4.500Q5.500 -2.500 3 -3L4 0.500L0 2L-0.500 0Q-3 -1 -3.500 1.500L-2.500 3L-6.500 4.500L-7.500 1Q-10 2 -10.500 -0.500Q-10.500 -2.500 -8.500 -2Z" fill="#f6a81a" stroke="#8a4a00" stroke-width="0.800"/><path d="M-1 2L3 0.500L2.500 -1.500Q5 -3 6 -0.500L5.500 0L9 -1.500L10.500 2.500L8 3Q7 5.500 10 5.500L11 8L7 9.500L6.500 8Q4 7 3.500 9.500L4.500 10.500L1 11.500L-0.500 8Q-3 9 -3.500 6.500Q-3.500 4.500 -1.500 5Z" fill="#fafafa" stroke="#444" stroke-width="0.800"/></g>
<g transform="translate(42.5,469.5)"><path d="M-10.500 10V-6L-6.500 1.500L4.500 -9.500L0.500 2L10 2.500L1.500 6L6 9.500Z" fill="url(#org)" stroke="#c86a00" stroke-width="0.500"/></g>
<g transform="translate(15,497.5)"><path d="M-1 -10H5.500L0.500 3Z" fill="#24389a"/><rect x="-10.500" y="-2" width="10" height="4.500" fill="#fff" stroke="#111" stroke-width="1"/><rect x="0.500" y="1.500" width="9" height="4.500" transform="rotate(45 0.500 1.500)" fill="#fff" stroke="#333" stroke-width="0.900"/></g>
<g transform="translate(42.5,497.5)"><path d="M0 -9.500H6.500L1.500 4Z" fill="#24389a"/><rect x="-9" y="-1.500" width="18" height="5" fill="#fff" stroke="#111" stroke-width="1"/><path d="M3.300 -1.500L1.500 4" stroke="#24389a" stroke-width="1.500"/></g>
<g transform="translate(15,525.6)"><path d="M0 -9A4.500 4.500 0 0 1 4.500 -3A4.500 4.500 0 0 1 3.500 5.500A4.500 4.500 0 0 1 -3.500 5.500A4.500 4.500 0 0 1 -4.500 -3A4.500 4.500 0 0 1 0 -9Z" fill="#111" stroke="#111" stroke-width="2.500"/><circle cx="0" cy="-4.500" r="3.600" fill="#9a9cf0"/><circle cx="-3.800" cy="2" r="3.400" fill="#fff"/><circle cx="3.800" cy="2" r="3.400" fill="#1a1a8a"/></g>
<g transform="translate(42.5,525.6)"><circle cx="0" cy="-6" r="3.700" fill="#9a9cf0" stroke="#5a5cb0" stroke-width="0.700"/><circle cx="-5" cy="3.500" r="3.700" fill="#fff" stroke="#333" stroke-width="0.800"/><circle cx="5.500" cy="3.500" r="3.700" fill="#1a1a8a"/></g>
<path d="M27.5 538.5999999999999H22.5L27.5 533.5999999999999Z" fill="#6a6a6a"/>
<g transform="translate(15,553.7)"><path d="M-9.500 -6Q-5.500 -7 -3 -4.500Q4 0 5.500 10" fill="none" stroke="#111" stroke-width="1.400"/><rect x="-6.5" y="-7.5" width="3" height="3" fill="#fff" stroke="#111" stroke-width="0.9"/><rect x="3.5" y="3.0" width="3" height="3" fill="#fff" stroke="#111" stroke-width="0.9"/></g>
<g transform="translate(42.5,553.7)"><path d="M-9 -9H-1.500L9 0V8" fill="none" stroke="#111" stroke-width="0.900" stroke-dasharray="1.200 1.200"/><path d="M-10 -4.500Q3 -4.500 5 9.500" fill="none" stroke="#111" stroke-width="1.700"/><rect x="-3.0" y="-10.5" width="3" height="3" fill="#fff" stroke="#111" stroke-width="0.9"/><rect x="7.5" y="0.5" width="3" height="3" fill="#fff" stroke="#111" stroke-width="0.9"/></g>
<path d="M55.5 566.66H50.5L55.5 561.66Z" fill="#6a6a6a"/>
<g transform="translate(15,581.7)"><path d="M-7.500 -9.500L7.500 -8L7 -3.500L5 -4L4 -5.500L2 -5.800V6.500L4 8V10L-3.500 9V7L-1.500 6.500V-6.200L-4 -6.500L-5.500 -5L-7.500 -5.500Z" fill="#6a80f0" stroke="#1a2a7a" stroke-width="0.800"/><path d="M-7.500 -9.500L-5.500 -11L9 -9.500L7.500 -8Z" fill="#a4b2ff" stroke="#1a2a7a" stroke-width="0.600"/></g>
<g transform="translate(42.5,581.7)"><path d="M-4 2.500L3 -4.500" stroke="#111" stroke-width="0.900"/><path d="M4 -5.500L0.500 -4.500L3 -2Z" fill="#111"/><rect x="-8.500" y="2" width="6" height="6" fill="#f2f2f2" stroke="#111" stroke-width="1"/><rect x="3.500" y="-10" width="6" height="6" fill="#7f92f0" stroke="#111" stroke-width="1"/></g>
<path d="M55.5 594.72H50.5L55.5 589.72Z" fill="#6a6a6a"/>
<g transform="translate(15,609.8)"><rect x="-8.500" y="-10" width="5.500" height="5.500" fill="#7f92f0" stroke="#111" stroke-width="1"/><rect x="-8.500" y="1.500" width="5.500" height="5.500" fill="#f2f2f2" stroke="#111" stroke-width="1"/><rect x="3" y="-7.500" width="5.500" height="5.500" fill="#7f92f0" stroke="#111" stroke-width="1"/><rect x="-0.500" y="-4" width="5.500" height="5.500" fill="#7f92f0" stroke="#111" stroke-width="1"/><rect x="3.500" y="4" width="5.500" height="5.500" fill="#7f92f0" stroke="#111" stroke-width="1"/></g>
<g transform="translate(42.5,609.8)"><rect x="-10" y="-10" width="5" height="13" fill="#fff" stroke="#111" stroke-width="1"/><rect x="-3" y="3" width="13" height="4.500" transform="rotate(-40 -3 3)" fill="#7f92f0" stroke="#111" stroke-width="1"/><path d="M-3.500 -7.500H2.500V-4.500" fill="none" stroke="#111" stroke-width="0.900"/><path d="M2.500 -2.500L0.800 -5.500H4.200Z" fill="#111"/></g>
<g transform="translate(15,637.8)"><path d="M-9.500 -4.500L0.500 -9.500L9.500 -5.500V5L0.500 10L-9.500 6Z" fill="#6a80f0" stroke="#111" stroke-width="1"/><path d="M-9.500 -4.500L0.500 -9.500L9.500 -5.500L-0.500 -0.500Z" fill="#a4b2ff"/><path d="M-0.500 -0.500L9.500 -5.500V5L0.500 10Z" fill="#3448c8"/><path d="M-3.500 4.500L1 2.500L5 4V8L0.500 10.500L-3.500 8.500Z" fill="#f4f4f4" stroke="#111" stroke-width="0.800"/></g>
<g transform="translate(42.5,637.8)"><path d="M-10 8.500L-5.500 4H10.500L6 8.500Z" fill="#7f92f0" stroke="#1a2a7a" stroke-width="0.900"/><path d="M-5 3V-5M0.500 3V-5M6 3V-5" stroke="#fff" stroke-width="1.700"/><path d="M-5 -9.500L-7.500 -5H-2.500Z M0.500 -9.500L-2 -5H3Z M6 -9.500L3.500 -5H8.500Z" fill="#fff"/><path d="M-8 4H8" stroke="#111" stroke-width="0.800" stroke-dasharray="1.500 1"/></g>
<path d="M27.5 650.8399999999999H22.5L27.5 645.8399999999999Z" fill="#6a6a6a"/>
<path d="M55.5 650.8399999999999H50.5L55.5 645.8399999999999Z" fill="#6a6a6a"/>
<g transform="translate(15,665.9)"><rect x="-9.5" y="-9.5" width="4" height="4" fill="#7f92f0" stroke="#111" stroke-width="1"/><rect x="-9.5" y="-2.5" width="4" height="4" fill="#7f92f0" stroke="#111" stroke-width="1"/><rect x="-9.5" y="4.5" width="4" height="4" fill="#fff" stroke="#111" stroke-width="1"/><rect x="-2.5" y="-9.5" width="4" height="4" fill="#7f92f0" stroke="#111" stroke-width="1"/><rect x="-2.5" y="-2.5" width="4" height="4" fill="#7f92f0" stroke="#111" stroke-width="1"/><rect x="-2.5" y="4.5" width="4" height="4" fill="#7f92f0" stroke="#111" stroke-width="1"/><rect x="4.5" y="-9.5" width="4" height="4" fill="#7f92f0" stroke="#111" stroke-width="1"/><rect x="4.5" y="-2.5" width="4" height="4" fill="#7f92f0" stroke="#111" stroke-width="1"/><rect x="4.5" y="4.5" width="4" height="4" fill="#7f92f0" stroke="#111" stroke-width="1"/></g>
<g transform="translate(42.5,665.9)"><rect x="-4" y="-9.500" width="8" height="4.500" fill="#fff" stroke="#111" stroke-width="1"/><rect x="-2.500" y="-3" width="5" height="4" fill="#fff" stroke="#111" stroke-width="1"/><rect x="-3.500" y="3.500" width="7" height="6" fill="#fff" stroke="#111" stroke-width="1"/><path d="M0 -11.500V11" stroke="#d01010" stroke-width="1.400"/></g>
<path d="M27.5 678.9H22.5L27.5 673.9Z" fill="#6a6a6a"/>
<path d="M55.5 678.9H50.5L55.5 673.9Z" fill="#6a6a6a"/>
<g transform="translate(15,694.0)"><path d="M-10 -6L-5 -8.500V7L-10 5Z" fill="#f2f2f2" stroke="#111" stroke-width="0.900"/><path d="M-5 -8.500L-1.500 -7V7.500L-5 7Z" fill="#c9c9c9" stroke="#111" stroke-width="0.900"/><path d="M-2 -10.500L1 -9.500V-4L-2 -5Z" fill="#fff" stroke="#111" stroke-width="0.800"/><path d="M1.500 -7L8.500 -5.500L4 10L-3 7.500Z" fill="#6a80f0" stroke="#111" stroke-width="0.900"/><path d="M1.500 -7L-1 -8L-5.500 6.500L-3 7.500Z" fill="#a4b2ff" stroke="#111" stroke-width="0.800"/></g>
<g transform="translate(42.5,694.0)"><path d="M-9 1.500L-4 8.500Q1 -2 10 -9.500Q0 -4 -4.500 3.500L-6.500 0Z" fill="#111"/></g>
<path d="M27.5 706.96H22.5L27.5 701.96Z" fill="#6a6a6a"/>
<path d="M55.5 706.96H50.5L55.5 701.96Z" fill="#6a6a6a"/>
<g transform="translate(15,722.0)"><path d="M-10 -3.500L-3 -7L2 -5V5L-5 8L-10 5.500Z" fill="url(#gry)" stroke="#222" stroke-width="0.900"/><path d="M-10 -3.500L-5 -1.500L2 -5M-5 -1.500V8" fill="none" stroke="#222" stroke-width="0.700"/><path d="M4.500 -5.500L10.500 7Q5 11 0 7Z" fill="url(#gry)" stroke="#222" stroke-width="0.900"/></g>
<g transform="translate(42.5,722.0)"><path d="M0.500 -3L10 5.500L2.500 10L-8.500 6Z" fill="#f2a020" stroke="#6a3a00" stroke-width="0.900"/><path d="M0.500 -3L2.500 10L-8.500 6Z" fill="#ffd27a" stroke="#6a3a00" stroke-width="0.700"/><path d="M-4 -8.500L2 -11.500H10V-7.500H3L-1 -5.500Z" fill="#eee" stroke="#333" stroke-width="0.800"/><path d="M-3 -7.500L0.500 -9.500M-2 -6.500L1.500 -8.500" stroke="#555" stroke-width="0.700"/><rect x="9" y="-12" width="2.300" height="5" fill="#111"/></g>
<path d="M27.5 735.02H22.5L27.5 730.02Z" fill="#6a6a6a"/>
<path d="M55.5 735.02H50.5L55.5 730.02Z" fill="#6a6a6a"/>
<g transform="translate(1587,245.5)"><path d="M0 -10.500C4.500 -10.500 7 -7.500 7 -4C7 -1 4.500 1 3.500 3.500L3 6.500H-3L-3.500 3.500C-4.500 1 -7 -1 -7 -4C-7 -7.500 -4.500 -10.500 0 -10.500Z" fill="url(#bulbg)" stroke="#555" stroke-width="0.900"/><path d="M-2.800 6.500H2.800V8.500Q0 11 -2.800 8.500Z" fill="#9a9a9a" stroke="#444" stroke-width="0.800"/></g>
<path d="M1600 258H1595L1600 253Z" fill="#6a6a6a"/>
<g transform="translate(1587,273.5)"><path d="M-3.800 -1V-5.500A3.800 3.800 0 0 1 3.800 -5.500V-1" fill="none" stroke="#111" stroke-width="1.700"/><rect x="-6" y="-1.500" width="12" height="10" rx="1.300" fill="url(#lockg)" stroke="#111" stroke-width="1.200"/><path d="M-4 2H4M-4 4.500H4M-4 7H4" stroke="#777" stroke-width="0.800"/></g>
<g transform="translate(1587,301.5)"><rect x="-10" y="-10" width="20" height="20" rx="2" fill="url(#flop)" stroke="#4a4210" stroke-width="1.200"/><rect x="-6.500" y="-9" width="13" height="8.500" fill="#f4f4f4" stroke="#777" stroke-width="0.700"/><rect x="-5.500" y="3" width="10" height="6.500" fill="#bdbdbd" stroke="#444" stroke-width="0.800"/><rect x="-3.800" y="4" width="2.500" height="4.800" fill="#8c7c1c"/></g>
<path d="M1600 314H1595L1600 309Z" fill="#6a6a6a"/>
<g transform="translate(1587,329.6)"><path d="M-10 -10H-6L-10 -6Z M10 -10V-6L6 -10Z M-10 10V6L-6 10Z M10 10H6L10 6Z" fill="#111"/><circle cx="1" cy="-1.500" r="5.800" fill="#f6f6f6" stroke="#111" stroke-width="1"/><path d="M-3 2.500L-8 7.500" stroke="#111" stroke-width="2"/></g>
<g transform="translate(1587,358)"><rect x="-12" y="-12" width="24" height="24" fill="#d9dbe0"/><path d="M-11 -11H12M-11 -8H12M-11 -5H12M-11 -2H12M-11 1H12M-11 4H12M-11 7H12M-11 10H12" stroke="#e9ebf0" stroke-width="1.200"/><path d="M-11 -11V12M-8 -11V12M-5 -11V12M-2 -11V12M1 -11V12M4 -11V12M7 -11V12M10 -11V12" stroke="#e9ebf0" stroke-width="1.200"/><circle cx="0" cy="0" r="9.200" fill="url(#sphg)" stroke="#222" stroke-width="0.700"/><path d="M0 -9.200Q-2.500 0 0 9.200M-9.200 0.500Q0 3.500 9.200 0.500" fill="none" stroke="#333" stroke-width="0.900"/></g>
<g transform="translate(1587,386)"><rect x="-12" y="-12" width="24" height="24" fill="#d9dbe0"/><path d="M-11 -11H12M-11 -8H12M-11 -5H12M-11 -2H12M-11 1H12M-11 4H12M-11 7H12M-11 10H12" stroke="#e9ebf0" stroke-width="1.200"/><path d="M-11 -11V12M-8 -11V12M-5 -11V12M-2 -11V12M1 -11V12M4 -11V12M7 -11V12M10 -11V12" stroke="#e9ebf0" stroke-width="1.200"/><ellipse cx="2" cy="8" rx="9" ry="2.500" fill="#000" opacity="0.180"/><circle cx="0" cy="-0.500" r="9.200" fill="url(#sphb)" stroke="#07103f" stroke-width="0.600"/><ellipse cx="-3.500" cy="-5" rx="2.800" ry="1.800" fill="#fff" opacity="0.850" transform="rotate(-30 -3.500 -5)"/></g>
<g transform="translate(1587,442)"><path d="M-9.500 -5.500L-5.500 -7L-6 -9.500Q-3.500 -11 -2.500 -8.500L-3 -8L0.500 -9.500L2 -5.500Q4.500 -7 5.500 -4.500Q5.500 -2.500 3 -3L4 0.500L0 2L-0.500 0Q-3 -1 -3.500 1.500L-2.500 3L-6.500 4.500L-7.500 1Q-10 2 -10.500 -0.500Q-10.500 -2.500 -8.500 -2Z" fill="#f6a81a" stroke="#8a4a00" stroke-width="0.800"/><path d="M-1 2L3 0.500L2.500 -1.500Q5 -3 6 -0.500L5.500 0L9 -1.500L10.500 2.500L8 3Q7 5.500 10 5.500L11 8L7 9.500L6.500 8Q4 7 3.500 9.500L4.500 10.500L1 11.500L-0.500 8Q-3 9 -3.500 6.500Q-3.500 4.500 -1.500 5Z" fill="#fafafa" stroke="#444" stroke-width="0.800"/></g>
<g transform="translate(1587,471.5)"><path d="M-10.500 10V-6L-6.500 1.500L4.500 -9.500L0.500 2L10 2.500L1.500 6L6 9.500Z" fill="url(#org)" stroke="#c86a00" stroke-width="0.500"/></g>
</svg>
<div class="r" style="left:685.4px;top:180.4px;width:19.2px;height:19.2px;border-radius:50%;background:conic-gradient(from 0deg,#ff2a00,#ffd800 16%,#5cff00 30%,#00e0a0 45%,#00b0ff 55%,#2030ff 68%,#b000ff 82%,#ff0060 93%,#ff2a00);box-shadow:0 0 0 0.800px #222"></div><div class="r" style="left:689.8px;top:184.8px;width:10.4px;height:10.4px;border-radius:50%;background:#fff;box-shadow:0 0 0 0.600px #444"></div>
<div class="r" style="left:1578px;top:404.5px;width:18px;height:18px;border-radius:50%;background:conic-gradient(from 0deg,#ff2a00,#ffd800 16%,#5cff00 30%,#00e0a0 45%,#00b0ff 55%,#2030ff 68%,#b000ff 82%,#ff0060 93%,#ff2a00);box-shadow:0 0 0 0.800px #222"></div><div class="r" style="left:1581.6px;top:408.1px;width:10.8px;height:10.8px;border-radius:50%;background:#fff;box-shadow:0 0 0 0.600px #444"></div>
<div class="t" style="left:914.3px;top:180.6px;font-size:17px;line-height:20px;letter-spacing:-0.18px;color:#fff;font-weight:bold;font-family:'Liberation Serif',serif;">?</div>
<div class="r" style="left:3px;top:226px;width:55px;height:1px;background:#c3cbe0;"></div>
<div class="r" style="left:3px;top:228px;width:55px;height:1px;background:#c3cbe0;"></div>
<div class="r" style="left:1574px;top:226px;width:27px;height:1px;background:#c3cbe0;"></div>
<div class="r" style="left:1574px;top:228px;width:27px;height:1px;background:#c3cbe0;"></div>
<div class="r" style="left:1605px;top:224px;width:1px;height:749px;background:#c9d0e2;"></div>
<div class="t" style="left:1612.0px;top:226.6px;font-size:15px;line-height:18px;letter-spacing:-0.43px;color:#222;">Calques</div>
<div class="r" style="left:1669px;top:234px;width:243px;height:1px;background:#c3cbe0;"></div>
<div class="r" style="left:1669px;top:236px;width:243px;height:1px;background:#c3cbe0;"></div>
<svg class="r" style="left:0;top:0" width="1920" height="1080" viewBox="0 0 1920 1080" fill="none" stroke="#bcc7de" stroke-width="1"><path d="M1609.500 971.500V274.500H1652.500V247.500H1695.500V274.500H1918.500V971.500Z"/></svg>
<div class="r" style="left:1620.500px;top:1253.500px"></div>
<div class="r" style="left:1620.2px;top:253.20000000000002px;width:17.2px;height:17.2px;border-radius:50%;background:conic-gradient(from 0deg,#ff2a00,#ffd800 16%,#5cff00 30%,#00e0a0 45%,#00b0ff 55%,#2030ff 68%,#b000ff 82%,#ff0060 93%,#ff2a00);box-shadow:0 0 0 0.800px #222"></div><div class="r" style="left:1624.1px;top:257.1px;width:9.4px;height:9.4px;border-radius:50%;background:#fff;box-shadow:0 0 0 0.600px #444"></div>
<svg class="r" style="left:0;top:0" width="1920" height="1080" viewBox="0 0 1920 1080"><g transform="translate(1672.5,261.8) scale(1.0)"><path d="M-9.500 -8.500L9.500 -4.500V4.500L-2 9.500L-9.500 2Z" fill="#1a237e" stroke="#111" stroke-width="1" stroke-linejoin="round"/><path d="M-9.500 -8.500L9.500 -4.500L-1.500 1.500Z" fill="#ff7a45"/><path d="M-9.500 -8.500L-1.500 1.500V4L-9.500 -5.500Z" fill="#e02010"/><path d="M-1.500 1.500L9.500 -4.500V-2L-1.500 4Z" fill="#e02010"/><path d="M-9.500 -5.500L-1.500 4V6.500L-9.500 -2.500Z" fill="#fff"/><path d="M-1.500 4L9.500 -2V1L-1.500 6.500Z" fill="#d6d6d6"/><path d="M-9.500 -2.500L-1.500 6.500V9.300L-9.500 1.500Z" fill="#2436b8"/><path d="M-1.500 6.500L9.500 1V4.500L-1.500 9.300Z" fill="#1a237e"/></g></svg>
<svg class="r" style="left:0;top:0" width="1920" height="1080" viewBox="0 0 1920 1080"><g transform="translate(1717.500,261) rotate(38)"><path d="M0 -8.300C4 -8.300 6.500 -5.500 6.500 -2.300C6.500 0.500 4.500 1.800 3.300 3.500L2.800 5.500H-2.800L-3.300 3.500C-4.500 1.800 -6.500 0.500 -6.500 -2.300C-6.500 -5.500 -4 -8.300 0 -8.300Z" fill="#ffe03a" stroke="#6b5a10" stroke-width="1"/><rect x="-2.600" y="5.500" width="5.200" height="3.600" rx="1" fill="#d8d8d8" stroke="#555" stroke-width="0.900"/><circle cx="-1.500" cy="-4" r="2.200" fill="#fff8b0" opacity="0.800"/></g>
<g transform="translate(1761,262) rotate(-48)"><rect x="-9" y="-3.300" width="14" height="6.600" rx="1.200" fill="#f2f2f2" stroke="#333" stroke-width="1"/><rect x="-1" y="-3.300" width="4.500" height="6.600" fill="#ef4a14"/><path d="M5 -2.500L8 -1.800V1.800L5 2.500Z" fill="#ddd" stroke="#333" stroke-width="0.900"/><path d="M-9 -3.300L-10.500 -4.300V4.300L-9 3.300" fill="#e8e8e8" stroke="#333" stroke-width="0.900"/></g></svg>
<svg class="r" style="left:0;top:0" width="1920" height="1080" viewBox="0 0 1920 1080" fill="none" stroke="#c2cbe2" stroke-width="1.3"><polygon points="1917.96,263.22 1917.96,264.78 1915.97,265.81 1915.50,266.94 1916.18,269.08 1915.08,270.18 1912.94,269.50 1911.81,269.97 1910.78,271.96 1909.22,271.96 1908.19,269.97 1907.06,269.50 1904.92,270.18 1903.82,269.08 1904.50,266.94 1904.03,265.81 1902.04,264.78 1902.04,263.22 1904.03,262.19 1904.50,261.06 1903.82,258.92 1904.92,257.82 1907.06,258.50 1908.19,258.03 1909.22,256.04 1910.78,256.04 1911.81,258.03 1912.94,258.50 1915.08,257.82 1916.18,258.92 1915.50,261.06 1915.97,262.19"/><circle cx="1910" cy="264" r="2.40"/></svg>
<svg class="r" style="left:0;top:0" width="1920" height="1080" viewBox="0 0 1920 1080">
<defs><linearGradient id="pg" x1="0" y1="0" x2="1" y2="1"><stop offset="0" stop-color="#fff"/><stop offset="1" stop-color="#d9d9d9"/></linearGradient>
<radialGradient id="hq" cx="0.350" cy="0.300" r="0.800"><stop offset="0" stop-color="#6f87f0"/><stop offset="1" stop-color="#1c2fa8"/></radialGradient>
<linearGradient id="fu" x1="0" y1="0" x2="1" y2="0"><stop offset="0" stop-color="#7d93ff"/><stop offset="1" stop-color="#3346c8"/></linearGradient></defs>
<path d="M1623.500 290.500H1631.500L1635.500 294.500V307.500H1623.500Z" fill="url(#pg)" stroke="#111" stroke-width="1.200"/><path d="M1631.500 290.500V294.500H1635.500" fill="none" stroke="#111" stroke-width="1"/>
<g fill="#c9c9c9" stroke="#a9a9a9" stroke-width="1"><path d="M1647.500 290.500H1653.500L1656.500 293.500V302.500H1647.500Z"/><path d="M1652.500 295.500H1658.500L1661.500 298.500V307.500H1652.500Z"/></g>
<path d="M1673 291L1689 307M1689 291L1673 307" stroke="#c6c6c6" stroke-width="2.600" fill="none"/>
<path d="M1707 294L1715 303H1699Z" fill="#c6c6c6" stroke="#b0b0b0" stroke-width="1" stroke-linejoin="round"/>
<path d="M1733 304L1741 294.500H1725Z" fill="#c6c6c6" stroke="#b0b0b0" stroke-width="1" stroke-linejoin="round"/>
<path d="M1754 299L1764 290.500V307.500Z" fill="#b9b9b9" stroke="#a6a6a6" stroke-width="1" stroke-linejoin="round"/>
<path d="M1777.500 291.500Q1784.500 289 1791.500 291.500Q1791 294 1786.500 299V306Q1784.500 308.500 1782.500 306V299Q1778 294 1777.500 291.500Z" fill="url(#fu)" stroke="#1e2c8a" stroke-width="1"/><path d="M1791 308L1795 304V308Z" fill="#000"/>
<path d="M1804.500 290.500H1814L1817.500 294V307.500H1804.500Z" fill="#c9c9c9" stroke="#b0b0b0" stroke-width="1"/><path d="M1817 308L1821 304V308Z" fill="#aaa"/>
<g transform="translate(1837,299) rotate(40)"><rect x="-1.800" y="-7" width="3.600" height="17" rx="1.500" fill="#2a3fb5" stroke="#0b1660" stroke-width="0.800"/><path d="M-7 -9.500Q-3 -11.500 3 -10.500L7 -8.500V-5.500L3 -6.500H-4L-7 -5.500Z" fill="#bdbdbd" stroke="#222" stroke-width="0.900"/></g><path d="M1843 308L1847 304V308Z" fill="#000"/>
<circle cx="1862.700" cy="299" r="9" fill="url(#hq)"/>
</svg>
<div class="t" style="left:1858.3px;top:290.6px;font-size:15px;line-height:18px;letter-spacing:-0.16px;color:#fff;font-weight:bold;font-family:'Liberation Serif',serif;">?</div>
<div class="r" style="left:1610px;top:321px;width:304px;height:630px;background:#fff;"></div>
<div class="r" style="left:1914px;top:321px;width:4px;height:630px;background:#eceef3;"></div>
<div class="r" style="left:1715px;top:321px;width:1px;height:26px;background:#dcdfe6;"></div>
<div class="r" style="left:1736px;top:321px;width:1px;height:26px;background:#dcdfe6;"></div>
<div class="r" style="left:1757px;top:321px;width:1px;height:26px;background:#dcdfe6;"></div>
<div class="r" style="left:1778px;top:321px;width:1px;height:26px;background:#dcdfe6;"></div>
<div class="r" style="left:1799px;top:321px;width:1px;height:26px;background:#dcdfe6;"></div>
<div class="r" style="left:1879px;top:321px;width:1px;height:26px;background:#dcdfe6;"></div>
<div class="t" style="left:1615.3px;top:325.5px;font-size:15px;line-height:18px;letter-spacing:-0.31px;color:#222;">Calque</div>
<div class="t" style="left:1805.3px;top:325.5px;font-size:15px;line-height:18px;letter-spacing:0.04px;color:#222;">Matériau</div>
<div class="r" style="left:1880px;top:321px;width:34px;height:26px;overflow:hidden"><div class="t" style="left:5.3px;top:4.5px;font-size:15px;line-height:18px;letter-spacing:0.04px;color:#222;">Type</div></div>
<div class="r" style="left:1610px;top:370.0px;width:304px;height:1px;background:#e6e9f2;"></div>
<div class="t" style="left:1638.7px;top:350.5px;font-size:15px;line-height:18px;letter-spacing:0.02px;color:#222;">Défaut</div>
<div class="r" style="left:1880px;top:346.5px;width:34px;height:24px;overflow:hidden"><div class="t" style="left:4.2px;top:4.0px;font-size:15px;line-height:18px;letter-spacing:-0.13px;color:#222;">Contenu</div></div>
<div class="r" style="left:1610px;top:394.0px;width:304px;height:1px;background:#e6e9f2;"></div>
<div class="t" style="left:1638.7px;top:374.5px;font-size:15px;line-height:18px;letter-spacing:-0.38px;color:#222;">Calque 03</div>
<div class="r" style="left:1880px;top:370.5px;width:34px;height:24px;overflow:hidden"><div class="t" style="left:4.2px;top:4.0px;font-size:15px;line-height:18px;letter-spacing:-0.13px;color:#222;">Contenu</div></div>
<div class="r" style="left:1610px;top:418.0px;width:304px;height:1px;background:#e6e9f2;"></div>
<div class="t" style="left:1658.7px;top:398.5px;font-size:15px;line-height:18px;letter-spacing:-0.75px;color:#222;">base 7...</div>
<div class="r" style="left:1880px;top:394.5px;width:34px;height:24px;overflow:hidden"><div class="t" style="left:4.2px;top:4.0px;font-size:15px;line-height:18px;letter-spacing:-0.13px;color:#222;">Contenu</div></div>
<div class="r" style="left:1610px;top:442.0px;width:304px;height:1px;background:#e6e9f2;"></div>
<div class="t" style="left:1678.3px;top:422.5px;font-size:15px;line-height:18px;letter-spacing:-0.92px;color:#222;">Cal...</div>
<div class="r" style="left:1880px;top:418.5px;width:34px;height:24px;overflow:hidden"><div class="t" style="left:4.2px;top:4.0px;font-size:15px;line-height:18px;letter-spacing:-0.13px;color:#222;">Contenu</div></div>
<div class="r" style="left:1610px;top:466.0px;width:304px;height:1px;background:#e6e9f2;"></div>
<div class="t" style="left:1638.7px;top:446.5px;font-size:15px;line-height:18px;letter-spacing:-0.38px;color:#222;">Calque 04</div>
<div class="r" style="left:1880px;top:442.5px;width:34px;height:24px;overflow:hidden"><div class="t" style="left:4.2px;top:4.0px;font-size:15px;line-height:18px;letter-spacing:-0.13px;color:#222;">Contenu</div></div>
<div class="r" style="left:1610px;top:490.0px;width:304px;height:1px;background:#e6e9f2;"></div>
<div class="t" style="left:1658.5px;top:470.5px;font-size:15px;line-height:18px;letter-spacing:-0.67px;color:#222;">Calqu...</div>
<div class="r" style="left:1880px;top:466.5px;width:34px;height:24px;overflow:hidden"><div class="t" style="left:4.2px;top:4.0px;font-size:15px;line-height:18px;letter-spacing:-0.13px;color:#222;">Contenu</div></div>
<div class="r" style="left:1610px;top:514.0px;width:304px;height:1px;background:#e6e9f2;"></div>
<div class="t" style="left:1658.5px;top:494.5px;font-size:15px;line-height:18px;letter-spacing:-0.67px;color:#222;">Calqu...</div>
<div class="r" style="left:1880px;top:490.5px;width:34px;height:24px;overflow:hidden"><div class="t" style="left:4.2px;top:4.0px;font-size:15px;line-height:18px;letter-spacing:-0.13px;color:#222;">Contenu</div></div>
<div class="r" style="left:1610px;top:538.0px;width:304px;height:1px;background:#e6e9f2;"></div>
<div class="t" style="left:1658.5px;top:518.5px;font-size:15px;line-height:18px;letter-spacing:-0.67px;color:#222;">Calqu...</div>
<div class="r" style="left:1880px;top:514.5px;width:34px;height:24px;overflow:hidden"><div class="t" style="left:4.2px;top:4.0px;font-size:15px;line-height:18px;letter-spacing:-0.13px;color:#222;">Contenu</div></div>
<div class="r" style="left:1610px;top:562.0px;width:304px;height:1px;background:#e6e9f2;"></div>
<div class="t" style="left:1658.5px;top:542.5px;font-size:15px;line-height:18px;letter-spacing:-0.67px;color:#222;">Calqu...</div>
<div class="r" style="left:1880px;top:538.5px;width:34px;height:24px;overflow:hidden"><div class="t" style="left:4.2px;top:4.0px;font-size:15px;line-height:18px;letter-spacing:-0.13px;color:#222;">Contenu</div></div>
<div class="r" style="left:1610px;top:586.0px;width:304px;height:1px;background:#e6e9f2;"></div>
<div class="t" style="left:1638.7px;top:566.5px;font-size:15px;line-height:18px;letter-spacing:-0.42px;color:#222;">Calque 07</div>
<div class="r" style="left:1880px;top:562.5px;width:34px;height:24px;overflow:hidden"><div class="t" style="left:4.2px;top:4.0px;font-size:15px;line-height:18px;letter-spacing:-0.13px;color:#222;">Contenu</div></div>
<div class="r" style="left:1610px;top:610.0px;width:304px;height:1px;background:#e6e9f2;"></div>
<div class="t" style="left:1638.7px;top:590.5px;font-size:15px;line-height:18px;letter-spacing:-0.09px;color:#111;font-weight:bold;">motif su...</div>
<div class="r" style="left:1880px;top:586.5px;width:34px;height:24px;overflow:hidden"><div class="t" style="left:4.2px;top:4.0px;font-size:15px;line-height:18px;letter-spacing:-0.72px;color:#222;font-weight:bold;">Contenu</div></div>
<div class="r" style="left:1610px;top:634.0px;width:304px;height:1px;background:#e6e9f2;"></div>
<div class="t" style="left:1638.7px;top:614.5px;font-size:15px;line-height:18px;letter-spacing:-0.43px;color:#222;">Make2D</div>
<div class="r" style="left:1880px;top:610.5px;width:34px;height:24px;overflow:hidden"><div class="t" style="left:4.2px;top:4.0px;font-size:15px;line-height:18px;letter-spacing:-0.13px;color:#222;">Contenu</div></div>
<div class="r" style="left:1610px;top:658.0px;width:304px;height:1px;background:#e6e9f2;"></div>
<div class="t" style="left:1658.7px;top:638.5px;font-size:15px;line-height:18px;letter-spacing:0.31px;color:#222;">Visible</div>
<div class="r" style="left:1880px;top:634.5px;width:34px;height:24px;overflow:hidden"><div class="t" style="left:4.2px;top:4.0px;font-size:15px;line-height:18px;letter-spacing:-0.13px;color:#222;">Contenu</div></div>
<div class="r" style="left:1610px;top:682.0px;width:304px;height:1px;background:#e6e9f2;"></div>
<div class="t" style="left:1678.3px;top:662.5px;font-size:15px;line-height:18px;letter-spacing:-1.10px;color:#222;">Co...</div>
<div class="r" style="left:1880px;top:658.5px;width:34px;height:24px;overflow:hidden"><div class="t" style="left:4.2px;top:4.0px;font-size:15px;line-height:18px;letter-spacing:-0.13px;color:#222;">Contenu</div></div>
<svg class="r" style="left:0;top:0" width="1920" height="1080" viewBox="0 0 1920 1080">
<g transform="translate(1746.3,358.5)"><path d="M0 -7.3C3.300 -7.300 5.300 -5 5.300 -2.200C5.300 0 3.700 1.300 2.600 3.200C2.200 4 2.100 5 2.100 5.800H-2.100C-2.100 5 -2.200 4 -2.600 3.200C-3.700 1.300 -5.300 0 -5.300 -2.200C-5.300 -5 -3.300 -7.300 0 -7.300Z" fill="#6f9fe6" stroke="#2f5ea8" stroke-width="1.100"/><path d="M-1.900 5.800H1.900V6.800Q0 8.300 -1.900 6.800Z" fill="#4d80cf" stroke="#2f5ea8" stroke-width="0.800"/></g>
<g transform="translate(1768.3,358.5)"><path d="M1.500 -0.500V-4A2.800 2.800 0 0 1 7 -4V-2.300" fill="none" stroke="#222" stroke-width="1.300"/><rect x="-6.500" y="-0.800" width="10.300" height="8" rx="1.200" fill="#ffe25c" stroke="#3a3208" stroke-width="1.100"/><path d="M-5.300 0.500H2.500" stroke="#fff6b8" stroke-width="1"/></g>
<rect x="1782.500" y="352.5" width="13" height="13" fill="#000" stroke="#3c3c3c" stroke-width="1"/>
<circle cx="1812" cy="358.8" r="7.500" fill="#f7f7f7"/>
<path d="M1618.3 379.5L1623.5 384.7L1628.7 379.5" fill="none" stroke="#333" stroke-width="1.500"/>
<g transform="translate(1746.3,382.5)"><path d="M0 -7.3C3.300 -7.300 5.300 -5 5.300 -2.200C5.300 0 3.700 1.300 2.600 3.200C2.200 4 2.100 5 2.100 5.800H-2.100C-2.100 5 -2.200 4 -2.600 3.200C-3.700 1.300 -5.300 0 -5.300 -2.200C-5.300 -5 -3.300 -7.300 0 -7.300Z" fill="#ffe98a" stroke="#b98a0e" stroke-width="1.100"/><path d="M-1.900 5.800H1.900V6.800Q0 8.300 -1.900 6.800Z" fill="#e7b416" stroke="#b98a0e" stroke-width="0.800"/></g>
<g transform="translate(1768.3,382.5)"><path d="M1.500 -0.500V-4A2.800 2.800 0 0 1 7 -4V-2.300" fill="none" stroke="#222" stroke-width="1.300"/><rect x="-6.500" y="-0.800" width="10.300" height="8" rx="1.200" fill="#ffe25c" stroke="#3a3208" stroke-width="1.100"/><path d="M-5.300 0.500H2.500" stroke="#fff6b8" stroke-width="1"/></g>
<rect x="1782.500" y="376.5" width="13" height="13" fill="#0000ff" stroke="#3c3c3c" stroke-width="1"/>
<circle cx="1812" cy="382.8" r="7.500" fill="#f7f7f7"/>
<path d="M1638.3 403.5L1643.5 408.7L1648.7 403.5" fill="none" stroke="#333" stroke-width="1.500"/>
<g transform="translate(1746.3,406.5)"><path d="M0 -7.3C3.300 -7.300 5.300 -5 5.300 -2.200C5.300 0 3.700 1.300 2.600 3.200C2.200 4 2.100 5 2.100 5.800H-2.100C-2.100 5 -2.200 4 -2.600 3.200C-3.700 1.300 -5.300 0 -5.300 -2.200C-5.300 -5 -3.300 -7.300 0 -7.300Z" fill="#ffe98a" stroke="#b98a0e" stroke-width="1.100"/><path d="M-1.900 5.800H1.900V6.800Q0 8.300 -1.900 6.800Z" fill="#e7b416" stroke="#b98a0e" stroke-width="0.800"/></g>
<g transform="translate(1768.3,406.5)"><path d="M1.500 -0.500V-4A2.800 2.800 0 0 1 7 -4V-2.300" fill="none" stroke="#222" stroke-width="1.300"/><rect x="-6.500" y="-0.800" width="10.300" height="8" rx="1.200" fill="#ffe25c" stroke="#3a3208" stroke-width="1.100"/><path d="M-5.300 0.500H2.500" stroke="#fff6b8" stroke-width="1"/></g>
<rect x="1782.500" y="400.5" width="13" height="13" fill="#bfbfff" stroke="#3c3c3c" stroke-width="1"/>
<circle cx="1812" cy="406.8" r="7.500" fill="#f7f7f7"/>
<g transform="translate(1746.3,430.5)"><path d="M0 -7.3C3.300 -7.300 5.300 -5 5.300 -2.200C5.300 0 3.700 1.300 2.600 3.200C2.200 4 2.100 5 2.100 5.800H-2.100C-2.100 5 -2.200 4 -2.600 3.200C-3.700 1.300 -5.300 0 -5.300 -2.200C-5.300 -5 -3.300 -7.300 0 -7.300Z" fill="#ffe98a" stroke="#b98a0e" stroke-width="1.100"/><path d="M-1.900 5.800H1.900V6.800Q0 8.300 -1.900 6.800Z" fill="#e7b416" stroke="#b98a0e" stroke-width="0.800"/></g>
<g transform="translate(1768.3,430.5)"><path d="M1.500 -0.500V-4A2.800 2.800 0 0 1 7 -4V-2.300" fill="none" stroke="#222" stroke-width="1.300"/><rect x="-6.500" y="-0.800" width="10.300" height="8" rx="1.200" fill="#ffe25c" stroke="#3a3208" stroke-width="1.100"/><path d="M-5.300 0.500H2.500" stroke="#fff6b8" stroke-width="1"/></g>
<rect x="1782.500" y="424.5" width="13" height="13" fill="#00ffff" stroke="#3c3c3c" stroke-width="1"/>
<circle cx="1812" cy="430.8" r="7.500" fill="#f7f7f7"/>
<path d="M1618.3 451.5L1623.5 456.7L1628.7 451.5" fill="none" stroke="#333" stroke-width="1.500"/>
<g transform="translate(1746.3,454.5)"><path d="M0 -7.3C3.300 -7.300 5.300 -5 5.300 -2.200C5.300 0 3.700 1.300 2.600 3.200C2.200 4 2.100 5 2.100 5.800H-2.100C-2.100 5 -2.200 4 -2.600 3.200C-3.700 1.300 -5.300 0 -5.300 -2.200C-5.300 -5 -3.300 -7.300 0 -7.300Z" fill="#ffe98a" stroke="#b98a0e" stroke-width="1.100"/><path d="M-1.900 5.800H1.900V6.800Q0 8.300 -1.900 6.800Z" fill="#e7b416" stroke="#b98a0e" stroke-width="0.800"/></g>
<g transform="translate(1768.3,454.5)"><path d="M1.500 -0.500V-4A2.800 2.800 0 0 1 7 -4V-2.300" fill="none" stroke="#222" stroke-width="1.300"/><rect x="-6.500" y="-0.800" width="10.300" height="8" rx="1.200" fill="#ffe25c" stroke="#3a3208" stroke-width="1.100"/><path d="M-5.300 0.500H2.500" stroke="#fff6b8" stroke-width="1"/></g>
<rect x="1782.500" y="448.5" width="13" height="13" fill="#007f00" stroke="#3c3c3c" stroke-width="1"/>
<circle cx="1812" cy="454.8" r="7.500" fill="#f7f7f7"/>
<g transform="translate(1746.3,478.5)"><path d="M0 -7.3C3.300 -7.300 5.300 -5 5.300 -2.200C5.300 0 3.700 1.300 2.600 3.200C2.200 4 2.100 5 2.100 5.800H-2.100C-2.100 5 -2.200 4 -2.600 3.200C-3.700 1.300 -5.300 0 -5.300 -2.200C-5.300 -5 -3.300 -7.300 0 -7.300Z" fill="#ffe98a" stroke="#b98a0e" stroke-width="1.100"/><path d="M-1.900 5.800H1.900V6.800Q0 8.300 -1.900 6.800Z" fill="#e7b416" stroke="#b98a0e" stroke-width="0.800"/></g>
<g transform="translate(1768.3,478.5)"><path d="M1.500 -0.500V-4A2.800 2.800 0 0 1 7 -4V-2.300" fill="none" stroke="#222" stroke-width="1.300"/><rect x="-6.500" y="-0.800" width="10.300" height="8" rx="1.200" fill="#ffe25c" stroke="#3a3208" stroke-width="1.100"/><path d="M-5.300 0.500H2.500" stroke="#fff6b8" stroke-width="1"/></g>
<rect x="1782.500" y="472.5" width="13" height="13" fill="#c80000" stroke="#3c3c3c" stroke-width="1"/>
<circle cx="1812" cy="478.8" r="7.500" fill="#f7f7f7"/>
<g transform="translate(1746.3,502.5)"><path d="M0 -7.3C3.300 -7.300 5.300 -5 5.300 -2.200C5.300 0 3.700 1.300 2.600 3.200C2.200 4 2.100 5 2.100 5.800H-2.100C-2.100 5 -2.200 4 -2.600 3.200C-3.700 1.300 -5.300 0 -5.300 -2.200C-5.300 -5 -3.300 -7.300 0 -7.300Z" fill="#ffe98a" stroke="#b98a0e" stroke-width="1.100"/><path d="M-1.900 5.800H1.900V6.800Q0 8.300 -1.900 6.800Z" fill="#e7b416" stroke="#b98a0e" stroke-width="0.800"/></g>
<g transform="translate(1768.3,502.5)"><path d="M1.500 -0.500V-4A2.800 2.800 0 0 1 7 -4V-2.300" fill="none" stroke="#222" stroke-width="1.300"/><rect x="-6.500" y="-0.800" width="10.300" height="8" rx="1.200" fill="#ffe25c" stroke="#3a3208" stroke-width="1.100"/><path d="M-5.300 0.500H2.500" stroke="#fff6b8" stroke-width="1"/></g>
<rect x="1782.500" y="496.5" width="13" height="13" fill="#c85f5f" stroke="#3c3c3c" stroke-width="1"/>
<circle cx="1812" cy="502.8" r="7.500" fill="#f7f7f7"/>
<g transform="translate(1746.3,526.5)"><path d="M0 -7.3C3.300 -7.300 5.300 -5 5.300 -2.200C5.300 0 3.700 1.300 2.600 3.200C2.200 4 2.100 5 2.100 5.800H-2.100C-2.100 5 -2.200 4 -2.600 3.200C-3.700 1.300 -5.300 0 -5.300 -2.200C-5.300 -5 -3.300 -7.300 0 -7.300Z" fill="#ffe98a" stroke="#b98a0e" stroke-width="1.100"/><path d="M-1.900 5.800H1.900V6.800Q0 8.300 -1.900 6.800Z" fill="#e7b416" stroke="#b98a0e" stroke-width="0.800"/></g>
<g transform="translate(1768.3,526.5)"><path d="M1.500 -0.500V-4A2.800 2.800 0 0 1 7 -4V-2.300" fill="none" stroke="#222" stroke-width="1.300"/><rect x="-6.500" y="-0.800" width="10.300" height="8" rx="1.200" fill="#ffe25c" stroke="#3a3208" stroke-width="1.100"/><path d="M-5.300 0.500H2.500" stroke="#fff6b8" stroke-width="1"/></g>
<rect x="1782.500" y="520.5" width="13" height="13" fill="#c89696" stroke="#3c3c3c" stroke-width="1"/>
<circle cx="1812" cy="526.8" r="7.500" fill="#f7f7f7"/>
<g transform="translate(1746.3,550.5)"><path d="M0 -7.3C3.300 -7.300 5.300 -5 5.300 -2.200C5.300 0 3.700 1.300 2.600 3.200C2.200 4 2.100 5 2.100 5.800H-2.100C-2.100 5 -2.200 4 -2.600 3.200C-3.700 1.300 -5.300 0 -5.300 -2.200C-5.300 -5 -3.300 -7.300 0 -7.300Z" fill="#ffe98a" stroke="#b98a0e" stroke-width="1.100"/><path d="M-1.900 5.800H1.900V6.800Q0 8.300 -1.900 6.800Z" fill="#e7b416" stroke="#b98a0e" stroke-width="0.800"/></g>
<g transform="translate(1768.3,550.5)"><path d="M1.500 -0.500V-4A2.800 2.800 0 0 1 7 -4V-2.300" fill="none" stroke="#222" stroke-width="1.300"/><rect x="-6.500" y="-0.800" width="10.300" height="8" rx="1.200" fill="#ffe25c" stroke="#3a3208" stroke-width="1.100"/><path d="M-5.300 0.500H2.500" stroke="#fff6b8" stroke-width="1"/></g>
<rect x="1782.500" y="544.5" width="13" height="13" fill="#c8b4b4" stroke="#3c3c3c" stroke-width="1"/>
<circle cx="1812" cy="550.8" r="7.500" fill="#f7f7f7"/>
<g transform="translate(1746.3,574.5)"><path d="M0 -7.3C3.300 -7.300 5.300 -5 5.300 -2.200C5.300 0 3.700 1.300 2.600 3.200C2.200 4 2.100 5 2.100 5.800H-2.100C-2.100 5 -2.200 4 -2.600 3.200C-3.700 1.300 -5.300 0 -5.300 -2.200C-5.300 -5 -3.300 -7.300 0 -7.300Z" fill="#6f9fe6" stroke="#2f5ea8" stroke-width="1.100"/><path d="M-1.900 5.800H1.900V6.800Q0 8.300 -1.900 6.800Z" fill="#4d80cf" stroke="#2f5ea8" stroke-width="0.800"/></g>
<g transform="translate(1768.3,574.5)"><path d="M1.500 -0.500V-4A2.800 2.800 0 0 1 7 -4V-2.300" fill="none" stroke="#222" stroke-width="1.300"/><rect x="-6.500" y="-0.800" width="10.300" height="8" rx="1.200" fill="#ffe25c" stroke="#3a3208" stroke-width="1.100"/><path d="M-5.300 0.500H2.500" stroke="#fff6b8" stroke-width="1"/></g>
<rect x="1782.500" y="568.5" width="13" height="13" fill="#ff7f00" stroke="#3c3c3c" stroke-width="1"/>
<circle cx="1812" cy="574.8" r="7.500" fill="#f7f7f7"/>
<path d="M1718.500 600.0L1722.800 604.0L1733.500 593.5" fill="none" stroke="#111" stroke-width="1.800"/>
<rect x="1782.500" y="592.5" width="13" height="13" fill="#ffdbb7" stroke="#3c3c3c" stroke-width="1"/>
<circle cx="1812" cy="598.8" r="7.500" fill="#f7f7f7"/>
<path d="M1618.3 619.5L1623.5 624.7L1628.7 619.5" fill="none" stroke="#333" stroke-width="1.500"/>
<g transform="translate(1746.3,622.5)"><path d="M0 -7.3C3.300 -7.300 5.300 -5 5.300 -2.200C5.300 0 3.700 1.300 2.600 3.200C2.200 4 2.100 5 2.100 5.800H-2.100C-2.100 5 -2.200 4 -2.600 3.200C-3.700 1.300 -5.300 0 -5.300 -2.200C-5.300 -5 -3.300 -7.300 0 -7.300Z" fill="#ffe98a" stroke="#b98a0e" stroke-width="1.100"/><path d="M-1.900 5.800H1.900V6.800Q0 8.300 -1.900 6.800Z" fill="#e7b416" stroke="#b98a0e" stroke-width="0.800"/></g>
<g transform="translate(1768.3,622.5)"><path d="M1.500 -0.500V-4A2.800 2.800 0 0 1 7 -4V-2.300" fill="none" stroke="#222" stroke-width="1.300"/><rect x="-6.500" y="-0.800" width="10.300" height="8" rx="1.200" fill="#ffe25c" stroke="#3a3208" stroke-width="1.100"/><path d="M-5.300 0.500H2.500" stroke="#fff6b8" stroke-width="1"/></g>
<rect x="1782.500" y="616.5" width="13" height="13" fill="#000" stroke="#3c3c3c" stroke-width="1"/>
<circle cx="1812" cy="622.8" r="7.500" fill="#f7f7f7"/>
<path d="M1638.3 643.5L1643.5 648.7L1648.7 643.5" fill="none" stroke="#333" stroke-width="1.500"/>
<g transform="translate(1746.3,646.5)"><path d="M0 -7.3C3.300 -7.300 5.300 -5 5.300 -2.200C5.300 0 3.700 1.300 2.600 3.200C2.200 4 2.100 5 2.100 5.800H-2.100C-2.100 5 -2.200 4 -2.600 3.200C-3.700 1.300 -5.300 0 -5.300 -2.200C-5.300 -5 -3.300 -7.300 0 -7.300Z" fill="#ffe98a" stroke="#b98a0e" stroke-width="1.100"/><path d="M-1.900 5.800H1.900V6.800Q0 8.300 -1.900 6.800Z" fill="#e7b416" stroke="#b98a0e" stroke-width="0.800"/></g>
<g transform="translate(1768.3,646.5)"><path d="M1.500 -0.500V-4A2.800 2.800 0 0 1 7 -4V-2.300" fill="none" stroke="#222" stroke-width="1.300"/><rect x="-6.500" y="-0.800" width="10.300" height="8" rx="1.200" fill="#ffe25c" stroke="#3a3208" stroke-width="1.100"/><path d="M-5.300 0.500H2.500" stroke="#fff6b8" stroke-width="1"/></g>
<rect x="1782.500" y="640.5" width="13" height="13" fill="#000" stroke="#3c3c3c" stroke-width="1"/>
<circle cx="1812" cy="646.8" r="7.500" fill="#f7f7f7"/>
<g transform="translate(1746.3,670.5)"><path d="M0 -7.3C3.300 -7.300 5.300 -5 5.300 -2.200C5.300 0 3.700 1.300 2.600 3.200C2.200 4 2.100 5 2.100 5.800H-2.100C-2.100 5 -2.200 4 -2.600 3.200C-3.700 1.300 -5.300 0 -5.300 -2.200C-5.300 -5 -3.300 -7.300 0 -7.300Z" fill="#ffe98a" stroke="#b98a0e" stroke-width="1.100"/><path d="M-1.900 5.800H1.900V6.800Q0 8.300 -1.900 6.800Z" fill="#e7b416" stroke="#b98a0e" stroke-width="0.800"/></g>
<g transform="translate(1768.3,670.5)"><path d="M1.500 -0.500V-4A2.800 2.800 0 0 1 7 -4V-2.300" fill="none" stroke="#222" stroke-width="1.300"/><rect x="-6.500" y="-0.800" width="10.300" height="8" rx="1.200" fill="#ffe25c" stroke="#3a3208" stroke-width="1.100"/><path d="M-5.300 0.500H2.500" stroke="#fff6b8" stroke-width="1"/></g>
<rect x="1782.500" y="664.5" width="13" height="13" fill="#000" stroke="#3c3c3c" stroke-width="1"/>
<circle cx="1812" cy="670.8" r="7.500" fill="#f7f7f7"/>
</svg>
<div class="r" style="left:1610px;top:951px;width:308px;height:19px;background:#f0f0f0;"></div>
<div class="r" style="left:1631px;top:951px;width:177px;height:19px;background:#cdcdcd;"></div>
<svg class="r" style="left:1610px;top:951px" width="308" height="19" viewBox="0 0 308 19" fill="none" stroke="#444" stroke-width="1.700"><path d="M13 5L8.500 9.500L13 14"/><path d="M289 5L293.500 9.500L289 14"/></svg>
<svg class="r" style="left:0;top:0" width="400" height="1080" viewBox="0 0 400 1080" fill="none" stroke="#bcc7de" stroke-width="1"><path d="M147.7 949.5L170.7 973.5H222.5Q226.5 973.5 226.5 969.5V949.5"/></svg>
<div class="t" style="left:78.6px;top:953.0px;font-size:15px;line-height:18px;letter-spacing:-0.42px;color:#222;">Perspective</div>
<div class="t" style="left:174.8px;top:953.0px;font-size:15px;line-height:18px;letter-spacing:-0.75px;color:#222;">Dessus</div>
<div class="t" style="left:242.4px;top:953.0px;font-size:15px;line-height:18px;letter-spacing:-1.04px;color:#222;">Face</div>
<div class="t" style="left:293.4px;top:953.0px;font-size:15px;line-height:18px;letter-spacing:0.18px;color:#222;">Droite</div>
<svg class="r" style="left:357px;top:956px" width="13" height="13" viewBox="0 0 13 13" fill="#f4f4f4" stroke="#8a8a8a" stroke-width="0.9"><path d="M5 1H8V5H12V8H8V12H5V8H1V5H5Z"/></svg>
<div class="r" style="left:4px;top:982px;width:1px;height:24px;background:#c3cbe0;"></div>
<div class="r" style="left:6px;top:982px;width:1px;height:24px;background:#c3cbe0;"></div>
<div class="r" style="left:12px;top:987px;width:16px;height:16px;background:#fff;border:1px solid #333;box-sizing:border-box"></div><svg class="r" style="left:12px;top:987px" width="16" height="16" viewBox="0 0 16 16" fill="none" stroke="#222" stroke-width="1.3"><path d="M3.2 8.3L6.5 11.6L12.8 4.6"/></svg>
<div class="t" style="left:32.5px;top:986.7px;font-size:15px;line-height:18px;letter-spacing:-1.11px;color:#222;">Fin</div>
<div class="r" style="left:59px;top:987px;width:16px;height:16px;background:#fff;border:1px solid #333;box-sizing:border-box"></div><svg class="r" style="left:59px;top:987px" width="16" height="16" viewBox="0 0 16 16" fill="none" stroke="#222" stroke-width="1.3"><path d="M3.2 8.3L6.5 11.6L12.8 4.6"/></svg>
<div class="t" style="left:79.7px;top:986.7px;font-size:15px;line-height:18px;letter-spacing:-0.66px;color:#222;">Proche</div>
<div class="r" style="left:132px;top:987px;width:16px;height:16px;background:#fff;border:1px solid #333;box-sizing:border-box"></div><svg class="r" style="left:132px;top:987px" width="16" height="16" viewBox="0 0 16 16" fill="none" stroke="#222" stroke-width="1.3"><path d="M3.2 8.3L6.5 11.6L12.8 4.6"/></svg>
<div class="t" style="left:152.5px;top:986.7px;font-size:15px;line-height:18px;letter-spacing:-0.40px;color:#222;">Point</div>
<div class="r" style="left:194px;top:987px;width:16px;height:16px;background:#fff;border:1px solid #333;box-sizing:border-box"></div><svg class="r" style="left:194px;top:987px" width="16" height="16" viewBox="0 0 16 16" fill="none" stroke="#222" stroke-width="1.3"><path d="M3.2 8.3L6.5 11.6L12.8 4.6"/></svg>
<div class="t" style="left:214.7px;top:986.7px;font-size:15px;line-height:18px;letter-spacing:-0.26px;color:#222;">Mi</div>
<div class="r" style="left:239px;top:987px;width:16px;height:16px;background:#fff;border:1px solid #333;box-sizing:border-box"></div><svg class="r" style="left:239px;top:987px" width="16" height="16" viewBox="0 0 16 16" fill="none" stroke="#222" stroke-width="1.3"><path d="M3.2 8.3L6.5 11.6L12.8 4.6"/></svg>
<div class="t" style="left:259.0px;top:986.7px;font-size:15px;line-height:18px;letter-spacing:-1.07px;color:#222;">Cen</div>
<div class="r" style="left:292px;top:987px;width:16px;height:16px;background:#fff;border:1px solid #333;box-sizing:border-box"></div><svg class="r" style="left:292px;top:987px" width="16" height="16" viewBox="0 0 16 16" fill="none" stroke="#222" stroke-width="1.3"><path d="M3.2 8.3L6.5 11.6L12.8 4.6"/></svg>
<div class="t" style="left:312.5px;top:986.7px;font-size:15px;line-height:18px;letter-spacing:-0.13px;color:#222;">Int</div>
<div class="r" style="left:337px;top:987px;width:16px;height:16px;background:#fff;border:1px solid #333;box-sizing:border-box"></div><svg class="r" style="left:337px;top:987px" width="16" height="16" viewBox="0 0 16 16" fill="none" stroke="#222" stroke-width="1.3"><path d="M3.2 8.3L6.5 11.6L12.8 4.6"/></svg>
<div class="t" style="left:357.3px;top:986.7px;font-size:15px;line-height:18px;letter-spacing:-0.90px;color:#222;">Perp</div>
<div class="r" style="left:394.8px;top:987px;width:16px;height:16px;background:#fff;border:1px solid #333;box-sizing:border-box"></div>
<div class="t" style="left:415.6px;top:986.7px;font-size:15px;line-height:18px;letter-spacing:-1.10px;color:#222;">Tan</div>
<div class="r" style="left:446.9px;top:987px;width:16px;height:16px;background:#fff;border:1px solid #333;box-sizing:border-box"></div>
<div class="t" style="left:467.3px;top:986.7px;font-size:15px;line-height:18px;letter-spacing:-0.50px;color:#222;">Quad</div>
<div class="r" style="left:510.8px;top:987px;width:16px;height:16px;background:#fff;border:1px solid #333;box-sizing:border-box"></div>
<div class="t" style="left:531.3px;top:986.7px;font-size:15px;line-height:18px;letter-spacing:-0.17px;color:#222;">Nœud</div>
<div class="r" style="left:580.8px;top:987px;width:16px;height:16px;background:#fff;border:1px solid #333;box-sizing:border-box"></div><svg class="r" style="left:580.8px;top:987px" width="16" height="16" viewBox="0 0 16 16" fill="none" stroke="#222" stroke-width="1.3"><path d="M3.2 8.3L6.5 11.6L12.8 4.6"/></svg>
<div class="t" style="left:601.5px;top:986.7px;font-size:15px;line-height:18px;letter-spacing:-0.08px;color:#222;">Sommet</div>
<div class="r" style="left:666px;top:988.5px;width:13.5px;height:13.5px;background:#e2e2e2;border:1px solid #c6c6c6;box-sizing:border-box"></div>
<div class="t" style="left:685.2px;top:986.7px;font-size:15px;line-height:18px;letter-spacing:-0.13px;color:#333;">Projeter</div>
<div class="r" style="left:746px;top:988.5px;width:13.5px;height:13.5px;background:#e2e2e2;border:1px solid #c6c6c6;box-sizing:border-box"></div>
<div class="t" style="left:765.8px;top:986.7px;font-size:15px;line-height:18px;letter-spacing:-0.29px;color:#333;">Désactiver</div>
<div class="r" style="left:0px;top:1008px;width:1920px;height:1px;background:#bcc7de;"></div>
<div class="r" style="left:51px;top:1009px;width:1px;height:21px;background:#c5cde0;"></div>
<div class="r" style="left:159px;top:1009px;width:1px;height:21px;background:#c5cde0;"></div>
<div class="r" style="left:267px;top:1009px;width:1px;height:21px;background:#c5cde0;"></div>
<div class="r" style="left:375px;top:1009px;width:1px;height:21px;background:#c5cde0;"></div>
<div class="r" style="left:483px;top:1009px;width:1px;height:21px;background:#c5cde0;"></div>
<div class="r" style="left:691px;top:1009px;width:1px;height:21px;background:#c5cde0;"></div>
<div class="r" style="left:865px;top:1009px;width:1px;height:21px;background:#c5cde0;"></div>
<div class="r" style="left:918px;top:1009px;width:1px;height:21px;background:#c5cde0;"></div>
<div class="r" style="left:987px;top:1009px;width:1px;height:21px;background:#c5cde0;"></div>
<div class="r" style="left:1087px;top:1009px;width:1px;height:21px;background:#c5cde0;"></div>
<div class="r" style="left:1238px;top:1009px;width:1px;height:21px;background:#c5cde0;"></div>
<div class="r" style="left:1342px;top:1009px;width:1px;height:21px;background:#c5cde0;"></div>
<div class="r" style="left:1506px;top:1009px;width:1px;height:21px;background:#c5cde0;"></div>
<div class="r" style="left:1553px;top:1009px;width:1px;height:21px;background:#c5cde0;"></div>
<div class="r" style="left:1911px;top:1009px;width:1px;height:21px;background:#c5cde0;"></div>
<div class="r" style="left:693px;top:1009px;width:172px;height:21px;background:#d3d9f1;"></div>
<div class="r" style="left:989px;top:1009px;width:98px;height:21px;background:#d3d9f1;"></div>
<div class="r" style="left:1239px;top:1009px;width:103px;height:21px;background:#d3d9f1;"></div>
<div class="t" style="left:7.5px;top:1012.0px;font-size:15px;line-height:18px;letter-spacing:-0.93px;color:#2a2a2a;">PlanC</div>
<div class="t" style="left:75.0px;top:1012.0px;font-size:15px;line-height:18px;letter-spacing:-0.47px;color:#2a2a2a;">x 349.886</div>
<div class="t" style="left:183.0px;top:1012.0px;font-size:15px;line-height:18px;letter-spacing:-0.47px;color:#2a2a2a;">y 236.416</div>
<div class="t" style="left:317.7px;top:1012.0px;font-size:15px;line-height:18px;letter-spacing:-0.20px;color:#2a2a2a;">z</div>
<div class="t" style="left:393.3px;top:1012.0px;font-size:15px;line-height:18px;letter-spacing:0.16px;color:#2a2a2a;">Millimètres</div>
<div class="t" style="left:505.8px;top:1012.0px;font-size:15px;line-height:18px;letter-spacing:0.18px;color:#2a2a2a;">motif sur photophore</div>
<div class="t" style="left:697.7px;top:1012.0px;font-size:15px;line-height:18px;letter-spacing:-0.14px;color:#2a2a2a;font-weight:bold;">Magnétisme de la grille</div>
<div class="t" style="left:873.3px;top:1012.0px;font-size:15px;line-height:18px;letter-spacing:-0.12px;color:#2a2a2a;">Ortho</div>
<div class="t" style="left:927.5px;top:1012.0px;font-size:15px;line-height:18px;letter-spacing:-0.29px;color:#2a2a2a;">Planéité</div>
<div class="t" style="left:994.4px;top:1012.0px;font-size:15px;line-height:18px;letter-spacing:-0.60px;color:#2a2a2a;font-weight:bold;">Accrochages</div>
<div class="t" style="left:1096.0px;top:1012.0px;font-size:15px;line-height:18px;letter-spacing:0.08px;color:#2a2a2a;">Repérage intelligent</div>
<div class="t" style="left:1244.0px;top:1012.0px;font-size:15px;line-height:18px;letter-spacing:0.01px;color:#2a2a2a;font-weight:bold;">Manipulateur</div>
<div class="t" style="left:1351.0px;top:1012.0px;font-size:15px;line-height:18px;letter-spacing:-0.03px;color:#2a2a2a;">Enregistrer l'historique</div>
<div class="t" style="left:1515.0px;top:1012.0px;font-size:15px;line-height:18px;letter-spacing:-0.14px;color:#2a2a2a;">Filtre</div>
<div class="t" style="left:1557.0px;top:1012.0px;font-size:15px;line-height:18px;letter-spacing:0.07px;color:#2a2a2a;">Utilisation de la mémoire : 588 Mo</div>
<div class="r" style="left:488px;top:1013px;width:14px;height:14px;background:#ffdbb7;border:1px solid #555;box-sizing:border-box"></div>
<div class="r" style="left:0px;top:1030px;width:1920px;height:50px;background:linear-gradient(90deg,#e5e5d2 0px,#e8e8dc 500px,#e4eadb 560px,#dfeeda 640px,#e9efd6 690px,#f0edd2 740px,#f2e9d2 830px,#f1e8d3 900px,#e9ead5 960px,#e8ecd2 1040px,#e9ecd2 1300px,#e8ebd6 1450px,#e8e9df 1560px,#e7e8e2 1920px);"></div>
<svg class="r" style="left:20px;top:1045px" width="20" height="20" viewBox="0 0 20 20" fill="#000"><path d="M0 2.8L8.2 1.7V9.5H0Z M9.2 1.55L20 0V9.5H9.2Z M0 10.5H8.2V18.3L0 17.2Z M9.2 10.5H20V20L9.2 18.45Z"/></svg>
<div class="r" style="left:60.5px;top:1030.5px;width:428px;height:49px;background:#fff;border:1px solid #c9c9c9;box-sizing:border-box"></div>
<svg class="r" style="left:72px;top:1042px" width="26" height="26" viewBox="0 0 26 26" fill="none" stroke="#111" stroke-width="1.5"><circle cx="14.8" cy="10.5" r="6.2"/><path d="M10.4 15L3.2 22.4"/></svg>
<div class="t" style="left:110.8px;top:1044.3px;font-size:18px;line-height:22px;letter-spacing:0.44px;color:#1a1a1a;">Taper ici pour rechercher</div>
<svg class="r" style="left:505px;top:1040px" width="30" height="30" viewBox="0 0 30 30" fill="none" stroke="#0a0a0a" stroke-width="2.6"><circle cx="15" cy="14.7" r="8.3"/></svg>
<svg class="r" style="left:568px;top:1043px" width="24" height="22" viewBox="0 0 24 22" fill="none" stroke="#111" stroke-width="1.3"><path d="M2.3 1.5V4.2H14.5V1.5M2.3 20.5V17.8H14.5V20.5"/><rect x="2.3" y="6.8" width="12.2" height="8.4"/><path d="M20.3 1.5V6.5M20.3 11V20.5"/><rect x="19" y="7.2" width="2.6" height="2.6" fill="#111" stroke="none"/></svg>
<svg class="r" style="left:629px;top:1039px" width="31" height="31" viewBox="0 0 31 31"><defs><linearGradient id="eg1" x1="0" y1="0" x2="1" y2="0.6"><stop offset="0" stop-color="#35c1f1"/><stop offset="0.55" stop-color="#2ab7d9"/><stop offset="1" stop-color="#6fdc58"/></linearGradient><linearGradient id="eg2" x1="0" y1="0" x2="0" y2="1"><stop offset="0" stop-color="#1d80d8"/><stop offset="1" stop-color="#1560b9"/></linearGradient></defs>
<circle cx="15.5" cy="15.5" r="15" fill="url(#eg1)"/>
<path d="M0.6 14.5C0.2 24 7 30.6 15.8 30.5C21 30.4 25.5 28 28.6 23.4C25 25.6 19.6 25.6 16 22.5C12.4 19.4 12 15 14.5 12.2C16.6 10 19.7 10.2 21 11.8C22.2 13.4 21 15.6 19.2 16.2C21 18.4 26 18.6 28.8 16.5C30.4 15.2 30.6 13 30.3 11.5C28 5.5 22 4 17 5C8 6.5 1.5 10 0.6 14.5Z" fill="url(#eg2)"/>
<path d="M8 20C8 26 13 30.5 19 30C23 29.5 26.7 27 28.6 23.4C25 25.6 19.6 25.6 16 22.5C12.4 19.4 12 15 14.5 12.2C10.5 13 8 16 8 20Z" fill="#134a9e"/>
<path d="M19.2 16.2C21 18.4 26 18.6 28.8 16.5C27 18 22 19.5 19.2 16.2Z" fill="#e7ecdc"/><path d="M16.5 14.5C16 17 18 19 21 19.3C25 19.6 28 18 29.5 16C27 18.2 21.2 18.6 19.2 16.2C21 15.6 22.2 13.4 21 11.8C19.5 11.5 17 12.5 16.5 14.5Z" fill="#e6ecda"/></svg>
<svg class="r" style="left:692px;top:1043px" width="28" height="23" viewBox="0 0 28 23"><path d="M0 1.5Q0 0 1.5 0H10.5L12.5 2.5H0Z" fill="#e8a813"/><path d="M0 2.2H10L12 0.8" fill="#e8a813"/><rect x="0" y="2.5" width="27.5" height="19.5" rx="1" fill="#fdd15b"/><rect x="0" y="2.5" width="27.5" height="3" fill="#f8c440"/><path d="M5 22.5V14Q5 12.5 6.5 12.5H21Q22.5 12.5 22.5 14V22.5H17.5V17H10V22.5Z" fill="#3b93de"/></svg>
<svg class="r" style="left:753px;top:1040px" width="30" height="30" viewBox="0 0 30 30"><rect width="30" height="30" fill="#29a7d6"/><path d="M11 5H15.5L12.5 25H6.5Z" fill="#123a85"/><path d="M11 5H15.5V20.5H23.5V25H8.5Z" fill="#fff"/><path d="M8.5 25L11 5V20.5Z" fill="#123a85"/></svg>
<svg class="r" style="left:818px;top:1040px" width="24" height="29" viewBox="0 0 24 29"><defs><linearGradient id="og" x1="0" y1="0" x2="0" y2="1"><stop offset="0" stop-color="#f06a1b"/><stop offset="1" stop-color="#d23a10"/></linearGradient><linearGradient id="og2" x1="0" y1="0" x2="0" y2="1"><stop offset="0" stop-color="#c2271d"/><stop offset="1" stop-color="#a92046"/></linearGradient></defs><path d="M12.5 0.3L23 3.8V25L12.5 28.7L1 24.5L12.5 26V4.8Z" fill="url(#og)"/><path d="M12.5 0.3L1 5.5V24.5L6 21.5V8L12.5 6V0.3Z" fill="url(#og2)"/><path d="M1 24.5L12.5 28.7V26Z" fill="#b01e2e"/></svg>
<svg class="r" style="left:876px;top:1039px" width="31" height="31" viewBox="0 0 31 31"><defs><radialGradient id="fg" cx="0.75" cy="0.15" r="1"><stop offset="0" stop-color="#ffe226"/><stop offset="0.35" stop-color="#ff9a1f"/><stop offset="0.7" stop-color="#ff3b4b"/><stop offset="1" stop-color="#e2208b"/></radialGradient><radialGradient id="fp" cx="0.5" cy="0.4" r="0.6"><stop offset="0" stop-color="#9059ff"/><stop offset="1" stop-color="#6a35d6"/></radialGradient></defs><path d="M17.5 0.5C19 3 21 4 23 6C27 8 30 13 29.6 18C29 26 23 30.6 15.6 30.6C7.5 30.6 1.4 24.6 1.4 17C1.4 12.5 3 9.5 5 7.5C5 9 5.5 10 6 10.5C7.5 8 10 6.5 12.5 6.2C14 5 16.5 3 17.5 0.5Z" fill="url(#fg)"/><circle cx="15.6" cy="17.5" r="6.8" fill="url(#fp)"/><path d="M7 12.5C9 11 12 11 13.5 12.5C15 14 17 14.5 19 13.8C17.5 16 14 17 11.5 16C9 15 7.5 14 7 12.5Z" fill="#ff9a1f"/></svg>
<div class="r" style="left:867px;top:1077px;width:51px;height:3px;background:#0f78d6;"></div>
<svg class="r" style="left:939px;top:1040px" width="30" height="30" viewBox="0 0 30 30"><path d="M6 0H30V23L23.5 30H0V6Z" fill="#11a4e2"/><path d="M23 8.5H15.5A6.5 6.5 0 0 0 15.5 21.5H23" fill="none" stroke="#fff" stroke-width="4.4"/></svg>
<svg class="r" style="left:1001px;top:1040px" width="30" height="30" viewBox="0 0 30 30"><rect width="30" height="30" rx="0.500" fill="#000"/><path d="M0 0L8.500 0.700L11.500 5L13.500 9.500L14.500 11L16.500 14.500L19 15.500L21.500 14.500L20 17.500L24 17L27 15L30 12.500V16L26 19.500L22.500 23L21.500 27L19 28.500L17 28L14.500 25.500L10 23L7.500 21.500L6.500 22L3.500 17.500L0 15Z" fill="#fff"/><path d="M5.700 0Q5.600 6.500 2.400 11.200" fill="none" stroke="#000" stroke-width="2.300" stroke-linecap="round"/><path d="M13 10.800Q9 12.500 5.700 14.600L7.200 21.600" fill="none" stroke="#000" stroke-width="1.100"/><path d="M8.300 16.300L10 17L10.800 18.600L12.200 19L15.500 18.200L13.600 19.300L12.400 22L8.400 20.400Z" fill="#000"/><path d="M21.800 14.300Q21.300 16.500 19.600 17.900" fill="none" stroke="#000" stroke-width="1.600" stroke-linecap="round"/><path d="M17 26L19.500 25.500" stroke="#aaa" stroke-width="0.800"/><path d="M21.500 1.700H28L23.300 11.800" fill="none" stroke="#fff" stroke-width="1.500" stroke-linecap="round" stroke-linejoin="round"/></svg>
<div class="r" style="left:1048px;top:1030px;width:61px;height:50px;background:rgba(255,255,255,0.5);"></div>
<svg class="r" style="left:1063px;top:1040px" width="30" height="30" viewBox="0 0 30 30"><rect width="30" height="30" rx="0.500" fill="#000"/><path d="M0 0L8.500 0.700L11.500 5L13.500 9.500L14.500 11L16.500 14.500L19 15.500L21.500 14.500L20 17.500L24 17L27 15L30 12.500V16L26 19.500L22.500 23L21.500 27L19 28.500L17 28L14.500 25.500L10 23L7.500 21.500L6.500 22L3.500 17.500L0 15Z" fill="#fff"/><path d="M5.700 0Q5.600 6.500 2.400 11.200" fill="none" stroke="#000" stroke-width="2.300" stroke-linecap="round"/><path d="M13 10.800Q9 12.500 5.700 14.600L7.200 21.600" fill="none" stroke="#000" stroke-width="1.100"/><path d="M8.300 16.300L10 17L10.800 18.600L12.200 19L15.500 18.200L13.600 19.300L12.400 22L8.400 20.400Z" fill="#000"/><path d="M21.800 14.300Q21.300 16.500 19.600 17.900" fill="none" stroke="#000" stroke-width="1.600" stroke-linecap="round"/><path d="M17 26L19.500 25.500" stroke="#aaa" stroke-width="0.800"/><path d="M21.500 1.700H28L23.300 11.800" fill="none" stroke="#fff" stroke-width="1.500" stroke-linecap="round" stroke-linejoin="round"/></svg>
<div class="r" style="left:1048px;top:1077px;width:61px;height:3px;background:#0f78d6;"></div>
<svg class="r" style="left:1313px;top:1042px" width="30" height="26" viewBox="0 0 30 26"><defs><linearGradient id="sg" x1="0.3" y1="0" x2="0.6" y2="1"><stop offset="0" stop-color="#ffd84a"/><stop offset="1" stop-color="#f8980f"/></linearGradient></defs><circle cx="12.8" cy="13" r="11.6" fill="url(#sg)"/><path d="M13 20.5A4 4 0 0 1 13 12.8A5.2 5.2 0 0 1 22.8 11.6A4.3 4.3 0 0 1 24.5 20.5Z" fill="#dfeefb" stroke="#bcd8f4" stroke-width="0.6"/></svg>
<div class="t" style="left:1351.7px;top:1046.8px;font-size:17px;line-height:20px;letter-spacing:-0.74px;color:#1a1a1a;">8°C</div>
<div class="t" style="left:1390.0px;top:1046.8px;font-size:17px;line-height:20px;letter-spacing:-0.02px;color:#1a1a1a;">Très ensoleillé</div>
<svg class="r" style="left:0;top:0" width="1920" height="1080" viewBox="0 0 1920 1080" fill="none" stroke="#222" stroke-width="1.3">
<path d="M1520 1058.8L1528 1051.3L1536 1058.8"/>
<rect x="1552.500" y="1049.500" width="8.500" height="11" rx="1.500"/><path d="M1561 1053.500L1565.500 1051V1059L1561 1056.500"/><path d="M1553.500 1047Q1557 1045 1560.500 1047M1553.500 1063Q1557 1065 1560.500 1063" stroke-width="1"/>
<path d="M1582 1060A3.800 3.800 0 0 1 1581.500 1052.500A5.500 5.500 0 0 1 1592 1051.200A4.400 4.400 0 0 1 1593.500 1060Z" fill="#8d8d8d" stroke="#4a4a4a" stroke-width="1.100"/>
<path d="M1608.700 1047.500L1627.300 1045.500V1062.500L1608.700 1061Z"/><path d="M1613.500 1053A4 4 0 0 1 1621 1052.500M1621 1052.500V1050M1621 1052.500H1618.500M1621 1056A4 4 0 0 1 1613.500 1056.500M1613.500 1056.500V1059M1613.500 1056.500H1616" stroke-width="1"/><circle cx="1623.300" cy="1060.800" r="4.300" fill="#f7931e" stroke="none"/>
<rect x="1642.500" y="1050.300" width="14" height="8.700" fill="#111"/><path d="M1657.200 1053V1056.500" stroke-width="1.500"/><path d="M1638.500 1052.500H1641.500M1640 1048.500V1052.500M1640 1052.500V1060.500" stroke-width="1.200"/><path d="M1638.500 1049V1052M1641.500 1049V1052" stroke-width="0.900"/>
<path d="M1677.500 1062A8 8 0 0 1 1685.500 1054M1674.300 1062A11.200 11.200 0 0 1 1685.500 1050.800M1671.200 1062A14.300 14.300 0 0 1 1685.500 1047.700M1680.700 1062A4.800 4.800 0 0 1 1685.500 1057.200" stroke-width="1.200"/><circle cx="1684.600" cy="1061.300" r="1.300" fill="#222" stroke="none"/>
<path d="M1698.500 1052.300H1701.500L1705 1048.500V1062.500L1701.500 1058.700H1698.500Z"/><path d="M1708 1053A3.500 3.500 0 0 1 1708 1058" stroke-width="1.100"/><path d="M1711.500 1049.500A8 8 0 0 1 1711.500 1061.500" stroke="#999" stroke-width="1"/><path d="M1715 1047A11 11 0 0 1 1715 1064" stroke="#bbb" stroke-width="1"/>
</svg>
<div class="t" style="left:1732.5px;top:1046.6px;font-size:15px;line-height:18px;letter-spacing:-1.67px;color:#1a1a1a;">FRA</div>
<div class="t" style="left:1794.7px;top:1034.3px;font-size:15px;line-height:18px;letter-spacing:-1.05px;color:#1a1a1a;">16:47</div>
<div class="t" style="left:1776.7px;top:1057.1px;font-size:15px;line-height:18px;letter-spacing:-0.68px;color:#1a1a1a;">04.02.2022</div>
<svg class="r" style="left:1866px;top:1040px" width="40" height="40" viewBox="0 0 40 40"><path d="M3 5H23V21H9.500L3 26.500Z" fill="#0a0a0a"/><path d="M6.500 9.500H19.500M6.500 13H19.500M6.500 16.500H19.500" stroke="#e8e8e0" stroke-width="1.100"/><circle cx="22.700" cy="24.500" r="9.800" fill="#dadad5" stroke="#8e8e8e" stroke-width="0.900"/></svg>
<div class="t" style="left:1884.7px;top:1055.8px;font-size:15px;line-height:18px;letter-spacing:-0.34px;color:#111;">5</div>
<div class="r" style="left:1914.5px;top:1030px;width:1px;height:50px;background:#b9b9b2;"></div>
</body></html>
